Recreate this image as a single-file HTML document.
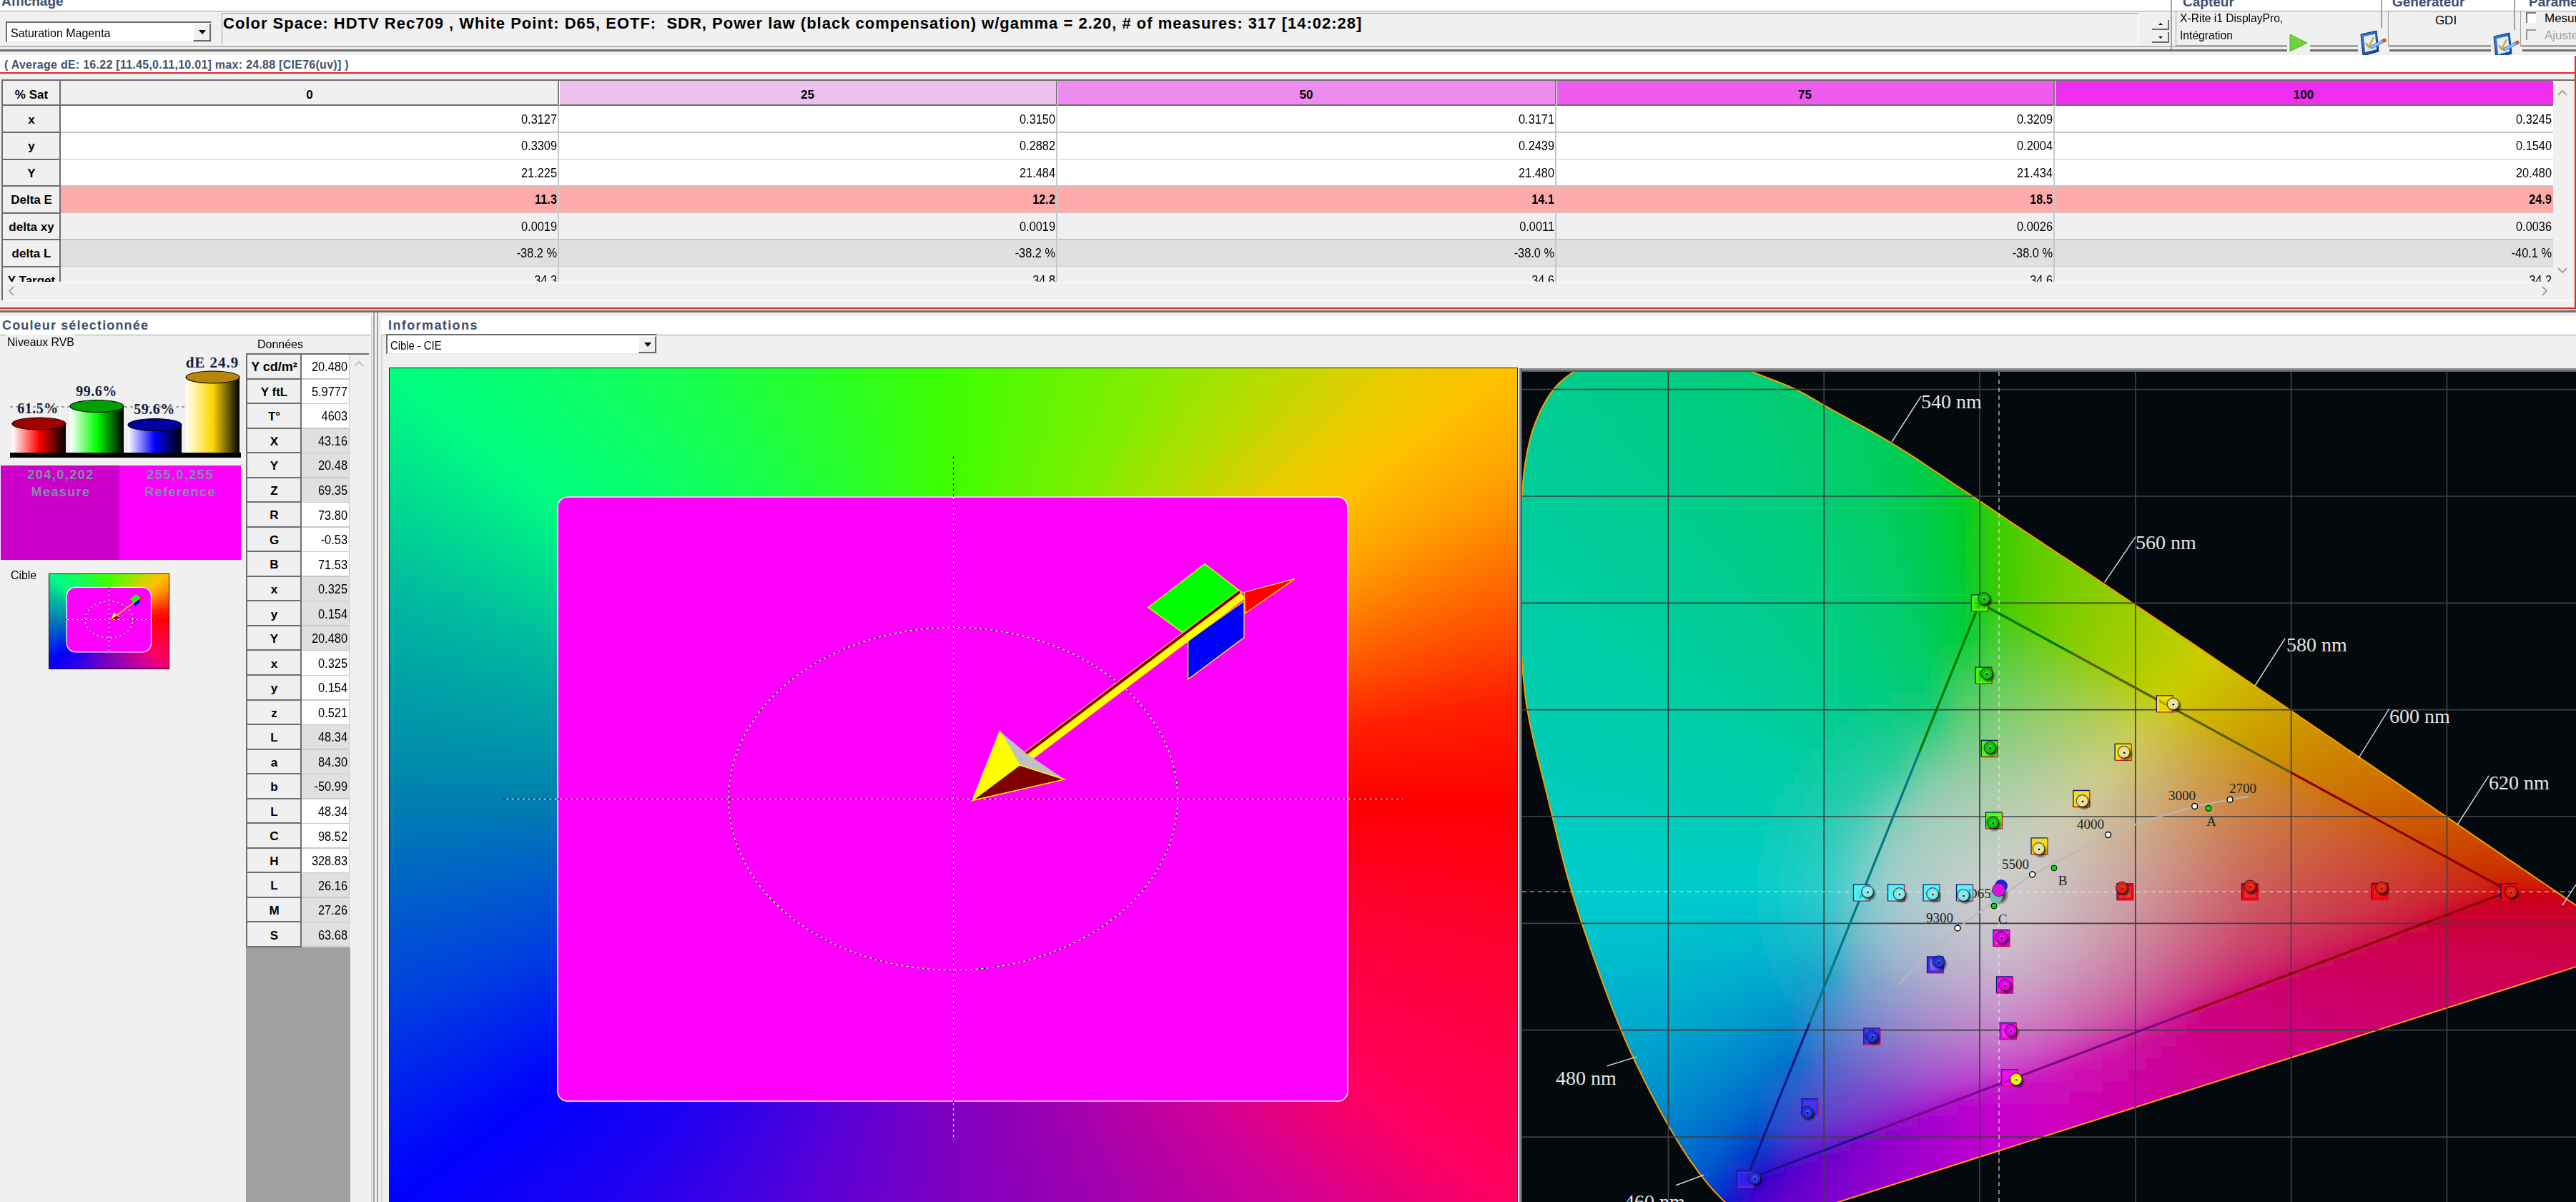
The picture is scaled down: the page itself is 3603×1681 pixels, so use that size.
<!DOCTYPE html><html><head><meta charset="utf-8"><style>html,body{margin:0;padding:0;}body{width:3603px;height:1681px;position:relative;overflow:hidden;background:#f0f0f0;font-family:"Liberation Sans",sans-serif}</style></head><body><div style="position:absolute;left:0px;top:0px;width:3603px;height:15px;background:#ffffff;"></div><div style="position:absolute;left:2px;top:-8.1px;font:bold 19px/1 'Liberation Sans', sans-serif;color:#3d4d70;white-space:pre;">Affichage</div><div style="position:absolute;left:3053px;top:-7.1px;font:bold 19px/1 'Liberation Sans', sans-serif;color:#3d4d70;white-space:pre;">Capteur</div><div style="position:absolute;left:3346px;top:-7.1px;font:bold 19px/1 'Liberation Sans', sans-serif;color:#3d4d70;white-space:pre;">Générateur</div><div style="position:absolute;left:3537px;top:-7.1px;font:bold 19px/1 'Liberation Sans', sans-serif;color:#3d4d70;white-space:pre;">Paramètres</div><div style="position:absolute;left:0px;top:15px;width:3603px;height:1px;background:#a0a0a0;"></div><div style="position:absolute;left:8px;top:30px;width:288px;height:29px;background:#ffffff;border-top:2px solid #6b6b6b;border-left:2px solid #6b6b6b;border-bottom:1px solid #e3e3e3;border-right:1px solid #e3e3e3;box-sizing:border-box"></div><div style="position:absolute;left:270px;top:33px;width:25px;height:25px;background:#f0f0f0;border-right:2px solid #696969;border-bottom:2px solid #696969;border-left:1px solid #fff;border-top:1px solid #fff;box-sizing:border-box"></div><svg style="position:absolute;left:278px;top:42px" width="10" height="7"><path d="M0 0H10L5 6Z" fill="#000"/></svg><div style="position:absolute;left:15px;top:37.6px;font:normal 17px/1 'Liberation Sans', sans-serif;color:#000;white-space:pre;transform:scaleX(0.94);transform-origin:left;">Saturation Magenta</div><div style="position:absolute;left:310px;top:18px;width:2682px;height:44px;background:#f0f0f0;border-top:1px solid #a0a0a0;border-left:1px solid #a0a0a0;border-bottom:1px solid #fff;border-right:1px solid #fff;box-sizing:border-box"></div><div style="position:absolute;left:312px;top:22.4px;font:bold 22px/1 'Liberation Sans', sans-serif;color:#000;white-space:pre;letter-spacing:1px">Color Space: HDTV Rec709 , White Point: D65, EOTF:  SDR, Power law (black compensation) w/gamma = 2.20, # of measures: 317 [14:02:28]</div><div style="position:absolute;left:3010px;top:28px;width:24px;height:14px;background:#f0f0f0;border-right:2px solid #696969;border-bottom:2px solid #696969;box-sizing:border-box"></div><div style="position:absolute;left:3010px;top:45px;width:24px;height:15px;background:#f0f0f0;border-right:2px solid #696969;border-bottom:2px solid #696969;box-sizing:border-box"></div><svg style="position:absolute;left:3019px;top:32px" width="6" height="4"><path d="M0 3H6L3 0Z" fill="#000"/></svg><svg style="position:absolute;left:3019px;top:51px" width="6" height="4"><path d="M0 0H6L3 3Z" fill="#000"/></svg><div style="position:absolute;left:3036px;top:0px;width:2px;height:70px;background:#a0a0a0;"></div><div style="position:absolute;left:0px;top:64px;width:3603px;height:2px;background:#b4b4b4;"></div><div style="position:absolute;left:0px;top:69px;width:3603px;height:3px;background:#6e6e6e;"></div><div style="position:absolute;left:3043px;top:16px;width:287px;height:49px;background:transparent;border-left:1px solid #a0a0a0;border-bottom:2px solid #a0a0a0;box-sizing:border-box"></div><div style="position:absolute;left:3330px;top:0px;width:2px;height:45px;background:#a0a0a0;"></div><div style="position:absolute;left:3049px;top:17.1px;font:normal 17px/1 'Liberation Sans', sans-serif;color:#000;white-space:pre;transform:scaleX(0.92);transform-origin:left;">X-Rite i1 DisplayPro,</div><div style="position:absolute;left:3049px;top:40.6px;font:normal 17px/1 'Liberation Sans', sans-serif;color:#000;white-space:pre;transform:scaleX(0.92);transform-origin:left;">Intégration</div><div style="position:absolute;left:3199px;top:42px;width:32px;height:34px;background:#f0f0f0;"></div><svg style="position:absolute;left:3200px;top:46px" width="30" height="28"><path d="M3 2L27 14L3 26Z" fill="#6cd23c" stroke="#58b030" stroke-width="1"/></svg><div style="position:absolute;left:3298px;top:39px;width:44px;height:40px;background:#f0f0f0;"></div><svg style="position:absolute;left:3300px;top:41px" width="40" height="38" viewBox="0 0 40 38"><defs><linearGradient id="ci3300" x1="0" y1="0" x2="1" y2="1"><stop offset="0" stop-color="#3a8ae0"/><stop offset="1" stop-color="#0a3a90"/></linearGradient></defs><path d="M2 7L24 2L27 31L5 37Z" fill="url(#ci3300)" stroke="#0a3080" stroke-width="1"/><path d="M6 10L22 6.5L24 28L8 32Z" fill="#e6eef9"/><path d="M9 19L13 25L20 11" fill="none" stroke="#d8a420" stroke-width="2.5"/><path d="M17 25L34 16" stroke="#5a9ee8" stroke-width="5" stroke-linecap="round"/><path d="M17 25L34 16" stroke="#a8d0f8" stroke-width="1.5"/><circle cx="35" cy="15.5" r="2.8" fill="#e05020"/></svg><div style="position:absolute;left:3340px;top:16px;width:176px;height:49px;background:transparent;border-left:1px solid #a0a0a0;border-bottom:2px solid #a0a0a0;box-sizing:border-box"></div><div style="position:absolute;left:3516px;top:0px;width:2px;height:45px;background:#a0a0a0;"></div><div style="position:absolute;left:2921px;width:1000px;text-align:center;top:19.6px;font:normal 17px/1 'Liberation Sans', sans-serif;color:#000;white-space:pre;">GDI</div><div style="position:absolute;left:3484px;top:42px;width:44px;height:40px;background:#f0f0f0;"></div><svg style="position:absolute;left:3486px;top:44px" width="40" height="38" viewBox="0 0 40 38"><defs><linearGradient id="ci3486" x1="0" y1="0" x2="1" y2="1"><stop offset="0" stop-color="#3a8ae0"/><stop offset="1" stop-color="#0a3a90"/></linearGradient></defs><path d="M2 7L24 2L27 31L5 37Z" fill="url(#ci3486)" stroke="#0a3080" stroke-width="1"/><path d="M6 10L22 6.5L24 28L8 32Z" fill="#e6eef9"/><path d="M9 19L13 25L20 11" fill="none" stroke="#d8a420" stroke-width="2.5"/><path d="M17 25L34 16" stroke="#5a9ee8" stroke-width="5" stroke-linecap="round"/><path d="M17 25L34 16" stroke="#a8d0f8" stroke-width="1.5"/><circle cx="35" cy="15.5" r="2.8" fill="#e05020"/></svg><div style="position:absolute;left:3525px;top:16px;width:78px;height:49px;background:transparent;border-left:1px solid #a0a0a0;border-bottom:2px solid #a0a0a0;box-sizing:border-box"></div><div style="position:absolute;left:3533px;top:17px;width:14px;height:15px;background:#fff;border-top:2px solid #777;border-left:2px solid #777;box-sizing:border-box"></div><div style="position:absolute;left:3533px;top:41px;width:14px;height:15px;background:#f0f0f0;border-top:2px solid #999;border-left:2px solid #999;box-sizing:border-box"></div><div style="position:absolute;left:3559px;top:16.6px;font:normal 17px/1 'Liberation Sans', sans-serif;color:#000;white-space:pre;">Mesur</div><div style="position:absolute;left:3559px;top:40.6px;font:normal 17px/1 'Liberation Sans', sans-serif;color:#a0a0a0;white-space:pre;">Ajuste</div><div style="position:absolute;left:0px;top:77px;width:3603px;height:25px;background:#ffffff;"></div><div style="position:absolute;left:0px;top:101px;width:3603px;height:2px;background:#e32626;"></div><div style="position:absolute;left:3601px;top:78px;width:2px;height:354px;background:#e32626;"></div><div style="position:absolute;left:6px;top:82.5px;font:bold 16px/1 'Liberation Sans', sans-serif;color:#44506c;white-space:pre;letter-spacing:0.27px">( Average dE: 16.22 [11.45,0.11,10.01] max: 24.88 [CIE76(uv)] )</div><div style="position:absolute;left:2px;top:111px;width:3599px;height:2px;background:#6e6e6e;"></div><div style="position:absolute;left:2px;top:111px;width:2px;height:309px;background:#6e6e6e;"></div><div style="position:absolute;left:4px;top:113px;width:3567px;height:281px;overflow:hidden"><div style="position:absolute;left:0px;top:0px;width:81px;height:34px;background:#f0f0f0;"></div><div style="position:absolute;left:81px;top:0px;width:696px;height:34px;background:#f0f0f0;"></div><div style="position:absolute;left:777px;top:0px;width:697px;height:34px;background:#eec1ee;"></div><div style="position:absolute;left:1474px;top:0px;width:698px;height:34px;background:#ee8bee;"></div><div style="position:absolute;left:2172px;top:0px;width:697px;height:34px;background:#ee5cee;"></div><div style="position:absolute;left:2869px;top:0px;width:698px;height:34px;background:#ee2eee;"></div><div style="position:absolute;left:0px;top:33px;width:3567px;height:2px;background:#6e6e6e;"></div><div style="position:absolute;left:-460px;width:1000px;text-align:center;top:10.6px;font:bold 17px/1 'Liberation Sans', sans-serif;color:#000;white-space:pre;">% Sat</div><div style="position:absolute;left:-71.0px;width:1000px;text-align:center;top:10.6px;font:bold 17px/1 'Liberation Sans', sans-serif;color:#000;white-space:pre;">0</div><div style="position:absolute;left:625.5px;width:1000px;text-align:center;top:10.6px;font:bold 17px/1 'Liberation Sans', sans-serif;color:#000;white-space:pre;">25</div><div style="position:absolute;left:1323.0px;width:1000px;text-align:center;top:10.6px;font:bold 17px/1 'Liberation Sans', sans-serif;color:#000;white-space:pre;">50</div><div style="position:absolute;left:2020.5px;width:1000px;text-align:center;top:10.6px;font:bold 17px/1 'Liberation Sans', sans-serif;color:#000;white-space:pre;">75</div><div style="position:absolute;left:2718.0px;width:1000px;text-align:center;top:10.6px;font:bold 17px/1 'Liberation Sans', sans-serif;color:#000;white-space:pre;">100</div><div style="position:absolute;left:0px;top:34.5px;width:81px;height:38px;background:#f0f0f0;"></div><div style="position:absolute;left:81px;top:34.5px;width:3486px;height:38px;background:#ffffff;"></div><div style="position:absolute;left:0px;top:72.0px;width:81px;height:38px;background:#f0f0f0;"></div><div style="position:absolute;left:81px;top:72.0px;width:3486px;height:38px;background:#ffffff;"></div><div style="position:absolute;left:0px;top:109.5px;width:81px;height:38px;background:#f0f0f0;"></div><div style="position:absolute;left:81px;top:109.5px;width:3486px;height:38px;background:#ffffff;"></div><div style="position:absolute;left:0px;top:147.0px;width:81px;height:38px;background:#f0f0f0;"></div><div style="position:absolute;left:81px;top:147.0px;width:3486px;height:38px;background:#ffaaaa;"></div><div style="position:absolute;left:0px;top:184.5px;width:81px;height:38px;background:#f0f0f0;"></div><div style="position:absolute;left:81px;top:184.5px;width:3486px;height:38px;background:#f0f0f0;"></div><div style="position:absolute;left:0px;top:222.0px;width:81px;height:38px;background:#f0f0f0;"></div><div style="position:absolute;left:81px;top:222.0px;width:3486px;height:38px;background:#e0e0e0;"></div><div style="position:absolute;left:0px;top:259.5px;width:81px;height:38px;background:#f0f0f0;"></div><div style="position:absolute;left:81px;top:259.5px;width:3486px;height:38px;background:#f0f0f0;"></div><div style="position:absolute;left:0px;top:71.0px;width:81px;height:2px;background:#6e6e6e;"></div><div style="position:absolute;left:81px;top:71.0px;width:3486px;height:1.5px;background:#c8c8c8;"></div><div style="position:absolute;left:0px;top:108.5px;width:81px;height:2px;background:#6e6e6e;"></div><div style="position:absolute;left:81px;top:108.5px;width:3486px;height:1.5px;background:#c8c8c8;"></div><div style="position:absolute;left:0px;top:146.0px;width:81px;height:2px;background:#6e6e6e;"></div><div style="position:absolute;left:81px;top:146.0px;width:3486px;height:1.5px;background:#c8c8c8;"></div><div style="position:absolute;left:0px;top:183.5px;width:81px;height:2px;background:#6e6e6e;"></div><div style="position:absolute;left:81px;top:183.5px;width:3486px;height:1.5px;background:#c8c8c8;"></div><div style="position:absolute;left:0px;top:221.0px;width:81px;height:2px;background:#6e6e6e;"></div><div style="position:absolute;left:81px;top:221.0px;width:3486px;height:1.5px;background:#c8c8c8;"></div><div style="position:absolute;left:0px;top:258.5px;width:81px;height:2px;background:#6e6e6e;"></div><div style="position:absolute;left:81px;top:258.5px;width:3486px;height:1.5px;background:#c8c8c8;"></div><div style="position:absolute;left:0px;top:296.0px;width:81px;height:2px;background:#6e6e6e;"></div><div style="position:absolute;left:81px;top:296.0px;width:3486px;height:1.5px;background:#c8c8c8;"></div><div style="position:absolute;left:-460px;width:1000px;text-align:center;top:45.6px;font:bold 17px/1 'Liberation Sans', sans-serif;color:#000;white-space:pre;">x</div><div style="position:absolute;left:-225px;width:1000px;text-align:right;top:43.9px;font:normal 19px/1 'Liberation Sans', sans-serif;color:#000;white-space:pre;transform:scaleX(0.86);transform-origin:right;">0.3127</div><div style="position:absolute;left:472px;width:1000px;text-align:right;top:43.9px;font:normal 19px/1 'Liberation Sans', sans-serif;color:#000;white-space:pre;transform:scaleX(0.86);transform-origin:right;">0.3150</div><div style="position:absolute;left:1170px;width:1000px;text-align:right;top:43.9px;font:normal 19px/1 'Liberation Sans', sans-serif;color:#000;white-space:pre;transform:scaleX(0.86);transform-origin:right;">0.3171</div><div style="position:absolute;left:1867px;width:1000px;text-align:right;top:43.9px;font:normal 19px/1 'Liberation Sans', sans-serif;color:#000;white-space:pre;transform:scaleX(0.86);transform-origin:right;">0.3209</div><div style="position:absolute;left:2565px;width:1000px;text-align:right;top:43.9px;font:normal 19px/1 'Liberation Sans', sans-serif;color:#000;white-space:pre;transform:scaleX(0.86);transform-origin:right;">0.3245</div><div style="position:absolute;left:-460px;width:1000px;text-align:center;top:83.1px;font:bold 17px/1 'Liberation Sans', sans-serif;color:#000;white-space:pre;">y</div><div style="position:absolute;left:-225px;width:1000px;text-align:right;top:81.4px;font:normal 19px/1 'Liberation Sans', sans-serif;color:#000;white-space:pre;transform:scaleX(0.86);transform-origin:right;">0.3309</div><div style="position:absolute;left:472px;width:1000px;text-align:right;top:81.4px;font:normal 19px/1 'Liberation Sans', sans-serif;color:#000;white-space:pre;transform:scaleX(0.86);transform-origin:right;">0.2882</div><div style="position:absolute;left:1170px;width:1000px;text-align:right;top:81.4px;font:normal 19px/1 'Liberation Sans', sans-serif;color:#000;white-space:pre;transform:scaleX(0.86);transform-origin:right;">0.2439</div><div style="position:absolute;left:1867px;width:1000px;text-align:right;top:81.4px;font:normal 19px/1 'Liberation Sans', sans-serif;color:#000;white-space:pre;transform:scaleX(0.86);transform-origin:right;">0.2004</div><div style="position:absolute;left:2565px;width:1000px;text-align:right;top:81.4px;font:normal 19px/1 'Liberation Sans', sans-serif;color:#000;white-space:pre;transform:scaleX(0.86);transform-origin:right;">0.1540</div><div style="position:absolute;left:-460px;width:1000px;text-align:center;top:120.6px;font:bold 17px/1 'Liberation Sans', sans-serif;color:#000;white-space:pre;">Y</div><div style="position:absolute;left:-225px;width:1000px;text-align:right;top:118.9px;font:normal 19px/1 'Liberation Sans', sans-serif;color:#000;white-space:pre;transform:scaleX(0.86);transform-origin:right;">21.225</div><div style="position:absolute;left:472px;width:1000px;text-align:right;top:118.9px;font:normal 19px/1 'Liberation Sans', sans-serif;color:#000;white-space:pre;transform:scaleX(0.86);transform-origin:right;">21.484</div><div style="position:absolute;left:1170px;width:1000px;text-align:right;top:118.9px;font:normal 19px/1 'Liberation Sans', sans-serif;color:#000;white-space:pre;transform:scaleX(0.86);transform-origin:right;">21.480</div><div style="position:absolute;left:1867px;width:1000px;text-align:right;top:118.9px;font:normal 19px/1 'Liberation Sans', sans-serif;color:#000;white-space:pre;transform:scaleX(0.86);transform-origin:right;">21.434</div><div style="position:absolute;left:2565px;width:1000px;text-align:right;top:118.9px;font:normal 19px/1 'Liberation Sans', sans-serif;color:#000;white-space:pre;transform:scaleX(0.86);transform-origin:right;">20.480</div><div style="position:absolute;left:-460px;width:1000px;text-align:center;top:158.1px;font:bold 17px/1 'Liberation Sans', sans-serif;color:#000;white-space:pre;">Delta E</div><div style="position:absolute;left:-225px;width:1000px;text-align:right;top:156.4px;font:bold 19px/1 'Liberation Sans', sans-serif;color:#000;white-space:pre;transform:scaleX(0.86);transform-origin:right;">11.3</div><div style="position:absolute;left:472px;width:1000px;text-align:right;top:156.4px;font:bold 19px/1 'Liberation Sans', sans-serif;color:#000;white-space:pre;transform:scaleX(0.86);transform-origin:right;">12.2</div><div style="position:absolute;left:1170px;width:1000px;text-align:right;top:156.4px;font:bold 19px/1 'Liberation Sans', sans-serif;color:#000;white-space:pre;transform:scaleX(0.86);transform-origin:right;">14.1</div><div style="position:absolute;left:1867px;width:1000px;text-align:right;top:156.4px;font:bold 19px/1 'Liberation Sans', sans-serif;color:#000;white-space:pre;transform:scaleX(0.86);transform-origin:right;">18.5</div><div style="position:absolute;left:2565px;width:1000px;text-align:right;top:156.4px;font:bold 19px/1 'Liberation Sans', sans-serif;color:#000;white-space:pre;transform:scaleX(0.86);transform-origin:right;">24.9</div><div style="position:absolute;left:-460px;width:1000px;text-align:center;top:195.6px;font:bold 17px/1 'Liberation Sans', sans-serif;color:#000;white-space:pre;">delta xy</div><div style="position:absolute;left:-225px;width:1000px;text-align:right;top:193.9px;font:normal 19px/1 'Liberation Sans', sans-serif;color:#000;white-space:pre;transform:scaleX(0.86);transform-origin:right;">0.0019</div><div style="position:absolute;left:472px;width:1000px;text-align:right;top:193.9px;font:normal 19px/1 'Liberation Sans', sans-serif;color:#000;white-space:pre;transform:scaleX(0.86);transform-origin:right;">0.0019</div><div style="position:absolute;left:1170px;width:1000px;text-align:right;top:193.9px;font:normal 19px/1 'Liberation Sans', sans-serif;color:#000;white-space:pre;transform:scaleX(0.86);transform-origin:right;">0.0011</div><div style="position:absolute;left:1867px;width:1000px;text-align:right;top:193.9px;font:normal 19px/1 'Liberation Sans', sans-serif;color:#000;white-space:pre;transform:scaleX(0.86);transform-origin:right;">0.0026</div><div style="position:absolute;left:2565px;width:1000px;text-align:right;top:193.9px;font:normal 19px/1 'Liberation Sans', sans-serif;color:#000;white-space:pre;transform:scaleX(0.86);transform-origin:right;">0.0036</div><div style="position:absolute;left:-460px;width:1000px;text-align:center;top:233.1px;font:bold 17px/1 'Liberation Sans', sans-serif;color:#000;white-space:pre;">delta L</div><div style="position:absolute;left:-225px;width:1000px;text-align:right;top:231.4px;font:normal 19px/1 'Liberation Sans', sans-serif;color:#000;white-space:pre;transform:scaleX(0.86);transform-origin:right;">-38.2 %</div><div style="position:absolute;left:472px;width:1000px;text-align:right;top:231.4px;font:normal 19px/1 'Liberation Sans', sans-serif;color:#000;white-space:pre;transform:scaleX(0.86);transform-origin:right;">-38.2 %</div><div style="position:absolute;left:1170px;width:1000px;text-align:right;top:231.4px;font:normal 19px/1 'Liberation Sans', sans-serif;color:#000;white-space:pre;transform:scaleX(0.86);transform-origin:right;">-38.0 %</div><div style="position:absolute;left:1867px;width:1000px;text-align:right;top:231.4px;font:normal 19px/1 'Liberation Sans', sans-serif;color:#000;white-space:pre;transform:scaleX(0.86);transform-origin:right;">-38.0 %</div><div style="position:absolute;left:2565px;width:1000px;text-align:right;top:231.4px;font:normal 19px/1 'Liberation Sans', sans-serif;color:#000;white-space:pre;transform:scaleX(0.86);transform-origin:right;">-40.1 %</div><div style="position:absolute;left:-460px;width:1000px;text-align:center;top:270.6px;font:bold 17px/1 'Liberation Sans', sans-serif;color:#000;white-space:pre;">Y Target</div><div style="position:absolute;left:-225px;width:1000px;text-align:right;top:268.9px;font:normal 19px/1 'Liberation Sans', sans-serif;color:#000;white-space:pre;transform:scaleX(0.86);transform-origin:right;">34.3</div><div style="position:absolute;left:472px;width:1000px;text-align:right;top:268.9px;font:normal 19px/1 'Liberation Sans', sans-serif;color:#000;white-space:pre;transform:scaleX(0.86);transform-origin:right;">34.8</div><div style="position:absolute;left:1170px;width:1000px;text-align:right;top:268.9px;font:normal 19px/1 'Liberation Sans', sans-serif;color:#000;white-space:pre;transform:scaleX(0.86);transform-origin:right;">34.6</div><div style="position:absolute;left:1867px;width:1000px;text-align:right;top:268.9px;font:normal 19px/1 'Liberation Sans', sans-serif;color:#000;white-space:pre;transform:scaleX(0.86);transform-origin:right;">34.6</div><div style="position:absolute;left:2565px;width:1000px;text-align:right;top:268.9px;font:normal 19px/1 'Liberation Sans', sans-serif;color:#000;white-space:pre;transform:scaleX(0.86);transform-origin:right;">34.2</div><div style="position:absolute;left:79px;top:0px;width:2px;height:281px;background:#6e6e6e;"></div><div style="position:absolute;left:776px;top:34px;width:1.5px;height:247px;background:#c8c8c8;"></div><div style="position:absolute;left:1473px;top:34px;width:1.5px;height:247px;background:#c8c8c8;"></div><div style="position:absolute;left:2171px;top:34px;width:1.5px;height:247px;background:#c8c8c8;"></div><div style="position:absolute;left:2868px;top:34px;width:1.5px;height:247px;background:#c8c8c8;"></div><div style="position:absolute;left:776px;top:0px;width:2px;height:34px;background:#7a7a7a;"></div><div style="position:absolute;left:778px;top:0px;width:1px;height:34px;background:#ffffff;"></div><div style="position:absolute;left:1473px;top:0px;width:2px;height:34px;background:#7a7a7a;"></div><div style="position:absolute;left:1475px;top:0px;width:1px;height:34px;background:#ffffff;"></div><div style="position:absolute;left:2171px;top:0px;width:2px;height:34px;background:#7a7a7a;"></div><div style="position:absolute;left:2173px;top:0px;width:1px;height:34px;background:#ffffff;"></div><div style="position:absolute;left:2868px;top:0px;width:2px;height:34px;background:#7a7a7a;"></div><div style="position:absolute;left:2870px;top:0px;width:1px;height:34px;background:#ffffff;"></div></div><div style="position:absolute;left:3571px;top:113px;width:27px;height:281px;background:#f0f0f0;"></div><svg style="position:absolute;left:3577px;top:125px" width="14" height="10"><path d="M1 8L7 2L13 8" fill="none" stroke="#a6a6a6" stroke-width="2"/></svg><svg style="position:absolute;left:3577px;top:373px" width="14" height="10"><path d="M1 2L7 8L13 2" fill="none" stroke="#a6a6a6" stroke-width="2"/></svg><div style="position:absolute;left:4px;top:394px;width:3594px;height:26px;background:#f0f0f0;"></div><div style="position:absolute;left:4px;top:394px;width:3567px;height:1px;background:#ffffff;"></div><svg style="position:absolute;left:11px;top:400px" width="10" height="14"><path d="M8 1L2 7L8 13" fill="none" stroke="#a6a6a6" stroke-width="2"/></svg><svg style="position:absolute;left:3554px;top:400px" width="10" height="14"><path d="M2 1L8 7L2 13" fill="none" stroke="#a6a6a6" stroke-width="2"/></svg><div style="position:absolute;left:2px;top:420px;width:3599px;height:1px;background:#ffffff;"></div><div style="position:absolute;left:0px;top:430px;width:3603px;height:2px;background:#e32626;"></div><div style="position:absolute;left:0px;top:434px;width:3603px;height:3px;background:#707070;"></div><div style="position:absolute;left:0px;top:442px;width:520px;height:26px;background:#ffffff;border-top-right-radius:8px"></div><div style="position:absolute;left:533px;top:442px;width:3070px;height:26px;background:#ffffff;border-top-left-radius:8px"></div><div style="position:absolute;left:3px;top:445.8px;font:bold 18px/1 'Liberation Sans', sans-serif;color:#3d4d70;white-space:pre;letter-spacing:1.15px">Couleur sélectionnée</div><div style="position:absolute;left:543px;top:445.8px;font:bold 18px/1 'Liberation Sans', sans-serif;color:#3d4d70;white-space:pre;letter-spacing:1.4px">Informations</div><div style="position:absolute;left:0px;top:468px;width:520px;height:1px;background:#a0a0a0;"></div><div style="position:absolute;left:533px;top:468px;width:3070px;height:1px;background:#a0a0a0;"></div><div style="position:absolute;left:519px;top:442px;width:1px;height:1239px;background:#c8c8c8;"></div><div style="position:absolute;left:522px;top:437px;width:2px;height:1244px;background:#a0a0a0;"></div><div style="position:absolute;left:527px;top:437px;width:2px;height:1244px;background:#a0a0a0;"></div><div style="position:absolute;left:533px;top:468px;width:1px;height:1213px;background:#c8c8c8;"></div><div style="position:absolute;left:8px;top:468px;width:97px;height:3px;background:#f0f0f0;"></div><div style="position:absolute;left:10px;top:469.6px;font:normal 17px/1 'Liberation Sans', sans-serif;color:#000;white-space:pre;transform:scaleX(0.93);transform-origin:left;">Niveaux RVB</div><svg style="position:absolute;left:0;top:490px" width="345" height="160" viewBox="0 490 345 160"><defs><linearGradient id="gr" x1="0" x2="1"><stop offset="0" stop-color="#fff"/><stop offset="0.5" stop-color="#f00"/><stop offset="1" stop-color="#000"/></linearGradient><linearGradient id="gg" x1="0" x2="1"><stop offset="0" stop-color="#fff"/><stop offset="0.5" stop-color="#0f0"/><stop offset="1" stop-color="#000"/></linearGradient><linearGradient id="gb" x1="0" x2="1"><stop offset="0" stop-color="#fff"/><stop offset="0.5" stop-color="#00f"/><stop offset="1" stop-color="#000"/></linearGradient><linearGradient id="gy" x1="0" x2="1"><stop offset="0" stop-color="#fffef4"/><stop offset="0.5" stop-color="#ffd700"/><stop offset="1" stop-color="#000"/></linearGradient></defs><line x1="14" y1="569" x2="262" y2="569" stroke="#888" stroke-width="1.5" stroke-dasharray="4 4"/><rect x="17" y="592.5" width="75" height="40.5" fill="url(#gr)"/><ellipse cx="54.5" cy="592.5" rx="37.5" ry="8.5" fill="#a00000" stroke="#000" stroke-width="1.2"/><rect x="98" y="568" width="75" height="65" fill="url(#gg)"/><ellipse cx="135.5" cy="568" rx="37.5" ry="8.5" fill="#00a000" stroke="#000" stroke-width="1.2"/><rect x="179" y="594" width="75" height="39" fill="url(#gb)"/><ellipse cx="216.5" cy="594" rx="37.5" ry="8.5" fill="#0000a0" stroke="#000" stroke-width="1.2"/><rect x="260" y="527.5" width="75" height="105.5" fill="url(#gy)"/><ellipse cx="297.5" cy="527.5" rx="37.5" ry="8.5" fill="#b8860b" stroke="#000" stroke-width="1.2"/><rect x="14" y="633" width="323" height="7" fill="#000"/></svg><div style="position:absolute;left:-447px;width:1000px;text-align:center;top:561.3px;font:bold 20px/1 'Liberation Serif', serif;color:#141c3c;white-space:pre;letter-spacing:0.5px">61.5%</div><div style="position:absolute;left:-365px;width:1000px;text-align:center;top:537.3px;font:bold 20px/1 'Liberation Serif', serif;color:#141c3c;white-space:pre;letter-spacing:0.5px">99.6%</div><div style="position:absolute;left:-284px;width:1000px;text-align:center;top:562.3px;font:bold 20px/1 'Liberation Serif', serif;color:#141c3c;white-space:pre;letter-spacing:0.5px">59.6%</div><div style="position:absolute;left:-203px;width:1000px;text-align:center;top:496.5px;font:bold 21px/1 'Liberation Serif', serif;color:#141c3c;white-space:pre;letter-spacing:1px">dE 24.9</div><div style="position:absolute;left:1px;top:651px;width:166px;height:132px;background:#cc00ca;"></div><div style="position:absolute;left:167px;top:651px;width:170px;height:132px;background:#ff00ff;"></div><div style="position:absolute;left:-415px;width:1000px;text-align:center;top:654.8px;font:bold 18px/1 'Liberation Sans', sans-serif;color:#7f8fa8;white-space:pre;letter-spacing:1.5px">204,0,202</div><div style="position:absolute;left:-415px;width:1000px;text-align:center;top:678.8px;font:bold 18px/1 'Liberation Sans', sans-serif;color:#7f8fa8;white-space:pre;letter-spacing:1.4px">Measure</div><div style="position:absolute;left:-248px;width:1000px;text-align:center;top:654.8px;font:bold 18px/1 'Liberation Sans', sans-serif;color:#7f8fa8;white-space:pre;letter-spacing:1.5px">255,0,255</div><div style="position:absolute;left:-248px;width:1000px;text-align:center;top:678.8px;font:bold 18px/1 'Liberation Sans', sans-serif;color:#7f8fa8;white-space:pre;letter-spacing:1.4px">Reference</div><div style="position:absolute;left:15px;top:795.6px;font:normal 17px/1 'Liberation Sans', sans-serif;color:#000;white-space:pre;transform:scaleX(0.93);transform-origin:left;">Cible</div><div style="position:absolute;left:360px;top:472.6px;font:normal 17px/1 'Liberation Sans', sans-serif;color:#000;white-space:pre;transform:scaleX(0.94);transform-origin:left;">Données</div><div style="position:absolute;left:344px;top:494px;width:172px;height:2px;background:#6e6e6e;"></div><div style="position:absolute;left:344px;top:494px;width:2px;height:1187px;background:#6e6e6e;"></div><div style="position:absolute;left:346px;top:496.0px;width:75px;height:34.54px;background:#f0f0f0;"></div><div style="position:absolute;left:421px;top:496.0px;width:67px;height:34.54px;background:#ffffff;"></div><div style="position:absolute;left:346px;top:528.54px;width:75px;height:2px;background:#6e6e6e;"></div><div style="position:absolute;left:421px;top:529.04px;width:67px;height:1.5px;background:#c8c8c8;"></div><div style="position:absolute;left:-116.5px;width:1000px;text-align:center;top:504.3px;font:bold 18px/1 'Liberation Sans', sans-serif;color:#000;white-space:pre;">Y cd/m²</div><div style="position:absolute;left:-514px;width:1000px;text-align:right;top:504.3px;font:normal 18px/1 'Liberation Sans', sans-serif;color:#000;white-space:pre;transform:scaleX(0.91);transform-origin:right;">20.480</div><div style="position:absolute;left:346px;top:530.54px;width:75px;height:34.54px;background:#f0f0f0;"></div><div style="position:absolute;left:421px;top:530.54px;width:67px;height:34.54px;background:#ffffff;"></div><div style="position:absolute;left:346px;top:563.0799999999999px;width:75px;height:2px;background:#6e6e6e;"></div><div style="position:absolute;left:421px;top:563.5799999999999px;width:67px;height:1.5px;background:#c8c8c8;"></div><div style="position:absolute;left:-116.5px;width:1000px;text-align:center;top:539.6px;font:bold 17px/1 'Liberation Sans', sans-serif;color:#000;white-space:pre;">Y ftL</div><div style="position:absolute;left:-514px;width:1000px;text-align:right;top:538.8px;font:normal 18px/1 'Liberation Sans', sans-serif;color:#000;white-space:pre;transform:scaleX(0.91);transform-origin:right;">5.9777</div><div style="position:absolute;left:346px;top:565.08px;width:75px;height:34.54px;background:#f0f0f0;"></div><div style="position:absolute;left:421px;top:565.08px;width:67px;height:34.54px;background:#ffffff;"></div><div style="position:absolute;left:346px;top:597.62px;width:75px;height:2px;background:#6e6e6e;"></div><div style="position:absolute;left:421px;top:598.12px;width:67px;height:1.5px;background:#c8c8c8;"></div><div style="position:absolute;left:-116.5px;width:1000px;text-align:center;top:574.2px;font:bold 17px/1 'Liberation Sans', sans-serif;color:#000;white-space:pre;">T°</div><div style="position:absolute;left:-514px;width:1000px;text-align:right;top:573.3px;font:normal 18px/1 'Liberation Sans', sans-serif;color:#000;white-space:pre;transform:scaleX(0.91);transform-origin:right;">4603</div><div style="position:absolute;left:346px;top:599.62px;width:75px;height:34.54px;background:#f0f0f0;"></div><div style="position:absolute;left:421px;top:599.62px;width:67px;height:34.54px;background:#e0e0e0;"></div><div style="position:absolute;left:346px;top:632.16px;width:75px;height:2px;background:#6e6e6e;"></div><div style="position:absolute;left:421px;top:632.66px;width:67px;height:1.5px;background:#c8c8c8;"></div><div style="position:absolute;left:-116.5px;width:1000px;text-align:center;top:608.7px;font:bold 17px/1 'Liberation Sans', sans-serif;color:#000;white-space:pre;">X</div><div style="position:absolute;left:-514px;width:1000px;text-align:right;top:607.9px;font:normal 18px/1 'Liberation Sans', sans-serif;color:#000;white-space:pre;transform:scaleX(0.91);transform-origin:right;">43.16</div><div style="position:absolute;left:346px;top:634.16px;width:75px;height:34.54px;background:#f0f0f0;"></div><div style="position:absolute;left:421px;top:634.16px;width:67px;height:34.54px;background:#e0e0e0;"></div><div style="position:absolute;left:346px;top:666.6999999999999px;width:75px;height:2px;background:#6e6e6e;"></div><div style="position:absolute;left:421px;top:667.1999999999999px;width:67px;height:1.5px;background:#c8c8c8;"></div><div style="position:absolute;left:-116.5px;width:1000px;text-align:center;top:643.3px;font:bold 17px/1 'Liberation Sans', sans-serif;color:#000;white-space:pre;">Y</div><div style="position:absolute;left:-514px;width:1000px;text-align:right;top:642.4px;font:normal 18px/1 'Liberation Sans', sans-serif;color:#000;white-space:pre;transform:scaleX(0.91);transform-origin:right;">20.48</div><div style="position:absolute;left:346px;top:668.7px;width:75px;height:34.54px;background:#f0f0f0;"></div><div style="position:absolute;left:421px;top:668.7px;width:67px;height:34.54px;background:#e0e0e0;"></div><div style="position:absolute;left:346px;top:701.24px;width:75px;height:2px;background:#6e6e6e;"></div><div style="position:absolute;left:421px;top:701.74px;width:67px;height:1.5px;background:#c8c8c8;"></div><div style="position:absolute;left:-116.5px;width:1000px;text-align:center;top:677.8px;font:bold 17px/1 'Liberation Sans', sans-serif;color:#000;white-space:pre;">Z</div><div style="position:absolute;left:-514px;width:1000px;text-align:right;top:677.0px;font:normal 18px/1 'Liberation Sans', sans-serif;color:#000;white-space:pre;transform:scaleX(0.91);transform-origin:right;">69.35</div><div style="position:absolute;left:346px;top:703.24px;width:75px;height:34.54px;background:#f0f0f0;"></div><div style="position:absolute;left:421px;top:703.24px;width:67px;height:34.54px;background:#ffffff;"></div><div style="position:absolute;left:346px;top:735.78px;width:75px;height:2px;background:#6e6e6e;"></div><div style="position:absolute;left:421px;top:736.28px;width:67px;height:1.5px;background:#c8c8c8;"></div><div style="position:absolute;left:-116.5px;width:1000px;text-align:center;top:712.3px;font:bold 17px/1 'Liberation Sans', sans-serif;color:#000;white-space:pre;">R</div><div style="position:absolute;left:-514px;width:1000px;text-align:right;top:711.5px;font:normal 18px/1 'Liberation Sans', sans-serif;color:#000;white-space:pre;transform:scaleX(0.91);transform-origin:right;">73.80</div><div style="position:absolute;left:346px;top:737.78px;width:75px;height:34.54px;background:#f0f0f0;"></div><div style="position:absolute;left:421px;top:737.78px;width:67px;height:34.54px;background:#ffffff;"></div><div style="position:absolute;left:346px;top:770.3199999999999px;width:75px;height:2px;background:#6e6e6e;"></div><div style="position:absolute;left:421px;top:770.8199999999999px;width:67px;height:1.5px;background:#c8c8c8;"></div><div style="position:absolute;left:-116.5px;width:1000px;text-align:center;top:746.9px;font:bold 17px/1 'Liberation Sans', sans-serif;color:#000;white-space:pre;">G</div><div style="position:absolute;left:-514px;width:1000px;text-align:right;top:746.0px;font:normal 18px/1 'Liberation Sans', sans-serif;color:#000;white-space:pre;transform:scaleX(0.91);transform-origin:right;">-0.53</div><div style="position:absolute;left:346px;top:772.3199999999999px;width:75px;height:34.54px;background:#f0f0f0;"></div><div style="position:absolute;left:421px;top:772.3199999999999px;width:67px;height:34.54px;background:#ffffff;"></div><div style="position:absolute;left:346px;top:804.8599999999999px;width:75px;height:2px;background:#6e6e6e;"></div><div style="position:absolute;left:421px;top:805.3599999999999px;width:67px;height:1.5px;background:#c8c8c8;"></div><div style="position:absolute;left:-116.5px;width:1000px;text-align:center;top:781.4px;font:bold 17px/1 'Liberation Sans', sans-serif;color:#000;white-space:pre;">B</div><div style="position:absolute;left:-514px;width:1000px;text-align:right;top:780.6px;font:normal 18px/1 'Liberation Sans', sans-serif;color:#000;white-space:pre;transform:scaleX(0.91);transform-origin:right;">71.53</div><div style="position:absolute;left:346px;top:806.86px;width:75px;height:34.54px;background:#f0f0f0;"></div><div style="position:absolute;left:421px;top:806.86px;width:67px;height:34.54px;background:#e0e0e0;"></div><div style="position:absolute;left:346px;top:839.4px;width:75px;height:2px;background:#6e6e6e;"></div><div style="position:absolute;left:421px;top:839.9px;width:67px;height:1.5px;background:#c8c8c8;"></div><div style="position:absolute;left:-116.5px;width:1000px;text-align:center;top:816.0px;font:bold 17px/1 'Liberation Sans', sans-serif;color:#000;white-space:pre;">x</div><div style="position:absolute;left:-514px;width:1000px;text-align:right;top:815.1px;font:normal 18px/1 'Liberation Sans', sans-serif;color:#000;white-space:pre;transform:scaleX(0.91);transform-origin:right;">0.325</div><div style="position:absolute;left:346px;top:841.4px;width:75px;height:34.54px;background:#f0f0f0;"></div><div style="position:absolute;left:421px;top:841.4px;width:67px;height:34.54px;background:#e0e0e0;"></div><div style="position:absolute;left:346px;top:873.9399999999999px;width:75px;height:2px;background:#6e6e6e;"></div><div style="position:absolute;left:421px;top:874.4399999999999px;width:67px;height:1.5px;background:#c8c8c8;"></div><div style="position:absolute;left:-116.5px;width:1000px;text-align:center;top:850.5px;font:bold 17px/1 'Liberation Sans', sans-serif;color:#000;white-space:pre;">y</div><div style="position:absolute;left:-514px;width:1000px;text-align:right;top:849.7px;font:normal 18px/1 'Liberation Sans', sans-serif;color:#000;white-space:pre;transform:scaleX(0.91);transform-origin:right;">0.154</div><div style="position:absolute;left:346px;top:875.94px;width:75px;height:34.54px;background:#f0f0f0;"></div><div style="position:absolute;left:421px;top:875.94px;width:67px;height:34.54px;background:#e0e0e0;"></div><div style="position:absolute;left:346px;top:908.48px;width:75px;height:2px;background:#6e6e6e;"></div><div style="position:absolute;left:421px;top:908.98px;width:67px;height:1.5px;background:#c8c8c8;"></div><div style="position:absolute;left:-116.5px;width:1000px;text-align:center;top:885.0px;font:bold 17px/1 'Liberation Sans', sans-serif;color:#000;white-space:pre;">Y</div><div style="position:absolute;left:-514px;width:1000px;text-align:right;top:884.2px;font:normal 18px/1 'Liberation Sans', sans-serif;color:#000;white-space:pre;transform:scaleX(0.91);transform-origin:right;">20.480</div><div style="position:absolute;left:346px;top:910.48px;width:75px;height:34.54px;background:#f0f0f0;"></div><div style="position:absolute;left:421px;top:910.48px;width:67px;height:34.54px;background:#ffffff;"></div><div style="position:absolute;left:346px;top:943.02px;width:75px;height:2px;background:#6e6e6e;"></div><div style="position:absolute;left:421px;top:943.52px;width:67px;height:1.5px;background:#c8c8c8;"></div><div style="position:absolute;left:-116.5px;width:1000px;text-align:center;top:919.6px;font:bold 17px/1 'Liberation Sans', sans-serif;color:#000;white-space:pre;">x</div><div style="position:absolute;left:-514px;width:1000px;text-align:right;top:918.7px;font:normal 18px/1 'Liberation Sans', sans-serif;color:#000;white-space:pre;transform:scaleX(0.91);transform-origin:right;">0.325</div><div style="position:absolute;left:346px;top:945.02px;width:75px;height:34.54px;background:#f0f0f0;"></div><div style="position:absolute;left:421px;top:945.02px;width:67px;height:34.54px;background:#ffffff;"></div><div style="position:absolute;left:346px;top:977.56px;width:75px;height:2px;background:#6e6e6e;"></div><div style="position:absolute;left:421px;top:978.06px;width:67px;height:1.5px;background:#c8c8c8;"></div><div style="position:absolute;left:-116.5px;width:1000px;text-align:center;top:954.1px;font:bold 17px/1 'Liberation Sans', sans-serif;color:#000;white-space:pre;">y</div><div style="position:absolute;left:-514px;width:1000px;text-align:right;top:953.3px;font:normal 18px/1 'Liberation Sans', sans-serif;color:#000;white-space:pre;transform:scaleX(0.91);transform-origin:right;">0.154</div><div style="position:absolute;left:346px;top:979.56px;width:75px;height:34.54px;background:#f0f0f0;"></div><div style="position:absolute;left:421px;top:979.56px;width:67px;height:34.54px;background:#ffffff;"></div><div style="position:absolute;left:346px;top:1012.0999999999999px;width:75px;height:2px;background:#6e6e6e;"></div><div style="position:absolute;left:421px;top:1012.5999999999999px;width:67px;height:1.5px;background:#c8c8c8;"></div><div style="position:absolute;left:-116.5px;width:1000px;text-align:center;top:988.7px;font:bold 17px/1 'Liberation Sans', sans-serif;color:#000;white-space:pre;">z</div><div style="position:absolute;left:-514px;width:1000px;text-align:right;top:987.8px;font:normal 18px/1 'Liberation Sans', sans-serif;color:#000;white-space:pre;transform:scaleX(0.91);transform-origin:right;">0.521</div><div style="position:absolute;left:346px;top:1014.1px;width:75px;height:34.54px;background:#f0f0f0;"></div><div style="position:absolute;left:421px;top:1014.1px;width:67px;height:34.54px;background:#e0e0e0;"></div><div style="position:absolute;left:346px;top:1046.64px;width:75px;height:2px;background:#6e6e6e;"></div><div style="position:absolute;left:421px;top:1047.14px;width:67px;height:1.5px;background:#c8c8c8;"></div><div style="position:absolute;left:-116.5px;width:1000px;text-align:center;top:1023.2px;font:bold 17px/1 'Liberation Sans', sans-serif;color:#000;white-space:pre;">L</div><div style="position:absolute;left:-514px;width:1000px;text-align:right;top:1022.4px;font:normal 18px/1 'Liberation Sans', sans-serif;color:#000;white-space:pre;transform:scaleX(0.91);transform-origin:right;">48.34</div><div style="position:absolute;left:346px;top:1048.6399999999999px;width:75px;height:34.54px;background:#f0f0f0;"></div><div style="position:absolute;left:421px;top:1048.6399999999999px;width:67px;height:34.54px;background:#e0e0e0;"></div><div style="position:absolute;left:346px;top:1081.1799999999998px;width:75px;height:2px;background:#6e6e6e;"></div><div style="position:absolute;left:421px;top:1081.6799999999998px;width:67px;height:1.5px;background:#c8c8c8;"></div><div style="position:absolute;left:-116.5px;width:1000px;text-align:center;top:1057.7px;font:bold 17px/1 'Liberation Sans', sans-serif;color:#000;white-space:pre;">a</div><div style="position:absolute;left:-514px;width:1000px;text-align:right;top:1056.9px;font:normal 18px/1 'Liberation Sans', sans-serif;color:#000;white-space:pre;transform:scaleX(0.91);transform-origin:right;">84.30</div><div style="position:absolute;left:346px;top:1083.1799999999998px;width:75px;height:34.54px;background:#f0f0f0;"></div><div style="position:absolute;left:421px;top:1083.1799999999998px;width:67px;height:34.54px;background:#e0e0e0;"></div><div style="position:absolute;left:346px;top:1115.7199999999998px;width:75px;height:2px;background:#6e6e6e;"></div><div style="position:absolute;left:421px;top:1116.2199999999998px;width:67px;height:1.5px;background:#c8c8c8;"></div><div style="position:absolute;left:-116.5px;width:1000px;text-align:center;top:1092.3px;font:bold 17px/1 'Liberation Sans', sans-serif;color:#000;white-space:pre;">b</div><div style="position:absolute;left:-514px;width:1000px;text-align:right;top:1091.4px;font:normal 18px/1 'Liberation Sans', sans-serif;color:#000;white-space:pre;transform:scaleX(0.91);transform-origin:right;">-50.99</div><div style="position:absolute;left:346px;top:1117.72px;width:75px;height:34.54px;background:#f0f0f0;"></div><div style="position:absolute;left:421px;top:1117.72px;width:67px;height:34.54px;background:#ffffff;"></div><div style="position:absolute;left:346px;top:1150.26px;width:75px;height:2px;background:#6e6e6e;"></div><div style="position:absolute;left:421px;top:1150.76px;width:67px;height:1.5px;background:#c8c8c8;"></div><div style="position:absolute;left:-116.5px;width:1000px;text-align:center;top:1126.8px;font:bold 17px/1 'Liberation Sans', sans-serif;color:#000;white-space:pre;">L</div><div style="position:absolute;left:-514px;width:1000px;text-align:right;top:1126.0px;font:normal 18px/1 'Liberation Sans', sans-serif;color:#000;white-space:pre;transform:scaleX(0.91);transform-origin:right;">48.34</div><div style="position:absolute;left:346px;top:1152.26px;width:75px;height:34.54px;background:#f0f0f0;"></div><div style="position:absolute;left:421px;top:1152.26px;width:67px;height:34.54px;background:#ffffff;"></div><div style="position:absolute;left:346px;top:1184.8px;width:75px;height:2px;background:#6e6e6e;"></div><div style="position:absolute;left:421px;top:1185.3px;width:67px;height:1.5px;background:#c8c8c8;"></div><div style="position:absolute;left:-116.5px;width:1000px;text-align:center;top:1161.4px;font:bold 17px/1 'Liberation Sans', sans-serif;color:#000;white-space:pre;">C</div><div style="position:absolute;left:-514px;width:1000px;text-align:right;top:1160.5px;font:normal 18px/1 'Liberation Sans', sans-serif;color:#000;white-space:pre;transform:scaleX(0.91);transform-origin:right;">98.52</div><div style="position:absolute;left:346px;top:1186.8px;width:75px;height:34.54px;background:#f0f0f0;"></div><div style="position:absolute;left:421px;top:1186.8px;width:67px;height:34.54px;background:#ffffff;"></div><div style="position:absolute;left:346px;top:1219.34px;width:75px;height:2px;background:#6e6e6e;"></div><div style="position:absolute;left:421px;top:1219.84px;width:67px;height:1.5px;background:#c8c8c8;"></div><div style="position:absolute;left:-116.5px;width:1000px;text-align:center;top:1195.9px;font:bold 17px/1 'Liberation Sans', sans-serif;color:#000;white-space:pre;">H</div><div style="position:absolute;left:-514px;width:1000px;text-align:right;top:1195.1px;font:normal 18px/1 'Liberation Sans', sans-serif;color:#000;white-space:pre;transform:scaleX(0.91);transform-origin:right;">328.83</div><div style="position:absolute;left:346px;top:1221.3400000000001px;width:75px;height:34.54px;background:#f0f0f0;"></div><div style="position:absolute;left:421px;top:1221.3400000000001px;width:67px;height:34.54px;background:#e0e0e0;"></div><div style="position:absolute;left:346px;top:1253.88px;width:75px;height:2px;background:#6e6e6e;"></div><div style="position:absolute;left:421px;top:1254.38px;width:67px;height:1.5px;background:#c8c8c8;"></div><div style="position:absolute;left:-116.5px;width:1000px;text-align:center;top:1230.4px;font:bold 17px/1 'Liberation Sans', sans-serif;color:#000;white-space:pre;">L</div><div style="position:absolute;left:-514px;width:1000px;text-align:right;top:1229.6px;font:normal 18px/1 'Liberation Sans', sans-serif;color:#000;white-space:pre;transform:scaleX(0.91);transform-origin:right;">26.16</div><div style="position:absolute;left:346px;top:1255.88px;width:75px;height:34.54px;background:#f0f0f0;"></div><div style="position:absolute;left:421px;top:1255.88px;width:67px;height:34.54px;background:#e0e0e0;"></div><div style="position:absolute;left:346px;top:1288.42px;width:75px;height:2px;background:#6e6e6e;"></div><div style="position:absolute;left:421px;top:1288.92px;width:67px;height:1.5px;background:#c8c8c8;"></div><div style="position:absolute;left:-116.5px;width:1000px;text-align:center;top:1265.0px;font:bold 17px/1 'Liberation Sans', sans-serif;color:#000;white-space:pre;">M</div><div style="position:absolute;left:-514px;width:1000px;text-align:right;top:1264.1px;font:normal 18px/1 'Liberation Sans', sans-serif;color:#000;white-space:pre;transform:scaleX(0.91);transform-origin:right;">27.26</div><div style="position:absolute;left:346px;top:1290.42px;width:75px;height:34.54px;background:#f0f0f0;"></div><div style="position:absolute;left:421px;top:1290.42px;width:67px;height:34.54px;background:#e0e0e0;"></div><div style="position:absolute;left:346px;top:1322.96px;width:75px;height:2px;background:#6e6e6e;"></div><div style="position:absolute;left:421px;top:1323.46px;width:67px;height:1.5px;background:#c8c8c8;"></div><div style="position:absolute;left:-116.5px;width:1000px;text-align:center;top:1299.5px;font:bold 17px/1 'Liberation Sans', sans-serif;color:#000;white-space:pre;">S</div><div style="position:absolute;left:-514px;width:1000px;text-align:right;top:1298.7px;font:normal 18px/1 'Liberation Sans', sans-serif;color:#000;white-space:pre;transform:scaleX(0.91);transform-origin:right;">63.68</div><div style="position:absolute;left:420px;top:496px;width:2px;height:828.96px;background:#6e6e6e;"></div><div style="position:absolute;left:344px;top:1324.96px;width:146px;height:356.03999999999996px;background:#a0a0a0;"></div><div style="position:absolute;left:488px;top:496px;width:1px;height:828.96px;background:#c8c8c8;"></div><svg style="position:absolute;left:495px;top:504px" width="14" height="10"><path d="M1 8L7 2L13 8" fill="none" stroke="#c0c0c0" stroke-width="2"/></svg><div style="position:absolute;left:540px;top:467px;width:379px;height:28px;background:#ffffff;border-top:2px solid #6b6b6b;border-left:2px solid #6b6b6b;border-bottom:1px solid #e3e3e3;border-right:1px solid #e3e3e3;box-sizing:border-box"></div><div style="position:absolute;left:893px;top:470px;width:25px;height:24px;background:#f0f0f0;border-right:2px solid #696969;border-bottom:2px solid #696969;border-left:1px solid #fff;border-top:1px solid #fff;box-sizing:border-box"></div><svg style="position:absolute;left:901px;top:479px" width="10" height="7"><path d="M0 0H10L5 6Z" fill="#000"/></svg><div style="position:absolute;left:546px;top:474.6px;font:normal 17px/1 'Liberation Sans', sans-serif;color:#000;white-space:pre;transform:scaleX(0.87);transform-origin:left;">Cible - CIE</div><div style="position:absolute;left:544px;top:514px;width:1579px;height:1167px;overflow:hidden;background:conic-gradient(from 0deg at 788.0px 602.0px,#40ff00 0deg,#80ee00 24deg,#b8dc00 37deg,#e8cc00 46deg,#ffc000 52.6deg,#ffa000 60deg,#ff6000 70deg,#ff2000 80deg,#ff0000 90deg,#ff0030 105deg,#ff0060 125.5deg,#d00098 140deg,#a000b0 160deg,#8000c0 180deg,#5800d8 200deg,#2000f0 220deg,#0000ff 234.4deg,#0040e0 250deg,#0080b0 270deg,#00b8a0 290deg,#00ff80 307.4deg,#18ff48 330deg,#40ff00 360deg);border-top:1px solid #222;border-left:1px solid #222;border-right:1px solid #222;box-sizing:border-box"><svg style="position:absolute;left:-1px;top:-1px" width="1579" height="1167" viewBox="0 0 1579.0 1167.0"><rect x="236" y="181" width="1105" height="845"  rx="14" ry="14" fill="#ff00ff" stroke="#fff" stroke-width="1.5"/><g fill="none" stroke-width="1.1"><ellipse cx="789" cy="603" rx="314" ry="239.5" stroke="#fff"/><ellipse cx="789" cy="603" rx="314" ry="239.5" stroke="#000" stroke-dasharray="4 3.5"/><path d="M160 603.5H1418M789.5 124V1081" stroke="#fff"/><path d="M160 603.5H1418M789.5 124V1081" stroke="#000" stroke-dasharray="4 3.5"/></g><g stroke-linejoin="miter"><path d="M1062 335.4L1141 274.5L1193 314.5L1110 370.5Z" fill="#00ff00" stroke="#ffff00" stroke-width="1.2"/><path d="M1196 314.5L1267 295.4L1197.8 343.7Z" fill="#ff0000" stroke="#ffff00" stroke-width="1.2"/><path d="M1117.7 382L1196 326.8L1196 377.6L1117.7 436Z" fill="#0000ff" stroke="#ffff00" stroke-width="1.2"/><path d="M885 550L1193 317" stroke="#ffff00" stroke-width="15"/><path d="M885 544.3L1190 313.7" stroke="#800000" stroke-width="4"/><path d="M854.5 508.5L892 540L945 576L882 556Z" fill="#c0c0c0"/><path d="M816 605.5L854.5 508.5L882 556Z" fill="#ffff00" stroke="#ffff00" stroke-width="1.5"/><path d="M816 605.5L882 556L945 576Z" fill="#800000" stroke="#ffff00" stroke-width="1.5"/></g></svg></div><div style="position:absolute;left:68px;top:802px;width:169px;height:134px;overflow:hidden;background:conic-gradient(from 0deg at 82.923px 63.021px,#40ff00 0deg,#80ee00 24deg,#b8dc00 37deg,#e8cc00 46deg,#ffc000 52.6deg,#ffa000 60deg,#ff6000 70deg,#ff2000 80deg,#ff0000 90deg,#ff0030 105deg,#ff0060 125.5deg,#d00098 140deg,#a000b0 160deg,#8000c0 180deg,#5800d8 200deg,#2000f0 220deg,#0000ff 234.4deg,#0040e0 250deg,#0080b0 270deg,#00b8a0 290deg,#00ff80 307.4deg,#18ff48 330deg,#40ff00 360deg);border:1.5px solid #111;box-sizing:border-box"><svg style="position:absolute;left:-1.5px;top:-1.5px" width="169" height="134" viewBox="0 0 1579.4392523364486 1252.3364485981308"><rect x="236" y="181" width="1105" height="845"  rx="115" ry="115" fill="#ff00ff" stroke="#fff" stroke-width="12"/><g fill="none" stroke-width="9"><ellipse cx="789" cy="603" rx="314" ry="239.5" stroke="#fff"/><ellipse cx="789" cy="603" rx="314" ry="239.5" stroke="#000" stroke-dasharray="30 30"/><path d="M210 603.5H1390M789.5 180V1030" stroke="#fff"/><path d="M210 603.5H1390M789.5 180V1030" stroke="#000" stroke-dasharray="30 30"/></g><g stroke-linejoin="miter"><path d="M1062 335.4L1141 274.5L1193 314.5L1110 370.5Z" fill="#00ff00" stroke="#ffff00" stroke-width="1.2"/><path d="M1196 314.5L1267 295.4L1197.8 343.7Z" fill="#ff0000" stroke="#ffff00" stroke-width="1.2"/><path d="M1117.7 382L1196 326.8L1196 377.6L1117.7 436Z" fill="#0000ff" stroke="#ffff00" stroke-width="1.2"/><path d="M885 550L1193 317" stroke="#ffff00" stroke-width="15"/><path d="M885 544.3L1190 313.7" stroke="#800000" stroke-width="4"/><path d="M854.5 508.5L892 540L945 576L882 556Z" fill="#c0c0c0"/><path d="M816 605.5L854.5 508.5L882 556Z" fill="#ffff00" stroke="#ffff00" stroke-width="1.5"/><path d="M816 605.5L882 556L945 576Z" fill="#800000" stroke="#ffff00" stroke-width="1.5"/></g></svg></div><svg style="position:absolute;left:2129px;top:520px" width="1474" height="1161" viewBox="2129 520 1474 1161"><defs><clipPath id="lc"><path d="M2520.0 1760.0 L2460.0 1730.0 L2444.5 1705.5 L2444.2 1705.3 L2443.8 1705.0 L2443.0 1704.5 L2442.1 1703.9 L2440.9 1703.0 L2439.5 1702.1 L2437.8 1700.9 L2435.9 1699.6 L2433.9 1698.2 L2431.9 1696.8 L2429.9 1695.2 L2427.8 1693.6 L2425.6 1692.0 L2423.4 1690.2 L2421.1 1688.4 L2418.8 1686.5 L2416.4 1684.4 L2413.9 1682.1 L2411.3 1679.7 L2408.6 1677.1 L2405.8 1674.3 L2402.9 1671.3 L2399.9 1668.1 L2396.8 1664.8 L2393.5 1661.2 L2390.2 1657.3 L2386.8 1653.2 L2383.3 1648.8 L2379.7 1644.2 L2375.9 1639.3 L2372.1 1634.1 L2368.1 1628.7 L2364.0 1622.9 L2359.8 1616.7 L2355.5 1610.1 L2351.0 1603.1 L2346.4 1595.7 L2341.7 1587.9 L2336.9 1579.8 L2331.9 1571.2 L2326.8 1562.1 L2321.5 1552.5 L2316.1 1542.4 L2310.5 1531.8 L2304.8 1520.6 L2298.9 1509.0 L2292.9 1496.8 L2286.8 1484.1 L2280.6 1470.8 L2274.4 1456.9 L2268.2 1442.3 L2261.9 1427.2 L2255.6 1411.4 L2249.3 1395.0 L2243.0 1378.0 L2236.7 1360.4 L2230.8 1343.8 L2225.2 1328.1 L2220.1 1313.4 L2215.4 1299.7 L2211.1 1286.9 L2207.2 1275.2 L2203.8 1264.3 L2200.7 1254.5 L2197.7 1244.3 L2194.7 1233.9 L2191.7 1223.2 L2188.7 1212.2 L2185.7 1200.8 L2182.8 1189.2 L2179.9 1177.3 L2176.9 1165.2 L2173.9 1152.7 L2170.8 1139.8 L2167.6 1126.7 L2164.3 1113.3 L2160.9 1099.5 L2157.4 1085.5 L2153.8 1071.1 L2150.0 1056.4 L2146.7 1042.4 L2143.6 1029.2 L2140.9 1016.7 L2138.5 1004.9 L2136.5 993.9 L2134.8 983.5 L2133.5 973.9 L2132.5 965.1 L2131.5 956.0 L2130.6 946.7 L2129.8 937.2 L2129.0 927.5 L2128.2 917.6 L2127.5 907.5 L2126.8 897.2 L2126.2 886.8 L2125.6 876.2 L2125.2 865.5 L2124.8 854.7 L2124.5 843.8 L2124.2 832.8 L2124.1 821.8 L2124.0 810.6 L2124.0 799.4 L2124.1 788.4 L2124.2 777.8 L2124.5 767.5 L2124.8 757.5 L2125.2 747.8 L2125.6 738.4 L2126.2 729.4 L2126.8 720.6 L2127.4 712.3 L2128.0 704.4 L2128.5 696.9 L2129.1 689.8 L2129.6 683.2 L2130.1 677.0 L2130.5 671.2 L2131.0 665.8 L2131.5 660.3 L2132.3 654.5 L2133.1 648.7 L2134.1 642.6 L2135.3 636.4 L2136.5 630.0 L2138.0 623.4 L2139.5 616.6 L2141.3 610.0 L2143.2 603.4 L2145.4 596.9 L2147.7 590.6 L2150.3 584.3 L2153.0 578.1 L2155.9 572.0 L2159.1 566.0 L2162.2 560.4 L2165.5 555.1 L2168.8 550.2 L2172.2 545.6 L2175.6 541.4 L2179.1 537.5 L2182.7 534.1 L2186.3 530.9 L2190.1 527.8 L2194.1 524.8 L2198.3 521.8 L2202.7 518.8 L2207.2 515.8 L2212.0 512.8 L2216.9 509.9 L2222.1 507.1 L2227.5 504.4 L2233.2 501.8 L2239.2 499.5 L2245.5 497.3 L2252.1 495.3 L2259.0 493.4 L2266.2 491.8 L2273.8 490.2 L2281.4 489.0 L2289.2 488.0 L2297.2 487.3 L2305.3 486.9 L2313.6 486.7 L2322.0 486.8 L2330.6 487.2 L2339.4 487.8 L2347.8 488.6 L2355.9 489.5 L2363.8 490.6 L2371.2 491.9 L2378.4 493.3 L2385.3 494.8 L2391.9 496.6 L2398.1 498.4 L2404.1 500.3 L2409.7 502.2 L2415.0 504.1 L2420.0 505.9 L2424.7 507.8 L2429.1 509.7 L2433.1 511.6 L2436.9 513.4 L2441.1 515.5 L2445.9 517.6 L2451.2 519.9 L2457.0 522.3 L2463.4 524.9 L2470.2 527.6 L2477.6 530.5 L2485.4 533.5 L2492.9 536.5 L2500.0 539.5 L2506.7 542.4 L2513.0 545.3 L2519.0 548.3 L2524.5 551.2 L2529.6 554.1 L2534.4 556.9 L2540.0 560.2 L2546.5 564.0 L2553.9 568.2 L2562.1 572.8 L2571.2 577.9 L2581.2 583.4 L2592.1 589.3 L2603.9 595.7 L2615.3 602.0 L2626.5 608.4 L2637.3 614.7 L2647.9 621.0 L2658.2 627.3 L2668.1 633.6 L2677.8 639.9 L2687.2 646.1 L2697.4 653.0 L2708.5 660.4 L2720.5 668.4 L2733.3 677.0 L2747.0 686.1 L2761.6 695.9 L2777.0 706.2 L2793.3 717.1 L2808.7 727.5 L2823.4 737.3 L2837.2 746.5 L2850.2 755.2 L2862.4 763.3 L2873.8 770.8 L2884.4 777.8 L2894.1 784.2 L2903.8 790.7 L2913.6 797.1 L2923.3 803.6 L2933.0 810.0 L2942.7 816.5 L2952.4 823.0 L2962.1 829.5 L2971.8 836.0 L2981.5 842.5 L2991.2 849.1 L3000.9 855.6 L3010.5 862.1 L3020.2 868.6 L3029.8 875.1 L3039.5 881.6 L3049.1 888.2 L3058.7 894.7 L3068.3 901.2 L3077.9 907.6 L3087.4 914.1 L3096.9 920.6 L3106.4 927.0 L3115.9 933.5 L3125.4 939.9 L3134.8 946.4 L3144.2 952.8 L3153.5 959.1 L3162.8 965.5 L3172.1 971.8 L3181.3 978.1 L3190.5 984.4 L3199.7 990.7 L3208.8 996.9 L3217.9 1003.2 L3227.0 1009.3 L3235.9 1015.5 L3244.9 1021.6 L3253.8 1027.7 L3262.6 1033.7 L3271.4 1039.7 L3280.1 1045.7 L3288.8 1051.6 L3297.4 1057.5 L3305.9 1063.3 L3314.4 1069.1 L3322.8 1074.8 L3331.1 1080.5 L3339.4 1086.1 L3347.6 1091.7 L3355.7 1097.2 L3363.7 1102.7 L3371.6 1108.1 L3379.4 1113.4 L3387.1 1118.7 L3394.8 1124.0 L3402.3 1129.1 L3409.7 1134.2 L3417.0 1139.2 L3424.2 1144.1 L3431.3 1148.9 L3438.2 1153.7 L3445.0 1158.3 L3451.7 1162.9 L3458.2 1167.4 L3464.7 1171.8 L3471.1 1176.1 L3477.3 1180.4 L3483.5 1184.6 L3489.6 1188.8 L3495.5 1192.9 L3501.4 1196.9 L3507.2 1200.8 L3512.8 1204.6 L3518.4 1208.4 L3523.8 1212.1 L3529.0 1215.7 L3534.2 1219.2 L3539.2 1222.6 L3544.2 1226.0 L3548.9 1229.2 L3553.6 1232.4 L3558.2 1235.5 L3562.6 1238.5 L3567.0 1241.5 L3571.2 1244.4 L3575.3 1247.2 L3579.3 1249.9 L3583.2 1252.6 L3587.0 1255.2 L3590.7 1257.7 L3594.3 1260.2 L3597.8 1262.6 L3601.2 1264.9 L3604.5 1267.2 L3607.7 1269.4 L3610.8 1271.5 L3613.5 1273.4 L3615.9 1275.0 L3617.8 1276.3 L3619.4 1277.4 L3620.5 1278.2 L3621.3 1278.7 L3621.7 1279.0 L3691.0 1324.0 L2323.8 1760.0Z"/></clipPath><filter id="bl" x="-2%" y="-2%" width="104%" height="104%"><feGaussianBlur stdDeviation="6 8"/></filter><linearGradient id="r0" gradientUnits="userSpaceOnUse" x1="2069" x2="3663" y1="0" y2="0"><stop offset="0.000" stop-color="#00cd92"/><stop offset="0.030" stop-color="#00cd90"/><stop offset="0.061" stop-color="#00cd8d"/><stop offset="0.091" stop-color="#00cd8a"/><stop offset="0.121" stop-color="#00cd86"/><stop offset="0.152" stop-color="#00cd82"/><stop offset="0.182" stop-color="#00cd7e"/><stop offset="0.212" stop-color="#00cd79"/><stop offset="0.242" stop-color="#00cd73"/><stop offset="0.273" stop-color="#00cd6c"/><stop offset="0.303" stop-color="#00cd64"/><stop offset="0.333" stop-color="#00cd5a"/><stop offset="0.364" stop-color="#00cd4c"/><stop offset="0.394" stop-color="#00cd39"/><stop offset="0.424" stop-color="#0acd00"/><stop offset="0.455" stop-color="#3ccd00"/><stop offset="0.485" stop-color="#52cd00"/><stop offset="0.515" stop-color="#62cd00"/><stop offset="0.545" stop-color="#70cd00"/><stop offset="0.576" stop-color="#7ccd00"/><stop offset="0.606" stop-color="#86cd00"/><stop offset="0.636" stop-color="#90cd00"/><stop offset="0.667" stop-color="#99cd00"/><stop offset="0.697" stop-color="#a2cd00"/><stop offset="0.727" stop-color="#aacd00"/><stop offset="0.758" stop-color="#b1cd00"/><stop offset="0.788" stop-color="#b8cd00"/><stop offset="0.818" stop-color="#bfcd00"/><stop offset="0.848" stop-color="#c6cd00"/><stop offset="0.879" stop-color="#cccd00"/><stop offset="0.909" stop-color="#cdc700"/><stop offset="0.939" stop-color="#cdc200"/><stop offset="0.970" stop-color="#cdbd00"/><stop offset="1.000" stop-color="#cdb800"/></linearGradient><linearGradient id="r1" gradientUnits="userSpaceOnUse" x1="2069" x2="3663" y1="0" y2="0"><stop offset="0.000" stop-color="#00cd93"/><stop offset="0.030" stop-color="#00cd90"/><stop offset="0.061" stop-color="#00cd8e"/><stop offset="0.091" stop-color="#00cd8b"/><stop offset="0.121" stop-color="#00cd87"/><stop offset="0.152" stop-color="#00cd83"/><stop offset="0.182" stop-color="#00cd7f"/><stop offset="0.212" stop-color="#00cd7a"/><stop offset="0.242" stop-color="#00cd74"/><stop offset="0.273" stop-color="#00cd6d"/><stop offset="0.303" stop-color="#00cd65"/><stop offset="0.333" stop-color="#00cd5b"/><stop offset="0.364" stop-color="#00cd4d"/><stop offset="0.394" stop-color="#00cd3a"/><stop offset="0.424" stop-color="#00cd00"/><stop offset="0.455" stop-color="#3ccd00"/><stop offset="0.485" stop-color="#52cd00"/><stop offset="0.515" stop-color="#63cd00"/><stop offset="0.545" stop-color="#71cd00"/><stop offset="0.576" stop-color="#7dcd00"/><stop offset="0.606" stop-color="#87cd00"/><stop offset="0.636" stop-color="#91cd00"/><stop offset="0.667" stop-color="#9acd00"/><stop offset="0.697" stop-color="#a3cd00"/><stop offset="0.727" stop-color="#abcd00"/><stop offset="0.758" stop-color="#b3cd00"/><stop offset="0.788" stop-color="#bacd00"/><stop offset="0.818" stop-color="#c1cd00"/><stop offset="0.848" stop-color="#c7cd00"/><stop offset="0.879" stop-color="#cdcb00"/><stop offset="0.909" stop-color="#cdc500"/><stop offset="0.939" stop-color="#cdc000"/><stop offset="0.970" stop-color="#cdbb00"/><stop offset="1.000" stop-color="#cdb600"/></linearGradient><linearGradient id="r2" gradientUnits="userSpaceOnUse" x1="2069" x2="3663" y1="0" y2="0"><stop offset="0.000" stop-color="#00cd94"/><stop offset="0.030" stop-color="#00cd91"/><stop offset="0.061" stop-color="#00cd8e"/><stop offset="0.091" stop-color="#00cd8b"/><stop offset="0.121" stop-color="#00cd88"/><stop offset="0.152" stop-color="#00cd84"/><stop offset="0.182" stop-color="#00cd80"/><stop offset="0.212" stop-color="#00cd7b"/><stop offset="0.242" stop-color="#00cd75"/><stop offset="0.273" stop-color="#00cd6e"/><stop offset="0.303" stop-color="#00cd66"/><stop offset="0.333" stop-color="#00cd5c"/><stop offset="0.364" stop-color="#00cd4e"/><stop offset="0.394" stop-color="#00cd3b"/><stop offset="0.424" stop-color="#00cd0a"/><stop offset="0.455" stop-color="#3ccd00"/><stop offset="0.485" stop-color="#52cd00"/><stop offset="0.515" stop-color="#63cd00"/><stop offset="0.545" stop-color="#71cd00"/><stop offset="0.576" stop-color="#7ecd00"/><stop offset="0.606" stop-color="#89cd00"/><stop offset="0.636" stop-color="#93cd00"/><stop offset="0.667" stop-color="#9ccd00"/><stop offset="0.697" stop-color="#a4cd00"/><stop offset="0.727" stop-color="#adcd00"/><stop offset="0.758" stop-color="#b4cd00"/><stop offset="0.788" stop-color="#bccd00"/><stop offset="0.818" stop-color="#c2cd00"/><stop offset="0.848" stop-color="#c9cd00"/><stop offset="0.879" stop-color="#cdc900"/><stop offset="0.909" stop-color="#cdc400"/><stop offset="0.939" stop-color="#cdbe00"/><stop offset="0.970" stop-color="#cdb900"/><stop offset="1.000" stop-color="#cdb500"/></linearGradient><linearGradient id="r3" gradientUnits="userSpaceOnUse" x1="2069" x2="3663" y1="0" y2="0"><stop offset="0.000" stop-color="#00cd95"/><stop offset="0.030" stop-color="#00cd92"/><stop offset="0.061" stop-color="#00cd8f"/><stop offset="0.091" stop-color="#00cd8c"/><stop offset="0.121" stop-color="#00cd89"/><stop offset="0.152" stop-color="#00cd85"/><stop offset="0.182" stop-color="#00cd81"/><stop offset="0.212" stop-color="#00cd7c"/><stop offset="0.242" stop-color="#00cd76"/><stop offset="0.273" stop-color="#00cd6f"/><stop offset="0.303" stop-color="#00cd67"/><stop offset="0.333" stop-color="#00cd5d"/><stop offset="0.364" stop-color="#00cd4f"/><stop offset="0.394" stop-color="#00cd3c"/><stop offset="0.424" stop-color="#00cd0f"/><stop offset="0.455" stop-color="#3ccd00"/><stop offset="0.485" stop-color="#53cd00"/><stop offset="0.515" stop-color="#64cd00"/><stop offset="0.545" stop-color="#72cd00"/><stop offset="0.576" stop-color="#7fcd00"/><stop offset="0.606" stop-color="#8acd00"/><stop offset="0.636" stop-color="#94cd00"/><stop offset="0.667" stop-color="#9dcd00"/><stop offset="0.697" stop-color="#a6cd00"/><stop offset="0.727" stop-color="#aecd00"/><stop offset="0.758" stop-color="#b6cd00"/><stop offset="0.788" stop-color="#bdcd00"/><stop offset="0.818" stop-color="#c4cd00"/><stop offset="0.848" stop-color="#cbcd00"/><stop offset="0.879" stop-color="#cdc800"/><stop offset="0.909" stop-color="#cdc200"/><stop offset="0.939" stop-color="#cdbc00"/><stop offset="0.970" stop-color="#cdb800"/><stop offset="1.000" stop-color="#cdb300"/></linearGradient><linearGradient id="r4" gradientUnits="userSpaceOnUse" x1="2069" x2="3663" y1="0" y2="0"><stop offset="0.000" stop-color="#00cd95"/><stop offset="0.030" stop-color="#00cd93"/><stop offset="0.061" stop-color="#00cd90"/><stop offset="0.091" stop-color="#00cd8d"/><stop offset="0.121" stop-color="#00cd8a"/><stop offset="0.152" stop-color="#00cd86"/><stop offset="0.182" stop-color="#00cd82"/><stop offset="0.212" stop-color="#00cd7d"/><stop offset="0.242" stop-color="#00cd77"/><stop offset="0.273" stop-color="#00cd70"/><stop offset="0.303" stop-color="#00cd68"/><stop offset="0.333" stop-color="#00cd5e"/><stop offset="0.364" stop-color="#00cd50"/><stop offset="0.394" stop-color="#00cd3d"/><stop offset="0.424" stop-color="#00cd12"/><stop offset="0.455" stop-color="#3ccd00"/><stop offset="0.485" stop-color="#53cd00"/><stop offset="0.515" stop-color="#65cd00"/><stop offset="0.545" stop-color="#73cd00"/><stop offset="0.576" stop-color="#80cd00"/><stop offset="0.606" stop-color="#8bcd00"/><stop offset="0.636" stop-color="#95cd00"/><stop offset="0.667" stop-color="#9fcd00"/><stop offset="0.697" stop-color="#a7cd00"/><stop offset="0.727" stop-color="#b0cd00"/><stop offset="0.758" stop-color="#b8cd00"/><stop offset="0.788" stop-color="#bfcd00"/><stop offset="0.818" stop-color="#c6cd00"/><stop offset="0.848" stop-color="#cdcc00"/><stop offset="0.879" stop-color="#cdc600"/><stop offset="0.909" stop-color="#cdc000"/><stop offset="0.939" stop-color="#cdbb00"/><stop offset="0.970" stop-color="#cdb600"/><stop offset="1.000" stop-color="#cdb100"/></linearGradient><linearGradient id="r5" gradientUnits="userSpaceOnUse" x1="2069" x2="3663" y1="0" y2="0"><stop offset="0.000" stop-color="#00cd96"/><stop offset="0.030" stop-color="#00cd94"/><stop offset="0.061" stop-color="#00cd91"/><stop offset="0.091" stop-color="#00cd8e"/><stop offset="0.121" stop-color="#00cd8b"/><stop offset="0.152" stop-color="#00cd87"/><stop offset="0.182" stop-color="#00cd82"/><stop offset="0.212" stop-color="#00cd7e"/><stop offset="0.242" stop-color="#00cd78"/><stop offset="0.273" stop-color="#00cd71"/><stop offset="0.303" stop-color="#00cd69"/><stop offset="0.333" stop-color="#00cd5f"/><stop offset="0.364" stop-color="#00cd52"/><stop offset="0.394" stop-color="#00cd3e"/><stop offset="0.424" stop-color="#00cd14"/><stop offset="0.455" stop-color="#3ccd00"/><stop offset="0.485" stop-color="#54cd00"/><stop offset="0.515" stop-color="#65cd00"/><stop offset="0.545" stop-color="#74cd00"/><stop offset="0.576" stop-color="#81cd00"/><stop offset="0.606" stop-color="#8ccd00"/><stop offset="0.636" stop-color="#96cd00"/><stop offset="0.667" stop-color="#a0cd00"/><stop offset="0.697" stop-color="#a9cd00"/><stop offset="0.727" stop-color="#b1cd00"/><stop offset="0.758" stop-color="#b9cd00"/><stop offset="0.788" stop-color="#c1cd00"/><stop offset="0.818" stop-color="#c8cd00"/><stop offset="0.848" stop-color="#cdca00"/><stop offset="0.879" stop-color="#cdc400"/><stop offset="0.909" stop-color="#cdbe00"/><stop offset="0.939" stop-color="#cdb900"/><stop offset="0.970" stop-color="#cdb400"/><stop offset="1.000" stop-color="#cdb000"/></linearGradient><linearGradient id="r6" gradientUnits="userSpaceOnUse" x1="2069" x2="3663" y1="0" y2="0"><stop offset="0.000" stop-color="#00cd97"/><stop offset="0.030" stop-color="#00cd95"/><stop offset="0.061" stop-color="#00cd92"/><stop offset="0.091" stop-color="#00cd8f"/><stop offset="0.121" stop-color="#00cd8c"/><stop offset="0.152" stop-color="#00cd88"/><stop offset="0.182" stop-color="#00cd83"/><stop offset="0.212" stop-color="#00cd7f"/><stop offset="0.242" stop-color="#00cd79"/><stop offset="0.273" stop-color="#00cd72"/><stop offset="0.303" stop-color="#00cd6a"/><stop offset="0.333" stop-color="#00cd60"/><stop offset="0.364" stop-color="#00cd53"/><stop offset="0.394" stop-color="#00cd40"/><stop offset="0.424" stop-color="#00cd17"/><stop offset="0.455" stop-color="#3bcd00"/><stop offset="0.485" stop-color="#54cd00"/><stop offset="0.515" stop-color="#66cd00"/><stop offset="0.545" stop-color="#75cd00"/><stop offset="0.576" stop-color="#82cd00"/><stop offset="0.606" stop-color="#8dcd00"/><stop offset="0.636" stop-color="#98cd00"/><stop offset="0.667" stop-color="#a2cd00"/><stop offset="0.697" stop-color="#abcd00"/><stop offset="0.727" stop-color="#b3cd00"/><stop offset="0.758" stop-color="#bbcd00"/><stop offset="0.788" stop-color="#c3cd00"/><stop offset="0.818" stop-color="#cacd00"/><stop offset="0.848" stop-color="#cdc800"/><stop offset="0.879" stop-color="#cdc200"/><stop offset="0.909" stop-color="#cdbc00"/><stop offset="0.939" stop-color="#cdb700"/><stop offset="0.970" stop-color="#cdb200"/><stop offset="1.000" stop-color="#cdae00"/></linearGradient><linearGradient id="r7" gradientUnits="userSpaceOnUse" x1="2069" x2="3663" y1="0" y2="0"><stop offset="0.000" stop-color="#00cd98"/><stop offset="0.030" stop-color="#00cd96"/><stop offset="0.061" stop-color="#00cd93"/><stop offset="0.091" stop-color="#00cd90"/><stop offset="0.121" stop-color="#00cd8d"/><stop offset="0.152" stop-color="#00cd89"/><stop offset="0.182" stop-color="#00cd84"/><stop offset="0.212" stop-color="#00cd80"/><stop offset="0.242" stop-color="#00cd7a"/><stop offset="0.273" stop-color="#00cd73"/><stop offset="0.303" stop-color="#00cd6b"/><stop offset="0.333" stop-color="#00cd61"/><stop offset="0.364" stop-color="#00cd54"/><stop offset="0.394" stop-color="#00cd41"/><stop offset="0.424" stop-color="#00cd19"/><stop offset="0.455" stop-color="#3bcd00"/><stop offset="0.485" stop-color="#54cd00"/><stop offset="0.515" stop-color="#67cd00"/><stop offset="0.545" stop-color="#76cd00"/><stop offset="0.576" stop-color="#83cd00"/><stop offset="0.606" stop-color="#8fcd00"/><stop offset="0.636" stop-color="#99cd00"/><stop offset="0.667" stop-color="#a3cd00"/><stop offset="0.697" stop-color="#accd00"/><stop offset="0.727" stop-color="#b5cd00"/><stop offset="0.758" stop-color="#bdcd00"/><stop offset="0.788" stop-color="#c5cd00"/><stop offset="0.818" stop-color="#cccd00"/><stop offset="0.848" stop-color="#cdc600"/><stop offset="0.879" stop-color="#cdc000"/><stop offset="0.909" stop-color="#cdba00"/><stop offset="0.939" stop-color="#cdb500"/><stop offset="0.970" stop-color="#cdb000"/><stop offset="1.000" stop-color="#cdac00"/></linearGradient><linearGradient id="r8" gradientUnits="userSpaceOnUse" x1="2069" x2="3663" y1="0" y2="0"><stop offset="0.000" stop-color="#00cd99"/><stop offset="0.030" stop-color="#00cd96"/><stop offset="0.061" stop-color="#00cd94"/><stop offset="0.091" stop-color="#00cd91"/><stop offset="0.121" stop-color="#00cd8d"/><stop offset="0.152" stop-color="#00cd8a"/><stop offset="0.182" stop-color="#00cd85"/><stop offset="0.212" stop-color="#00cd81"/><stop offset="0.242" stop-color="#00cd7b"/><stop offset="0.273" stop-color="#00cd74"/><stop offset="0.303" stop-color="#00cd6c"/><stop offset="0.333" stop-color="#00cd62"/><stop offset="0.364" stop-color="#00cd55"/><stop offset="0.394" stop-color="#00cd42"/><stop offset="0.424" stop-color="#00cd1b"/><stop offset="0.455" stop-color="#3bcd00"/><stop offset="0.485" stop-color="#55cd00"/><stop offset="0.515" stop-color="#68cd00"/><stop offset="0.545" stop-color="#77cd00"/><stop offset="0.576" stop-color="#84cd00"/><stop offset="0.606" stop-color="#90cd00"/><stop offset="0.636" stop-color="#9bcd00"/><stop offset="0.667" stop-color="#a5cd00"/><stop offset="0.697" stop-color="#aecd00"/><stop offset="0.727" stop-color="#b7cd00"/><stop offset="0.758" stop-color="#bfcd00"/><stop offset="0.788" stop-color="#c7cd00"/><stop offset="0.818" stop-color="#cdcb00"/><stop offset="0.848" stop-color="#cdc400"/><stop offset="0.879" stop-color="#cdbe00"/><stop offset="0.909" stop-color="#cdb800"/><stop offset="0.939" stop-color="#cdb300"/><stop offset="0.970" stop-color="#cdae00"/><stop offset="1.000" stop-color="#cdaa00"/></linearGradient><linearGradient id="r9" gradientUnits="userSpaceOnUse" x1="2069" x2="3663" y1="0" y2="0"><stop offset="0.000" stop-color="#00cd9a"/><stop offset="0.030" stop-color="#00cd97"/><stop offset="0.061" stop-color="#00cd95"/><stop offset="0.091" stop-color="#00cd92"/><stop offset="0.121" stop-color="#00cd8e"/><stop offset="0.152" stop-color="#00cd8b"/><stop offset="0.182" stop-color="#00cd87"/><stop offset="0.212" stop-color="#00cd82"/><stop offset="0.242" stop-color="#00cd7c"/><stop offset="0.273" stop-color="#00cd75"/><stop offset="0.303" stop-color="#00cd6d"/><stop offset="0.333" stop-color="#00cd63"/><stop offset="0.364" stop-color="#00cd56"/><stop offset="0.394" stop-color="#00cd43"/><stop offset="0.424" stop-color="#00cd1d"/><stop offset="0.455" stop-color="#3bcd00"/><stop offset="0.485" stop-color="#55cd00"/><stop offset="0.515" stop-color="#68cd00"/><stop offset="0.545" stop-color="#78cd00"/><stop offset="0.576" stop-color="#85cd00"/><stop offset="0.606" stop-color="#91cd00"/><stop offset="0.636" stop-color="#9ccd00"/><stop offset="0.667" stop-color="#a6cd00"/><stop offset="0.697" stop-color="#b0cd00"/><stop offset="0.727" stop-color="#b9cd00"/><stop offset="0.758" stop-color="#c1cd00"/><stop offset="0.788" stop-color="#c9cd00"/><stop offset="0.818" stop-color="#cdc900"/><stop offset="0.848" stop-color="#cdc200"/><stop offset="0.879" stop-color="#cdbc00"/><stop offset="0.909" stop-color="#cdb600"/><stop offset="0.939" stop-color="#cdb100"/><stop offset="0.970" stop-color="#cdad00"/><stop offset="1.000" stop-color="#cda800"/></linearGradient><linearGradient id="r10" gradientUnits="userSpaceOnUse" x1="2069" x2="3663" y1="0" y2="0"><stop offset="0.000" stop-color="#00cd9b"/><stop offset="0.030" stop-color="#00cd98"/><stop offset="0.061" stop-color="#00cd96"/><stop offset="0.091" stop-color="#00cd93"/><stop offset="0.121" stop-color="#00cd8f"/><stop offset="0.152" stop-color="#00cd8c"/><stop offset="0.182" stop-color="#00cd88"/><stop offset="0.212" stop-color="#00cd83"/><stop offset="0.242" stop-color="#00cd7d"/><stop offset="0.273" stop-color="#00cd77"/><stop offset="0.303" stop-color="#00cd6f"/><stop offset="0.333" stop-color="#00cd65"/><stop offset="0.364" stop-color="#00cd57"/><stop offset="0.394" stop-color="#00cd45"/><stop offset="0.424" stop-color="#00cd1f"/><stop offset="0.455" stop-color="#3bcd00"/><stop offset="0.485" stop-color="#56cd00"/><stop offset="0.515" stop-color="#69cd00"/><stop offset="0.545" stop-color="#79cd00"/><stop offset="0.576" stop-color="#87cd00"/><stop offset="0.606" stop-color="#93cd00"/><stop offset="0.636" stop-color="#9ecd00"/><stop offset="0.667" stop-color="#a8cd00"/><stop offset="0.697" stop-color="#b2cd00"/><stop offset="0.727" stop-color="#bbcd00"/><stop offset="0.758" stop-color="#c3cd00"/><stop offset="0.788" stop-color="#cbcd00"/><stop offset="0.818" stop-color="#cdc600"/><stop offset="0.848" stop-color="#cdc000"/><stop offset="0.879" stop-color="#cdba00"/><stop offset="0.909" stop-color="#cdb400"/><stop offset="0.939" stop-color="#cdaf00"/><stop offset="0.970" stop-color="#cdab00"/><stop offset="1.000" stop-color="#cda600"/></linearGradient><linearGradient id="r11" gradientUnits="userSpaceOnUse" x1="2069" x2="3663" y1="0" y2="0"><stop offset="0.000" stop-color="#00cd9c"/><stop offset="0.030" stop-color="#00cd99"/><stop offset="0.061" stop-color="#00cd97"/><stop offset="0.091" stop-color="#00cd94"/><stop offset="0.121" stop-color="#00cd90"/><stop offset="0.152" stop-color="#00cd8d"/><stop offset="0.182" stop-color="#00cd89"/><stop offset="0.212" stop-color="#00cd84"/><stop offset="0.242" stop-color="#00cd7e"/><stop offset="0.273" stop-color="#00cd78"/><stop offset="0.303" stop-color="#00cd70"/><stop offset="0.333" stop-color="#00cd66"/><stop offset="0.364" stop-color="#00cd59"/><stop offset="0.394" stop-color="#00cd46"/><stop offset="0.424" stop-color="#00cd21"/><stop offset="0.455" stop-color="#3bcd00"/><stop offset="0.485" stop-color="#57cd00"/><stop offset="0.515" stop-color="#6acd00"/><stop offset="0.545" stop-color="#7acd00"/><stop offset="0.576" stop-color="#88cd00"/><stop offset="0.606" stop-color="#94cd00"/><stop offset="0.636" stop-color="#a0cd00"/><stop offset="0.667" stop-color="#aacd00"/><stop offset="0.697" stop-color="#b4cd00"/><stop offset="0.727" stop-color="#bdcd00"/><stop offset="0.758" stop-color="#c5cd00"/><stop offset="0.788" stop-color="#cdcc00"/><stop offset="0.818" stop-color="#cdc400"/><stop offset="0.848" stop-color="#cdbd00"/><stop offset="0.879" stop-color="#cdb700"/><stop offset="0.909" stop-color="#cdb200"/><stop offset="0.939" stop-color="#cdad00"/><stop offset="0.970" stop-color="#cda900"/><stop offset="1.000" stop-color="#cda400"/></linearGradient><linearGradient id="r12" gradientUnits="userSpaceOnUse" x1="2069" x2="3663" y1="0" y2="0"><stop offset="0.000" stop-color="#00cd9c"/><stop offset="0.030" stop-color="#00cd9a"/><stop offset="0.061" stop-color="#00cd98"/><stop offset="0.091" stop-color="#00cd95"/><stop offset="0.121" stop-color="#00cd91"/><stop offset="0.152" stop-color="#00cd8e"/><stop offset="0.182" stop-color="#00cd8a"/><stop offset="0.212" stop-color="#00cd85"/><stop offset="0.242" stop-color="#00cd7f"/><stop offset="0.273" stop-color="#00cd79"/><stop offset="0.303" stop-color="#00cd71"/><stop offset="0.333" stop-color="#00cd67"/><stop offset="0.364" stop-color="#00cd5a"/><stop offset="0.394" stop-color="#00cd47"/><stop offset="0.424" stop-color="#00cd23"/><stop offset="0.455" stop-color="#3bcd00"/><stop offset="0.485" stop-color="#57cd00"/><stop offset="0.515" stop-color="#6bcd00"/><stop offset="0.545" stop-color="#7bcd00"/><stop offset="0.576" stop-color="#89cd00"/><stop offset="0.606" stop-color="#96cd00"/><stop offset="0.636" stop-color="#a1cd00"/><stop offset="0.667" stop-color="#accd00"/><stop offset="0.697" stop-color="#b6cd00"/><stop offset="0.727" stop-color="#bfcd00"/><stop offset="0.758" stop-color="#c8cd00"/><stop offset="0.788" stop-color="#cdc900"/><stop offset="0.818" stop-color="#cdc200"/><stop offset="0.848" stop-color="#cdbb00"/><stop offset="0.879" stop-color="#cdb500"/><stop offset="0.909" stop-color="#cdb000"/><stop offset="0.939" stop-color="#cdab00"/><stop offset="0.970" stop-color="#cda700"/><stop offset="1.000" stop-color="#cda200"/></linearGradient><linearGradient id="r13" gradientUnits="userSpaceOnUse" x1="2069" x2="3663" y1="0" y2="0"><stop offset="0.000" stop-color="#00cd9d"/><stop offset="0.030" stop-color="#00cd9b"/><stop offset="0.061" stop-color="#00cd99"/><stop offset="0.091" stop-color="#00cd96"/><stop offset="0.121" stop-color="#00cd93"/><stop offset="0.152" stop-color="#00cd8f"/><stop offset="0.182" stop-color="#00cd8b"/><stop offset="0.212" stop-color="#00cd86"/><stop offset="0.242" stop-color="#00cd81"/><stop offset="0.273" stop-color="#00cd7a"/><stop offset="0.303" stop-color="#00cd72"/><stop offset="0.333" stop-color="#00cd68"/><stop offset="0.364" stop-color="#00cd5b"/><stop offset="0.394" stop-color="#00cd49"/><stop offset="0.424" stop-color="#00cd25"/><stop offset="0.455" stop-color="#3bcd00"/><stop offset="0.485" stop-color="#58cd00"/><stop offset="0.515" stop-color="#6ccd00"/><stop offset="0.545" stop-color="#7dcd00"/><stop offset="0.576" stop-color="#8bcd00"/><stop offset="0.606" stop-color="#98cd00"/><stop offset="0.636" stop-color="#a3cd00"/><stop offset="0.667" stop-color="#aecd00"/><stop offset="0.697" stop-color="#b8cd00"/><stop offset="0.727" stop-color="#c1cd00"/><stop offset="0.758" stop-color="#cacd00"/><stop offset="0.788" stop-color="#cdc700"/><stop offset="0.818" stop-color="#cdbf00"/><stop offset="0.848" stop-color="#cdb900"/><stop offset="0.879" stop-color="#cdb300"/><stop offset="0.909" stop-color="#cdae00"/><stop offset="0.939" stop-color="#cda900"/><stop offset="0.970" stop-color="#cda500"/><stop offset="1.000" stop-color="#cda000"/></linearGradient><linearGradient id="r14" gradientUnits="userSpaceOnUse" x1="2069" x2="3663" y1="0" y2="0"><stop offset="0.000" stop-color="#00cd9e"/><stop offset="0.030" stop-color="#00cd9c"/><stop offset="0.061" stop-color="#00cd9a"/><stop offset="0.091" stop-color="#00cd97"/><stop offset="0.121" stop-color="#00cd94"/><stop offset="0.152" stop-color="#00cd90"/><stop offset="0.182" stop-color="#00cd8c"/><stop offset="0.212" stop-color="#00cd87"/><stop offset="0.242" stop-color="#00cd82"/><stop offset="0.273" stop-color="#00cd7b"/><stop offset="0.303" stop-color="#00cd74"/><stop offset="0.333" stop-color="#00cd6a"/><stop offset="0.364" stop-color="#00cd5d"/><stop offset="0.394" stop-color="#00cd4a"/><stop offset="0.424" stop-color="#00cd27"/><stop offset="0.455" stop-color="#3bcd00"/><stop offset="0.485" stop-color="#58cd00"/><stop offset="0.515" stop-color="#6dcd00"/><stop offset="0.545" stop-color="#7ecd00"/><stop offset="0.576" stop-color="#8dcd00"/><stop offset="0.606" stop-color="#99cd00"/><stop offset="0.636" stop-color="#a5cd00"/><stop offset="0.667" stop-color="#b0cd00"/><stop offset="0.697" stop-color="#bacd00"/><stop offset="0.727" stop-color="#c4cd00"/><stop offset="0.758" stop-color="#cccd00"/><stop offset="0.788" stop-color="#cdc400"/><stop offset="0.818" stop-color="#cdbd00"/><stop offset="0.848" stop-color="#cdb700"/><stop offset="0.879" stop-color="#cdb100"/><stop offset="0.909" stop-color="#cdac00"/><stop offset="0.939" stop-color="#cda700"/><stop offset="0.970" stop-color="#cda300"/><stop offset="1.000" stop-color="#cd9e00"/></linearGradient><linearGradient id="r15" gradientUnits="userSpaceOnUse" x1="2069" x2="3663" y1="0" y2="0"><stop offset="0.000" stop-color="#00cd9f"/><stop offset="0.030" stop-color="#00cd9d"/><stop offset="0.061" stop-color="#00cd9b"/><stop offset="0.091" stop-color="#00cd98"/><stop offset="0.121" stop-color="#00cd95"/><stop offset="0.152" stop-color="#00cd91"/><stop offset="0.182" stop-color="#00cd8d"/><stop offset="0.212" stop-color="#00cd89"/><stop offset="0.242" stop-color="#00cd83"/><stop offset="0.273" stop-color="#00cd7d"/><stop offset="0.303" stop-color="#00cd75"/><stop offset="0.333" stop-color="#00cd6b"/><stop offset="0.364" stop-color="#00cd5e"/><stop offset="0.394" stop-color="#00cd4b"/><stop offset="0.424" stop-color="#00cd29"/><stop offset="0.455" stop-color="#3bcd00"/><stop offset="0.485" stop-color="#59cd00"/><stop offset="0.515" stop-color="#6ecd00"/><stop offset="0.545" stop-color="#7fcd00"/><stop offset="0.576" stop-color="#8ecd00"/><stop offset="0.606" stop-color="#9bcd00"/><stop offset="0.636" stop-color="#a7cd00"/><stop offset="0.667" stop-color="#b2cd00"/><stop offset="0.697" stop-color="#bccd00"/><stop offset="0.727" stop-color="#c6cd00"/><stop offset="0.758" stop-color="#cdca00"/><stop offset="0.788" stop-color="#cdc200"/><stop offset="0.818" stop-color="#cdbb00"/><stop offset="0.848" stop-color="#cdb400"/><stop offset="0.879" stop-color="#cdaf00"/><stop offset="0.909" stop-color="#cda900"/><stop offset="0.939" stop-color="#cda500"/><stop offset="0.970" stop-color="#cda000"/><stop offset="1.000" stop-color="#cd9c00"/></linearGradient><linearGradient id="r16" gradientUnits="userSpaceOnUse" x1="2069" x2="3663" y1="0" y2="0"><stop offset="0.000" stop-color="#00cda0"/><stop offset="0.030" stop-color="#00cd9e"/><stop offset="0.061" stop-color="#00cd9c"/><stop offset="0.091" stop-color="#00cd99"/><stop offset="0.121" stop-color="#00cd96"/><stop offset="0.152" stop-color="#00cd92"/><stop offset="0.182" stop-color="#00cd8e"/><stop offset="0.212" stop-color="#00cd8a"/><stop offset="0.242" stop-color="#00cd84"/><stop offset="0.273" stop-color="#00cd7e"/><stop offset="0.303" stop-color="#00cd76"/><stop offset="0.333" stop-color="#00cd6c"/><stop offset="0.364" stop-color="#00cd5f"/><stop offset="0.394" stop-color="#00cd4d"/><stop offset="0.424" stop-color="#00cd2b"/><stop offset="0.455" stop-color="#3bcd00"/><stop offset="0.485" stop-color="#5acd00"/><stop offset="0.515" stop-color="#6fcd00"/><stop offset="0.545" stop-color="#81cd00"/><stop offset="0.576" stop-color="#90cd00"/><stop offset="0.606" stop-color="#9dcd00"/><stop offset="0.636" stop-color="#a9cd00"/><stop offset="0.667" stop-color="#b4cd00"/><stop offset="0.697" stop-color="#bfcd00"/><stop offset="0.727" stop-color="#c9cd00"/><stop offset="0.758" stop-color="#cdc700"/><stop offset="0.788" stop-color="#cdbf00"/><stop offset="0.818" stop-color="#cdb800"/><stop offset="0.848" stop-color="#cdb200"/><stop offset="0.879" stop-color="#cdac00"/><stop offset="0.909" stop-color="#cda700"/><stop offset="0.939" stop-color="#cda300"/><stop offset="0.970" stop-color="#cd9e00"/><stop offset="1.000" stop-color="#cd9a00"/></linearGradient><linearGradient id="r17" gradientUnits="userSpaceOnUse" x1="2069" x2="3663" y1="0" y2="0"><stop offset="0.000" stop-color="#00cda1"/><stop offset="0.030" stop-color="#00cd9f"/><stop offset="0.061" stop-color="#00cd9d"/><stop offset="0.091" stop-color="#00cd9a"/><stop offset="0.121" stop-color="#00cd97"/><stop offset="0.152" stop-color="#00cd94"/><stop offset="0.182" stop-color="#00cd90"/><stop offset="0.212" stop-color="#00cd8b"/><stop offset="0.242" stop-color="#00cd86"/><stop offset="0.273" stop-color="#00cd7f"/><stop offset="0.303" stop-color="#00cd78"/><stop offset="0.333" stop-color="#00cd6e"/><stop offset="0.364" stop-color="#00cd61"/><stop offset="0.394" stop-color="#00cd4e"/><stop offset="0.424" stop-color="#00cd2d"/><stop offset="0.455" stop-color="#3bcd00"/><stop offset="0.485" stop-color="#5acd00"/><stop offset="0.515" stop-color="#71cd00"/><stop offset="0.545" stop-color="#82cd00"/><stop offset="0.576" stop-color="#92cd00"/><stop offset="0.606" stop-color="#9fcd00"/><stop offset="0.636" stop-color="#abcd00"/><stop offset="0.667" stop-color="#b7cd00"/><stop offset="0.697" stop-color="#c1cd00"/><stop offset="0.727" stop-color="#cbcd00"/><stop offset="0.758" stop-color="#cdc500"/><stop offset="0.788" stop-color="#cdbd00"/><stop offset="0.818" stop-color="#cdb600"/><stop offset="0.848" stop-color="#cdb000"/><stop offset="0.879" stop-color="#cdaa00"/><stop offset="0.909" stop-color="#cda500"/><stop offset="0.939" stop-color="#cda000"/><stop offset="0.970" stop-color="#cd9c00"/><stop offset="1.000" stop-color="#cd9800"/></linearGradient><linearGradient id="r18" gradientUnits="userSpaceOnUse" x1="2069" x2="3663" y1="0" y2="0"><stop offset="0.000" stop-color="#00cda2"/><stop offset="0.030" stop-color="#00cda0"/><stop offset="0.061" stop-color="#00cd9e"/><stop offset="0.091" stop-color="#00cd9b"/><stop offset="0.121" stop-color="#00cd98"/><stop offset="0.152" stop-color="#00cd95"/><stop offset="0.182" stop-color="#00cd91"/><stop offset="0.212" stop-color="#00cd8c"/><stop offset="0.242" stop-color="#00cd87"/><stop offset="0.273" stop-color="#00cd81"/><stop offset="0.303" stop-color="#00cd79"/><stop offset="0.333" stop-color="#00cd6f"/><stop offset="0.364" stop-color="#00cd62"/><stop offset="0.394" stop-color="#00cd50"/><stop offset="0.424" stop-color="#00cd2e"/><stop offset="0.455" stop-color="#3bcd00"/><stop offset="0.485" stop-color="#5bcd00"/><stop offset="0.515" stop-color="#72cd00"/><stop offset="0.545" stop-color="#84cd00"/><stop offset="0.576" stop-color="#93cd00"/><stop offset="0.606" stop-color="#a1cd00"/><stop offset="0.636" stop-color="#aecd00"/><stop offset="0.667" stop-color="#b9cd00"/><stop offset="0.697" stop-color="#c4cd00"/><stop offset="0.727" stop-color="#cdcb00"/><stop offset="0.758" stop-color="#cdc200"/><stop offset="0.788" stop-color="#cdba00"/><stop offset="0.818" stop-color="#cdb300"/><stop offset="0.848" stop-color="#cdad00"/><stop offset="0.879" stop-color="#cda800"/><stop offset="0.909" stop-color="#cda300"/><stop offset="0.939" stop-color="#cd9e00"/><stop offset="0.970" stop-color="#cd9a00"/><stop offset="1.000" stop-color="#cd9600"/></linearGradient><linearGradient id="r19" gradientUnits="userSpaceOnUse" x1="2069" x2="3663" y1="0" y2="0"><stop offset="0.000" stop-color="#00cda3"/><stop offset="0.030" stop-color="#00cda1"/><stop offset="0.061" stop-color="#00cd9f"/><stop offset="0.091" stop-color="#00cd9c"/><stop offset="0.121" stop-color="#00cd99"/><stop offset="0.152" stop-color="#00cd96"/><stop offset="0.182" stop-color="#00cd92"/><stop offset="0.212" stop-color="#00cd8e"/><stop offset="0.242" stop-color="#00cd88"/><stop offset="0.273" stop-color="#00cd82"/><stop offset="0.303" stop-color="#00cd7a"/><stop offset="0.333" stop-color="#00cd71"/><stop offset="0.364" stop-color="#00cd64"/><stop offset="0.394" stop-color="#00cd52"/><stop offset="0.424" stop-color="#00cd30"/><stop offset="0.455" stop-color="#3bcd00"/><stop offset="0.485" stop-color="#5ccd00"/><stop offset="0.515" stop-color="#73cd00"/><stop offset="0.545" stop-color="#86cd00"/><stop offset="0.576" stop-color="#95cd00"/><stop offset="0.606" stop-color="#a3cd00"/><stop offset="0.636" stop-color="#b0cd00"/><stop offset="0.667" stop-color="#bccd00"/><stop offset="0.697" stop-color="#c7cd00"/><stop offset="0.727" stop-color="#cdc800"/><stop offset="0.758" stop-color="#cdbf00"/><stop offset="0.788" stop-color="#cdb700"/><stop offset="0.818" stop-color="#cdb100"/><stop offset="0.848" stop-color="#cdab00"/><stop offset="0.879" stop-color="#cda500"/><stop offset="0.909" stop-color="#cda000"/><stop offset="0.939" stop-color="#cd9c00"/><stop offset="0.970" stop-color="#cd9800"/><stop offset="1.000" stop-color="#cd9400"/></linearGradient><linearGradient id="r20" gradientUnits="userSpaceOnUse" x1="2069" x2="3663" y1="0" y2="0"><stop offset="0.000" stop-color="#00cda4"/><stop offset="0.030" stop-color="#00cda2"/><stop offset="0.061" stop-color="#00cda0"/><stop offset="0.091" stop-color="#00cd9d"/><stop offset="0.121" stop-color="#00cd9b"/><stop offset="0.152" stop-color="#00cd97"/><stop offset="0.182" stop-color="#00cd93"/><stop offset="0.212" stop-color="#00cd8f"/><stop offset="0.242" stop-color="#00cd8a"/><stop offset="0.273" stop-color="#00cd84"/><stop offset="0.303" stop-color="#00cd7c"/><stop offset="0.333" stop-color="#00cd72"/><stop offset="0.364" stop-color="#00cd66"/><stop offset="0.394" stop-color="#00cd53"/><stop offset="0.424" stop-color="#00cd32"/><stop offset="0.455" stop-color="#3acd00"/><stop offset="0.485" stop-color="#5dcd00"/><stop offset="0.515" stop-color="#74cd00"/><stop offset="0.545" stop-color="#87cd00"/><stop offset="0.576" stop-color="#97cd00"/><stop offset="0.606" stop-color="#a6cd00"/><stop offset="0.636" stop-color="#b3cd00"/><stop offset="0.667" stop-color="#bfcd00"/><stop offset="0.697" stop-color="#cacd00"/><stop offset="0.727" stop-color="#cdc500"/><stop offset="0.758" stop-color="#cdbc00"/><stop offset="0.788" stop-color="#cdb500"/><stop offset="0.818" stop-color="#cdae00"/><stop offset="0.848" stop-color="#cda800"/><stop offset="0.879" stop-color="#cda300"/><stop offset="0.909" stop-color="#cd9e00"/><stop offset="0.939" stop-color="#cd9900"/><stop offset="0.970" stop-color="#cd9500"/><stop offset="1.000" stop-color="#cd9100"/></linearGradient><linearGradient id="r21" gradientUnits="userSpaceOnUse" x1="2069" x2="3663" y1="0" y2="0"><stop offset="0.000" stop-color="#00cda5"/><stop offset="0.030" stop-color="#00cda3"/><stop offset="0.061" stop-color="#00cda1"/><stop offset="0.091" stop-color="#00cd9f"/><stop offset="0.121" stop-color="#00cd9c"/><stop offset="0.152" stop-color="#00cd99"/><stop offset="0.182" stop-color="#00cd95"/><stop offset="0.212" stop-color="#00cd90"/><stop offset="0.242" stop-color="#00cd8b"/><stop offset="0.273" stop-color="#00cd85"/><stop offset="0.303" stop-color="#00cd7e"/><stop offset="0.333" stop-color="#00cd74"/><stop offset="0.364" stop-color="#00cd67"/><stop offset="0.394" stop-color="#00cd55"/><stop offset="0.424" stop-color="#00cd34"/><stop offset="0.455" stop-color="#3acd00"/><stop offset="0.485" stop-color="#5ecd00"/><stop offset="0.515" stop-color="#76cd00"/><stop offset="0.545" stop-color="#89cd00"/><stop offset="0.576" stop-color="#9acd00"/><stop offset="0.606" stop-color="#a8cd00"/><stop offset="0.636" stop-color="#b6cd00"/><stop offset="0.667" stop-color="#c2cd00"/><stop offset="0.697" stop-color="#cdcc00"/><stop offset="0.727" stop-color="#cdc200"/><stop offset="0.758" stop-color="#cdb900"/><stop offset="0.788" stop-color="#cdb200"/><stop offset="0.818" stop-color="#cdab00"/><stop offset="0.848" stop-color="#cda500"/><stop offset="0.879" stop-color="#cda000"/><stop offset="0.909" stop-color="#cd9b00"/><stop offset="0.939" stop-color="#cd9700"/><stop offset="0.970" stop-color="#cd9300"/><stop offset="1.000" stop-color="#cd8f00"/></linearGradient><linearGradient id="r22" gradientUnits="userSpaceOnUse" x1="2069" x2="3663" y1="0" y2="0"><stop offset="0.000" stop-color="#00cda7"/><stop offset="0.030" stop-color="#00cda5"/><stop offset="0.061" stop-color="#00cda2"/><stop offset="0.091" stop-color="#00cda0"/><stop offset="0.121" stop-color="#00cd9d"/><stop offset="0.152" stop-color="#00cd9a"/><stop offset="0.182" stop-color="#00cd96"/><stop offset="0.212" stop-color="#00cd92"/><stop offset="0.242" stop-color="#00cd8d"/><stop offset="0.273" stop-color="#00cd87"/><stop offset="0.303" stop-color="#00cd7f"/><stop offset="0.333" stop-color="#00cd76"/><stop offset="0.364" stop-color="#00cd69"/><stop offset="0.394" stop-color="#00cd57"/><stop offset="0.424" stop-color="#00cd36"/><stop offset="0.455" stop-color="#3acd00"/><stop offset="0.485" stop-color="#5fcd00"/><stop offset="0.515" stop-color="#78cd00"/><stop offset="0.545" stop-color="#8bcd00"/><stop offset="0.576" stop-color="#9ccd00"/><stop offset="0.606" stop-color="#abcd00"/><stop offset="0.636" stop-color="#b8cd00"/><stop offset="0.667" stop-color="#c5cd00"/><stop offset="0.697" stop-color="#cdc900"/><stop offset="0.727" stop-color="#cdbf00"/><stop offset="0.758" stop-color="#cdb600"/><stop offset="0.788" stop-color="#cdaf00"/><stop offset="0.818" stop-color="#cda800"/><stop offset="0.848" stop-color="#cda300"/><stop offset="0.879" stop-color="#cd9d00"/><stop offset="0.909" stop-color="#cd9900"/><stop offset="0.939" stop-color="#cd9400"/><stop offset="0.970" stop-color="#cd9000"/><stop offset="1.000" stop-color="#cd8d00"/></linearGradient><linearGradient id="r23" gradientUnits="userSpaceOnUse" x1="2069" x2="3663" y1="0" y2="0"><stop offset="0.000" stop-color="#00cda8"/><stop offset="0.030" stop-color="#00cda6"/><stop offset="0.061" stop-color="#00cda4"/><stop offset="0.091" stop-color="#00cda1"/><stop offset="0.121" stop-color="#00cd9e"/><stop offset="0.152" stop-color="#00cd9b"/><stop offset="0.182" stop-color="#00cd98"/><stop offset="0.212" stop-color="#00cd93"/><stop offset="0.242" stop-color="#00cd8e"/><stop offset="0.273" stop-color="#00cd88"/><stop offset="0.303" stop-color="#00cd81"/><stop offset="0.333" stop-color="#00cd77"/><stop offset="0.364" stop-color="#00cd6b"/><stop offset="0.394" stop-color="#00cd59"/><stop offset="0.424" stop-color="#00cd38"/><stop offset="0.455" stop-color="#3acd00"/><stop offset="0.485" stop-color="#60cd00"/><stop offset="0.515" stop-color="#79cd00"/><stop offset="0.545" stop-color="#8dcd00"/><stop offset="0.576" stop-color="#9ecd00"/><stop offset="0.606" stop-color="#aecd00"/><stop offset="0.636" stop-color="#bbcd00"/><stop offset="0.667" stop-color="#c8cd00"/><stop offset="0.697" stop-color="#cdc500"/><stop offset="0.727" stop-color="#cdbc00"/><stop offset="0.758" stop-color="#cdb300"/><stop offset="0.788" stop-color="#cdac00"/><stop offset="0.818" stop-color="#cda600"/><stop offset="0.848" stop-color="#cda000"/><stop offset="0.879" stop-color="#cd9b00"/><stop offset="0.909" stop-color="#cd9600"/><stop offset="0.939" stop-color="#cd9200"/><stop offset="0.970" stop-color="#cd8e00"/><stop offset="1.000" stop-color="#cd8a00"/></linearGradient><linearGradient id="r24" gradientUnits="userSpaceOnUse" x1="2069" x2="3663" y1="0" y2="0"><stop offset="0.000" stop-color="#00cda9"/><stop offset="0.030" stop-color="#00cda7"/><stop offset="0.061" stop-color="#00cda5"/><stop offset="0.091" stop-color="#00cda2"/><stop offset="0.121" stop-color="#00cda0"/><stop offset="0.152" stop-color="#00cd9d"/><stop offset="0.182" stop-color="#00cd99"/><stop offset="0.212" stop-color="#00cd95"/><stop offset="0.242" stop-color="#00cd90"/><stop offset="0.273" stop-color="#00cd8a"/><stop offset="0.303" stop-color="#00cd83"/><stop offset="0.333" stop-color="#00cd79"/><stop offset="0.364" stop-color="#00cd6d"/><stop offset="0.394" stop-color="#00cd5a"/><stop offset="0.424" stop-color="#00cd3a"/><stop offset="0.455" stop-color="#3dcd16"/><stop offset="0.485" stop-color="#61cd00"/><stop offset="0.515" stop-color="#7bcd00"/><stop offset="0.545" stop-color="#90cd00"/><stop offset="0.576" stop-color="#a1cd00"/><stop offset="0.606" stop-color="#b1cd00"/><stop offset="0.636" stop-color="#bfcd00"/><stop offset="0.667" stop-color="#cccd00"/><stop offset="0.697" stop-color="#cdc200"/><stop offset="0.727" stop-color="#cdb800"/><stop offset="0.758" stop-color="#cdb000"/><stop offset="0.788" stop-color="#cda900"/><stop offset="0.818" stop-color="#cda300"/><stop offset="0.848" stop-color="#cd9d00"/><stop offset="0.879" stop-color="#cd9800"/><stop offset="0.909" stop-color="#cd9300"/><stop offset="0.939" stop-color="#cd8f00"/><stop offset="0.970" stop-color="#cd8b00"/><stop offset="1.000" stop-color="#cd8800"/></linearGradient><linearGradient id="r25" gradientUnits="userSpaceOnUse" x1="2069" x2="3663" y1="0" y2="0"><stop offset="0.000" stop-color="#00cdaa"/><stop offset="0.030" stop-color="#00cda8"/><stop offset="0.061" stop-color="#00cda6"/><stop offset="0.091" stop-color="#00cda4"/><stop offset="0.121" stop-color="#00cda1"/><stop offset="0.152" stop-color="#00cd9e"/><stop offset="0.182" stop-color="#00cd9a"/><stop offset="0.212" stop-color="#00cd96"/><stop offset="0.242" stop-color="#00cd91"/><stop offset="0.273" stop-color="#00cd8c"/><stop offset="0.303" stop-color="#00cd84"/><stop offset="0.333" stop-color="#00cd7b"/><stop offset="0.364" stop-color="#00cd6f"/><stop offset="0.394" stop-color="#00cd5c"/><stop offset="0.424" stop-color="#00cd3d"/><stop offset="0.455" stop-color="#43cd26"/><stop offset="0.485" stop-color="#62cd00"/><stop offset="0.515" stop-color="#7dcd00"/><stop offset="0.545" stop-color="#92cd00"/><stop offset="0.576" stop-color="#a4cd00"/><stop offset="0.606" stop-color="#b4cd00"/><stop offset="0.636" stop-color="#c2cd00"/><stop offset="0.667" stop-color="#cdca00"/><stop offset="0.697" stop-color="#cdbf00"/><stop offset="0.727" stop-color="#cdb500"/><stop offset="0.758" stop-color="#cdad00"/><stop offset="0.788" stop-color="#cda600"/><stop offset="0.818" stop-color="#cda000"/><stop offset="0.848" stop-color="#cd9a00"/><stop offset="0.879" stop-color="#cd9500"/><stop offset="0.909" stop-color="#cd9100"/><stop offset="0.939" stop-color="#cd8d00"/><stop offset="0.970" stop-color="#cd8900"/><stop offset="1.000" stop-color="#cd8500"/></linearGradient><linearGradient id="r26" gradientUnits="userSpaceOnUse" x1="2069" x2="3663" y1="0" y2="0"><stop offset="0.000" stop-color="#00cdab"/><stop offset="0.030" stop-color="#00cda9"/><stop offset="0.061" stop-color="#00cda7"/><stop offset="0.091" stop-color="#00cda5"/><stop offset="0.121" stop-color="#00cda2"/><stop offset="0.152" stop-color="#00cd9f"/><stop offset="0.182" stop-color="#00cd9c"/><stop offset="0.212" stop-color="#00cd98"/><stop offset="0.242" stop-color="#00cd93"/><stop offset="0.273" stop-color="#00cd8d"/><stop offset="0.303" stop-color="#00cd86"/><stop offset="0.333" stop-color="#00cd7d"/><stop offset="0.364" stop-color="#00cd71"/><stop offset="0.394" stop-color="#00cd5e"/><stop offset="0.424" stop-color="#00cd3f"/><stop offset="0.455" stop-color="#49cd31"/><stop offset="0.485" stop-color="#66cd1e"/><stop offset="0.515" stop-color="#7fcd00"/><stop offset="0.545" stop-color="#94cd00"/><stop offset="0.576" stop-color="#a7cd00"/><stop offset="0.606" stop-color="#b7cd00"/><stop offset="0.636" stop-color="#c6cd00"/><stop offset="0.667" stop-color="#cdc600"/><stop offset="0.697" stop-color="#cdbb00"/><stop offset="0.727" stop-color="#cdb200"/><stop offset="0.758" stop-color="#cdaa00"/><stop offset="0.788" stop-color="#cda300"/><stop offset="0.818" stop-color="#cd9d00"/><stop offset="0.848" stop-color="#cd9700"/><stop offset="0.879" stop-color="#cd9200"/><stop offset="0.909" stop-color="#cd8e00"/><stop offset="0.939" stop-color="#cd8a00"/><stop offset="0.970" stop-color="#cd8600"/><stop offset="1.000" stop-color="#cd8300"/></linearGradient><linearGradient id="r27" gradientUnits="userSpaceOnUse" x1="2069" x2="3663" y1="0" y2="0"><stop offset="0.000" stop-color="#00cdac"/><stop offset="0.030" stop-color="#00cdab"/><stop offset="0.061" stop-color="#00cda9"/><stop offset="0.091" stop-color="#00cda6"/><stop offset="0.121" stop-color="#00cda4"/><stop offset="0.152" stop-color="#00cda1"/><stop offset="0.182" stop-color="#00cd9e"/><stop offset="0.212" stop-color="#00cd9a"/><stop offset="0.242" stop-color="#00cd95"/><stop offset="0.273" stop-color="#00cd8f"/><stop offset="0.303" stop-color="#00cd88"/><stop offset="0.333" stop-color="#00cd7f"/><stop offset="0.364" stop-color="#00cd73"/><stop offset="0.394" stop-color="#00cd61"/><stop offset="0.424" stop-color="#18cd44"/><stop offset="0.455" stop-color="#4ecd3a"/><stop offset="0.485" stop-color="#6bcd2c"/><stop offset="0.515" stop-color="#81cd0f"/><stop offset="0.545" stop-color="#97cd00"/><stop offset="0.576" stop-color="#aacd00"/><stop offset="0.606" stop-color="#bbcd00"/><stop offset="0.636" stop-color="#cacd00"/><stop offset="0.667" stop-color="#cdc200"/><stop offset="0.697" stop-color="#cdb700"/><stop offset="0.727" stop-color="#cdae00"/><stop offset="0.758" stop-color="#cda600"/><stop offset="0.788" stop-color="#cd9f00"/><stop offset="0.818" stop-color="#cd9900"/><stop offset="0.848" stop-color="#cd9400"/><stop offset="0.879" stop-color="#cd8f00"/><stop offset="0.909" stop-color="#cd8b00"/><stop offset="0.939" stop-color="#cd8700"/><stop offset="0.970" stop-color="#cd8300"/><stop offset="1.000" stop-color="#cd8000"/></linearGradient><linearGradient id="r28" gradientUnits="userSpaceOnUse" x1="2069" x2="3663" y1="0" y2="0"><stop offset="0.000" stop-color="#00cdae"/><stop offset="0.030" stop-color="#00cdac"/><stop offset="0.061" stop-color="#00cdaa"/><stop offset="0.091" stop-color="#00cda8"/><stop offset="0.121" stop-color="#00cda5"/><stop offset="0.152" stop-color="#00cda2"/><stop offset="0.182" stop-color="#00cd9f"/><stop offset="0.212" stop-color="#00cd9b"/><stop offset="0.242" stop-color="#00cd97"/><stop offset="0.273" stop-color="#00cd91"/><stop offset="0.303" stop-color="#00cd8a"/><stop offset="0.333" stop-color="#00cd81"/><stop offset="0.364" stop-color="#00cd75"/><stop offset="0.394" stop-color="#00cd63"/><stop offset="0.424" stop-color="#26cd4c"/><stop offset="0.455" stop-color="#55cd43"/><stop offset="0.485" stop-color="#70cd37"/><stop offset="0.515" stop-color="#86cd25"/><stop offset="0.545" stop-color="#9acd00"/><stop offset="0.576" stop-color="#adcd00"/><stop offset="0.606" stop-color="#becd00"/><stop offset="0.636" stop-color="#cdcb00"/><stop offset="0.667" stop-color="#cdbe00"/><stop offset="0.697" stop-color="#cdb300"/><stop offset="0.727" stop-color="#cdaa00"/><stop offset="0.758" stop-color="#cda300"/><stop offset="0.788" stop-color="#cd9c00"/><stop offset="0.818" stop-color="#cd9600"/><stop offset="0.848" stop-color="#cd9100"/><stop offset="0.879" stop-color="#cd8c00"/><stop offset="0.909" stop-color="#cd8800"/><stop offset="0.939" stop-color="#cd8400"/><stop offset="0.970" stop-color="#cd8100"/><stop offset="1.000" stop-color="#cd7d00"/></linearGradient><linearGradient id="r29" gradientUnits="userSpaceOnUse" x1="2069" x2="3663" y1="0" y2="0"><stop offset="0.000" stop-color="#00cdaf"/><stop offset="0.030" stop-color="#00cdad"/><stop offset="0.061" stop-color="#00cdab"/><stop offset="0.091" stop-color="#00cda9"/><stop offset="0.121" stop-color="#00cda7"/><stop offset="0.152" stop-color="#00cda4"/><stop offset="0.182" stop-color="#00cda1"/><stop offset="0.212" stop-color="#00cd9d"/><stop offset="0.242" stop-color="#00cd98"/><stop offset="0.273" stop-color="#00cd93"/><stop offset="0.303" stop-color="#00cd8c"/><stop offset="0.333" stop-color="#00cd83"/><stop offset="0.364" stop-color="#00cd77"/><stop offset="0.394" stop-color="#03cd67"/><stop offset="0.424" stop-color="#34cd55"/><stop offset="0.455" stop-color="#5ccd4e"/><stop offset="0.485" stop-color="#76cd43"/><stop offset="0.515" stop-color="#8bcd34"/><stop offset="0.545" stop-color="#9ecd1a"/><stop offset="0.576" stop-color="#b1cd00"/><stop offset="0.606" stop-color="#c3cd00"/><stop offset="0.636" stop-color="#cdc700"/><stop offset="0.667" stop-color="#cdba00"/><stop offset="0.697" stop-color="#cdaf00"/><stop offset="0.727" stop-color="#cda700"/><stop offset="0.758" stop-color="#cd9f00"/><stop offset="0.788" stop-color="#cd9900"/><stop offset="0.818" stop-color="#cd9300"/><stop offset="0.848" stop-color="#cd8e00"/><stop offset="0.879" stop-color="#cd8900"/><stop offset="0.909" stop-color="#cd8500"/><stop offset="0.939" stop-color="#cd8100"/><stop offset="0.970" stop-color="#cd7e00"/><stop offset="1.000" stop-color="#cd7a00"/></linearGradient><linearGradient id="r30" gradientUnits="userSpaceOnUse" x1="2069" x2="3663" y1="0" y2="0"><stop offset="0.000" stop-color="#00cdb0"/><stop offset="0.030" stop-color="#00cdae"/><stop offset="0.061" stop-color="#00cdad"/><stop offset="0.091" stop-color="#00cdab"/><stop offset="0.121" stop-color="#00cda8"/><stop offset="0.152" stop-color="#00cda6"/><stop offset="0.182" stop-color="#00cda2"/><stop offset="0.212" stop-color="#00cd9f"/><stop offset="0.242" stop-color="#00cd9a"/><stop offset="0.273" stop-color="#00cd95"/><stop offset="0.303" stop-color="#00cd8e"/><stop offset="0.333" stop-color="#00cd85"/><stop offset="0.364" stop-color="#02cd7b"/><stop offset="0.394" stop-color="#07cd6c"/><stop offset="0.424" stop-color="#40cd5e"/><stop offset="0.455" stop-color="#65cd58"/><stop offset="0.485" stop-color="#7dcd4f"/><stop offset="0.515" stop-color="#91cd41"/><stop offset="0.545" stop-color="#a3cd2e"/><stop offset="0.576" stop-color="#b5cd00"/><stop offset="0.606" stop-color="#c7cd00"/><stop offset="0.636" stop-color="#cdc200"/><stop offset="0.667" stop-color="#cdb600"/><stop offset="0.697" stop-color="#cdab00"/><stop offset="0.727" stop-color="#cda300"/><stop offset="0.758" stop-color="#cd9b00"/><stop offset="0.788" stop-color="#cd9500"/><stop offset="0.818" stop-color="#cd8f00"/><stop offset="0.848" stop-color="#cd8a00"/><stop offset="0.879" stop-color="#cd8600"/><stop offset="0.909" stop-color="#cd8200"/><stop offset="0.939" stop-color="#cd7e00"/><stop offset="0.970" stop-color="#cd7b00"/><stop offset="1.000" stop-color="#cd7700"/></linearGradient><linearGradient id="r31" gradientUnits="userSpaceOnUse" x1="2069" x2="3663" y1="0" y2="0"><stop offset="0.000" stop-color="#00cdb1"/><stop offset="0.030" stop-color="#00cdb0"/><stop offset="0.061" stop-color="#00cdae"/><stop offset="0.091" stop-color="#00cdac"/><stop offset="0.121" stop-color="#00cdaa"/><stop offset="0.152" stop-color="#00cda7"/><stop offset="0.182" stop-color="#00cda4"/><stop offset="0.212" stop-color="#00cda1"/><stop offset="0.242" stop-color="#00cd9c"/><stop offset="0.273" stop-color="#00cd97"/><stop offset="0.303" stop-color="#00cd90"/><stop offset="0.333" stop-color="#01cd88"/><stop offset="0.364" stop-color="#07cd7f"/><stop offset="0.394" stop-color="#0dcd71"/><stop offset="0.424" stop-color="#4bcd67"/><stop offset="0.455" stop-color="#6dcc62"/><stop offset="0.485" stop-color="#84cd5a"/><stop offset="0.515" stop-color="#97cd4e"/><stop offset="0.545" stop-color="#a9cd3d"/><stop offset="0.576" stop-color="#bacd24"/><stop offset="0.606" stop-color="#cccd00"/><stop offset="0.636" stop-color="#cdbe00"/><stop offset="0.667" stop-color="#cdb100"/><stop offset="0.697" stop-color="#cda700"/><stop offset="0.727" stop-color="#cd9f00"/><stop offset="0.758" stop-color="#cd9700"/><stop offset="0.788" stop-color="#cd9100"/><stop offset="0.818" stop-color="#cd8c00"/><stop offset="0.848" stop-color="#cd8700"/><stop offset="0.879" stop-color="#cd8200"/><stop offset="0.909" stop-color="#cd7e00"/><stop offset="0.939" stop-color="#cd7b00"/><stop offset="0.970" stop-color="#cd7700"/><stop offset="1.000" stop-color="#cd7400"/></linearGradient><linearGradient id="r32" gradientUnits="userSpaceOnUse" x1="2069" x2="3663" y1="0" y2="0"><stop offset="0.000" stop-color="#00cdb3"/><stop offset="0.030" stop-color="#00cdb1"/><stop offset="0.061" stop-color="#00cdaf"/><stop offset="0.091" stop-color="#00cdae"/><stop offset="0.121" stop-color="#00cdab"/><stop offset="0.152" stop-color="#00cda9"/><stop offset="0.182" stop-color="#00cda6"/><stop offset="0.212" stop-color="#00cda2"/><stop offset="0.242" stop-color="#00cd9e"/><stop offset="0.273" stop-color="#00cd99"/><stop offset="0.303" stop-color="#00cd93"/><stop offset="0.333" stop-color="#04cd8c"/><stop offset="0.364" stop-color="#0ccd83"/><stop offset="0.394" stop-color="#14cd76"/><stop offset="0.424" stop-color="#56cd70"/><stop offset="0.455" stop-color="#75cc6b"/><stop offset="0.485" stop-color="#8bcd64"/><stop offset="0.515" stop-color="#9dcd5a"/><stop offset="0.545" stop-color="#aecd4b"/><stop offset="0.576" stop-color="#bfcd36"/><stop offset="0.606" stop-color="#cdc813"/><stop offset="0.636" stop-color="#cdb900"/><stop offset="0.667" stop-color="#cdad00"/><stop offset="0.697" stop-color="#cda300"/><stop offset="0.727" stop-color="#cd9b00"/><stop offset="0.758" stop-color="#cd9300"/><stop offset="0.788" stop-color="#cd8d00"/><stop offset="0.818" stop-color="#cd8800"/><stop offset="0.848" stop-color="#cd8300"/><stop offset="0.879" stop-color="#cd7f00"/><stop offset="0.909" stop-color="#cd7b00"/><stop offset="0.939" stop-color="#cd7700"/><stop offset="0.970" stop-color="#cd7400"/><stop offset="1.000" stop-color="#cd7100"/></linearGradient><linearGradient id="r33" gradientUnits="userSpaceOnUse" x1="2069" x2="3663" y1="0" y2="0"><stop offset="0.000" stop-color="#00cdb4"/><stop offset="0.030" stop-color="#00cdb3"/><stop offset="0.061" stop-color="#00cdb1"/><stop offset="0.091" stop-color="#00cdaf"/><stop offset="0.121" stop-color="#00cdad"/><stop offset="0.152" stop-color="#00cdab"/><stop offset="0.182" stop-color="#00cda8"/><stop offset="0.212" stop-color="#00cda4"/><stop offset="0.242" stop-color="#00cda0"/><stop offset="0.273" stop-color="#00cd9b"/><stop offset="0.303" stop-color="#00cd95"/><stop offset="0.333" stop-color="#09cd90"/><stop offset="0.364" stop-color="#12cd88"/><stop offset="0.394" stop-color="#1acc7c"/><stop offset="0.424" stop-color="#60cd79"/><stop offset="0.455" stop-color="#7dcd75"/><stop offset="0.485" stop-color="#92cd6e"/><stop offset="0.515" stop-color="#a3cd65"/><stop offset="0.545" stop-color="#b3cd57"/><stop offset="0.576" stop-color="#c4cd45"/><stop offset="0.606" stop-color="#cdc32a"/><stop offset="0.636" stop-color="#cdb400"/><stop offset="0.667" stop-color="#cda800"/><stop offset="0.697" stop-color="#cd9e00"/><stop offset="0.727" stop-color="#cd9600"/><stop offset="0.758" stop-color="#cd8f00"/><stop offset="0.788" stop-color="#cd8900"/><stop offset="0.818" stop-color="#cd8400"/><stop offset="0.848" stop-color="#cd7f00"/><stop offset="0.879" stop-color="#cd7b00"/><stop offset="0.909" stop-color="#cd7800"/><stop offset="0.939" stop-color="#cd7400"/><stop offset="0.970" stop-color="#cd7100"/><stop offset="1.000" stop-color="#cd6e00"/></linearGradient><linearGradient id="r34" gradientUnits="userSpaceOnUse" x1="2069" x2="3663" y1="0" y2="0"><stop offset="0.000" stop-color="#00cdb5"/><stop offset="0.030" stop-color="#00cdb4"/><stop offset="0.061" stop-color="#00cdb2"/><stop offset="0.091" stop-color="#00cdb1"/><stop offset="0.121" stop-color="#00cdaf"/><stop offset="0.152" stop-color="#00cdac"/><stop offset="0.182" stop-color="#00cdaa"/><stop offset="0.212" stop-color="#00cda6"/><stop offset="0.242" stop-color="#00cda2"/><stop offset="0.273" stop-color="#00cd9e"/><stop offset="0.303" stop-color="#03cd98"/><stop offset="0.333" stop-color="#0ecd94"/><stop offset="0.364" stop-color="#18cd8d"/><stop offset="0.394" stop-color="#2ecd82"/><stop offset="0.424" stop-color="#6acd81"/><stop offset="0.455" stop-color="#85cd7e"/><stop offset="0.485" stop-color="#98cd78"/><stop offset="0.515" stop-color="#a9cd6f"/><stop offset="0.545" stop-color="#b9cd62"/><stop offset="0.576" stop-color="#cacd52"/><stop offset="0.606" stop-color="#cdbe39"/><stop offset="0.636" stop-color="#cdaf1b"/><stop offset="0.667" stop-color="#cda300"/><stop offset="0.697" stop-color="#cd9a00"/><stop offset="0.727" stop-color="#cd9200"/><stop offset="0.758" stop-color="#cd8b00"/><stop offset="0.788" stop-color="#cd8500"/><stop offset="0.818" stop-color="#cd8000"/><stop offset="0.848" stop-color="#cd7c00"/><stop offset="0.879" stop-color="#cd7800"/><stop offset="0.909" stop-color="#cd7400"/><stop offset="0.939" stop-color="#cd7100"/><stop offset="0.970" stop-color="#cd6d00"/><stop offset="1.000" stop-color="#cd6b00"/></linearGradient><linearGradient id="r35" gradientUnits="userSpaceOnUse" x1="2069" x2="3663" y1="0" y2="0"><stop offset="0.000" stop-color="#00cdb7"/><stop offset="0.030" stop-color="#00cdb5"/><stop offset="0.061" stop-color="#00cdb4"/><stop offset="0.091" stop-color="#00cdb2"/><stop offset="0.121" stop-color="#00cdb0"/><stop offset="0.152" stop-color="#00cdae"/><stop offset="0.182" stop-color="#00cdac"/><stop offset="0.212" stop-color="#00cda8"/><stop offset="0.242" stop-color="#00cda5"/><stop offset="0.273" stop-color="#00cda0"/><stop offset="0.303" stop-color="#07cd9c"/><stop offset="0.333" stop-color="#13cd98"/><stop offset="0.364" stop-color="#1fcd92"/><stop offset="0.394" stop-color="#45cd8a"/><stop offset="0.424" stop-color="#74cd89"/><stop offset="0.455" stop-color="#8ccd87"/><stop offset="0.485" stop-color="#9fcd81"/><stop offset="0.515" stop-color="#aecd79"/><stop offset="0.545" stop-color="#becd6d"/><stop offset="0.576" stop-color="#cdca5d"/><stop offset="0.606" stop-color="#cdb944"/><stop offset="0.636" stop-color="#cdaa2a"/><stop offset="0.667" stop-color="#cd9e00"/><stop offset="0.697" stop-color="#cd9500"/><stop offset="0.727" stop-color="#cd8d00"/><stop offset="0.758" stop-color="#cd8700"/><stop offset="0.788" stop-color="#cd8100"/><stop offset="0.818" stop-color="#cd7c00"/><stop offset="0.848" stop-color="#cd7800"/><stop offset="0.879" stop-color="#cd7400"/><stop offset="0.909" stop-color="#cd7000"/><stop offset="0.939" stop-color="#cd6d00"/><stop offset="0.970" stop-color="#cd6a00"/><stop offset="1.000" stop-color="#cd6700"/></linearGradient><linearGradient id="r36" gradientUnits="userSpaceOnUse" x1="2069" x2="3663" y1="0" y2="0"><stop offset="0.000" stop-color="#00cdb8"/><stop offset="0.030" stop-color="#00cdb7"/><stop offset="0.061" stop-color="#00cdb6"/><stop offset="0.091" stop-color="#00cdb4"/><stop offset="0.121" stop-color="#00cdb2"/><stop offset="0.152" stop-color="#00cdb0"/><stop offset="0.182" stop-color="#00cdae"/><stop offset="0.212" stop-color="#00cdab"/><stop offset="0.242" stop-color="#00cda7"/><stop offset="0.273" stop-color="#00cda3"/><stop offset="0.303" stop-color="#0bcd9f"/><stop offset="0.333" stop-color="#18cd9c"/><stop offset="0.364" stop-color="#25cd97"/><stop offset="0.394" stop-color="#55cd91"/><stop offset="0.424" stop-color="#7dcd92"/><stop offset="0.455" stop-color="#94cd8f"/><stop offset="0.485" stop-color="#a5cd8a"/><stop offset="0.515" stop-color="#b4cd82"/><stop offset="0.545" stop-color="#c3cd77"/><stop offset="0.576" stop-color="#cdc566"/><stop offset="0.606" stop-color="#cdb54e"/><stop offset="0.636" stop-color="#cda636"/><stop offset="0.667" stop-color="#cd991f"/><stop offset="0.697" stop-color="#cd8f00"/><stop offset="0.727" stop-color="#cd8800"/><stop offset="0.758" stop-color="#cd8200"/><stop offset="0.788" stop-color="#cd7c00"/><stop offset="0.818" stop-color="#cd7800"/><stop offset="0.848" stop-color="#cd7300"/><stop offset="0.879" stop-color="#cd7000"/><stop offset="0.909" stop-color="#cd6c00"/><stop offset="0.939" stop-color="#cd6900"/><stop offset="0.970" stop-color="#cd6600"/><stop offset="1.000" stop-color="#cd6300"/></linearGradient><linearGradient id="r37" gradientUnits="userSpaceOnUse" x1="2069" x2="3663" y1="0" y2="0"><stop offset="0.000" stop-color="#00cdba"/><stop offset="0.030" stop-color="#00cdb9"/><stop offset="0.061" stop-color="#00cdb7"/><stop offset="0.091" stop-color="#00cdb6"/><stop offset="0.121" stop-color="#00cdb4"/><stop offset="0.152" stop-color="#00cdb2"/><stop offset="0.182" stop-color="#00cdb0"/><stop offset="0.212" stop-color="#00cdad"/><stop offset="0.242" stop-color="#00cda9"/><stop offset="0.273" stop-color="#03cda6"/><stop offset="0.303" stop-color="#0fcca3"/><stop offset="0.333" stop-color="#1ecda0"/><stop offset="0.364" stop-color="#2ccc9b"/><stop offset="0.394" stop-color="#68cd9b"/><stop offset="0.424" stop-color="#8acd9c"/><stop offset="0.455" stop-color="#9ccd98"/><stop offset="0.485" stop-color="#abcd93"/><stop offset="0.515" stop-color="#b9cd8b"/><stop offset="0.545" stop-color="#c8cd81"/><stop offset="0.576" stop-color="#cdc16d"/><stop offset="0.606" stop-color="#cdb157"/><stop offset="0.636" stop-color="#cda23f"/><stop offset="0.667" stop-color="#cd952b"/><stop offset="0.697" stop-color="#cd8a12"/><stop offset="0.727" stop-color="#cd8300"/><stop offset="0.758" stop-color="#cd7d00"/><stop offset="0.788" stop-color="#cd7800"/><stop offset="0.818" stop-color="#cd7300"/><stop offset="0.848" stop-color="#cd6f00"/><stop offset="0.879" stop-color="#cd6b00"/><stop offset="0.909" stop-color="#cd6800"/><stop offset="0.939" stop-color="#cd6500"/><stop offset="0.970" stop-color="#cd6200"/><stop offset="1.000" stop-color="#cd6000"/></linearGradient><linearGradient id="r38" gradientUnits="userSpaceOnUse" x1="2069" x2="3663" y1="0" y2="0"><stop offset="0.000" stop-color="#00cdbb"/><stop offset="0.030" stop-color="#00cdba"/><stop offset="0.061" stop-color="#00cdb9"/><stop offset="0.091" stop-color="#00cdb7"/><stop offset="0.121" stop-color="#00cdb6"/><stop offset="0.152" stop-color="#00cdb4"/><stop offset="0.182" stop-color="#00cdb2"/><stop offset="0.212" stop-color="#00cdaf"/><stop offset="0.242" stop-color="#00cdac"/><stop offset="0.273" stop-color="#05cda9"/><stop offset="0.303" stop-color="#13cda7"/><stop offset="0.333" stop-color="#23cda4"/><stop offset="0.364" stop-color="#3dcda3"/><stop offset="0.394" stop-color="#79cda5"/><stop offset="0.424" stop-color="#95cda5"/><stop offset="0.455" stop-color="#a4cda1"/><stop offset="0.485" stop-color="#b0cd9b"/><stop offset="0.515" stop-color="#becd94"/><stop offset="0.545" stop-color="#cdcc89"/><stop offset="0.576" stop-color="#cdbd75"/><stop offset="0.606" stop-color="#cdad5f"/><stop offset="0.636" stop-color="#cd9e48"/><stop offset="0.667" stop-color="#cd9134"/><stop offset="0.697" stop-color="#cd8622"/><stop offset="0.727" stop-color="#cd7d00"/><stop offset="0.758" stop-color="#cd7800"/><stop offset="0.788" stop-color="#cd7300"/><stop offset="0.818" stop-color="#cd6e00"/><stop offset="0.848" stop-color="#cd6a00"/><stop offset="0.879" stop-color="#cd6700"/><stop offset="0.909" stop-color="#cd6400"/><stop offset="0.939" stop-color="#cd6100"/><stop offset="0.970" stop-color="#cd5e00"/><stop offset="1.000" stop-color="#cd5c00"/></linearGradient><linearGradient id="r39" gradientUnits="userSpaceOnUse" x1="2069" x2="3663" y1="0" y2="0"><stop offset="0.000" stop-color="#00cdbd"/><stop offset="0.030" stop-color="#00cdbc"/><stop offset="0.061" stop-color="#00cdbb"/><stop offset="0.091" stop-color="#00cdb9"/><stop offset="0.121" stop-color="#00cdb8"/><stop offset="0.152" stop-color="#00cdb6"/><stop offset="0.182" stop-color="#00cdb4"/><stop offset="0.212" stop-color="#00cdb2"/><stop offset="0.242" stop-color="#00cdaf"/><stop offset="0.273" stop-color="#08cdac"/><stop offset="0.303" stop-color="#17cdaa"/><stop offset="0.333" stop-color="#28cca8"/><stop offset="0.364" stop-color="#50cdab"/><stop offset="0.394" stop-color="#88cdad"/><stop offset="0.424" stop-color="#9ecdad"/><stop offset="0.455" stop-color="#abcda9"/><stop offset="0.485" stop-color="#b6cda2"/><stop offset="0.515" stop-color="#c3cd9b"/><stop offset="0.545" stop-color="#cdc88f"/><stop offset="0.576" stop-color="#cdb97b"/><stop offset="0.606" stop-color="#cda965"/><stop offset="0.636" stop-color="#cc9a4f"/><stop offset="0.667" stop-color="#cd8c3b"/><stop offset="0.697" stop-color="#cd822c"/><stop offset="0.727" stop-color="#cd7918"/><stop offset="0.758" stop-color="#cd7200"/><stop offset="0.788" stop-color="#cd6d00"/><stop offset="0.818" stop-color="#cd6900"/><stop offset="0.848" stop-color="#cd6500"/><stop offset="0.879" stop-color="#cd6200"/><stop offset="0.909" stop-color="#cd5f00"/><stop offset="0.939" stop-color="#cd5c00"/><stop offset="0.970" stop-color="#cd5a00"/><stop offset="1.000" stop-color="#cd5700"/></linearGradient><linearGradient id="r40" gradientUnits="userSpaceOnUse" x1="2069" x2="3663" y1="0" y2="0"><stop offset="0.000" stop-color="#00cdbe"/><stop offset="0.030" stop-color="#00cdbd"/><stop offset="0.061" stop-color="#00cdbc"/><stop offset="0.091" stop-color="#00cdbb"/><stop offset="0.121" stop-color="#00cdba"/><stop offset="0.152" stop-color="#00cdb8"/><stop offset="0.182" stop-color="#00cdb6"/><stop offset="0.212" stop-color="#00cdb4"/><stop offset="0.242" stop-color="#00cdb1"/><stop offset="0.273" stop-color="#0bcdaf"/><stop offset="0.303" stop-color="#1bcdae"/><stop offset="0.333" stop-color="#2fccac"/><stop offset="0.364" stop-color="#62cdb2"/><stop offset="0.394" stop-color="#93cdb3"/><stop offset="0.424" stop-color="#a5cdb2"/><stop offset="0.455" stop-color="#b0cdae"/><stop offset="0.485" stop-color="#bbcda9"/><stop offset="0.515" stop-color="#c7cda3"/><stop offset="0.545" stop-color="#cdc495"/><stop offset="0.576" stop-color="#cdb581"/><stop offset="0.606" stop-color="#cda66c"/><stop offset="0.636" stop-color="#cd9656"/><stop offset="0.667" stop-color="#cd8841"/><stop offset="0.697" stop-color="#cd7e34"/><stop offset="0.727" stop-color="#cd7524"/><stop offset="0.758" stop-color="#cd6c04"/><stop offset="0.788" stop-color="#cd6800"/><stop offset="0.818" stop-color="#cd6400"/><stop offset="0.848" stop-color="#cd6000"/><stop offset="0.879" stop-color="#cd5d00"/><stop offset="0.909" stop-color="#cd5a00"/><stop offset="0.939" stop-color="#cd5700"/><stop offset="0.970" stop-color="#cd5500"/><stop offset="1.000" stop-color="#cd5300"/></linearGradient><linearGradient id="r41" gradientUnits="userSpaceOnUse" x1="2069" x2="3663" y1="0" y2="0"><stop offset="0.000" stop-color="#00cdc0"/><stop offset="0.030" stop-color="#00cdbf"/><stop offset="0.061" stop-color="#00cdbe"/><stop offset="0.091" stop-color="#00cdbd"/><stop offset="0.121" stop-color="#00cdbc"/><stop offset="0.152" stop-color="#00cdba"/><stop offset="0.182" stop-color="#00cdb9"/><stop offset="0.212" stop-color="#00cdb7"/><stop offset="0.242" stop-color="#00cdb4"/><stop offset="0.273" stop-color="#0dcdb3"/><stop offset="0.303" stop-color="#1fcdb1"/><stop offset="0.333" stop-color="#3ccdb2"/><stop offset="0.364" stop-color="#73cdb8"/><stop offset="0.394" stop-color="#9ccdb8"/><stop offset="0.424" stop-color="#aacdb7"/><stop offset="0.455" stop-color="#b4cdb3"/><stop offset="0.485" stop-color="#bfcdb0"/><stop offset="0.515" stop-color="#cbcdaa"/><stop offset="0.545" stop-color="#cdc099"/><stop offset="0.576" stop-color="#cdb286"/><stop offset="0.606" stop-color="#cda271"/><stop offset="0.636" stop-color="#cd935c"/><stop offset="0.667" stop-color="#cd8448"/><stop offset="0.697" stop-color="#cd793a"/><stop offset="0.727" stop-color="#cd702d"/><stop offset="0.758" stop-color="#cd681c"/><stop offset="0.788" stop-color="#cd6200"/><stop offset="0.818" stop-color="#cd5e00"/><stop offset="0.848" stop-color="#cd5a00"/><stop offset="0.879" stop-color="#cd5700"/><stop offset="0.909" stop-color="#cd5500"/><stop offset="0.939" stop-color="#cd5200"/><stop offset="0.970" stop-color="#cd5000"/><stop offset="1.000" stop-color="#cd4e00"/></linearGradient><linearGradient id="r42" gradientUnits="userSpaceOnUse" x1="2069" x2="3663" y1="0" y2="0"><stop offset="0.000" stop-color="#00cdc2"/><stop offset="0.030" stop-color="#00cdc1"/><stop offset="0.061" stop-color="#00cdc0"/><stop offset="0.091" stop-color="#00cdbf"/><stop offset="0.121" stop-color="#00cdbe"/><stop offset="0.152" stop-color="#00cdbd"/><stop offset="0.182" stop-color="#00cdbb"/><stop offset="0.212" stop-color="#00cdb9"/><stop offset="0.242" stop-color="#01cdb7"/><stop offset="0.273" stop-color="#10cdb6"/><stop offset="0.303" stop-color="#22cdb5"/><stop offset="0.333" stop-color="#48cdb7"/><stop offset="0.364" stop-color="#83cdbb"/><stop offset="0.394" stop-color="#a2cdbc"/><stop offset="0.424" stop-color="#adcdba"/><stop offset="0.455" stop-color="#b9cdb8"/><stop offset="0.485" stop-color="#c4cdb6"/><stop offset="0.515" stop-color="#cdcaae"/><stop offset="0.545" stop-color="#cdbd9e"/><stop offset="0.576" stop-color="#cdaf8b"/><stop offset="0.606" stop-color="#cd9f76"/><stop offset="0.636" stop-color="#cd8f61"/><stop offset="0.667" stop-color="#cd7f4d"/><stop offset="0.697" stop-color="#cd7540"/><stop offset="0.727" stop-color="#cd6c34"/><stop offset="0.758" stop-color="#cd6426"/><stop offset="0.788" stop-color="#cd5c11"/><stop offset="0.818" stop-color="#cd5700"/><stop offset="0.848" stop-color="#cd5400"/><stop offset="0.879" stop-color="#cd5100"/><stop offset="0.909" stop-color="#cd4f00"/><stop offset="0.939" stop-color="#cd4c00"/><stop offset="0.970" stop-color="#cd4a00"/><stop offset="1.000" stop-color="#cd4800"/></linearGradient><linearGradient id="r43" gradientUnits="userSpaceOnUse" x1="2069" x2="3663" y1="0" y2="0"><stop offset="0.000" stop-color="#00cdc3"/><stop offset="0.030" stop-color="#00cdc3"/><stop offset="0.061" stop-color="#00cdc2"/><stop offset="0.091" stop-color="#00cdc1"/><stop offset="0.121" stop-color="#00cdc0"/><stop offset="0.152" stop-color="#00cdbf"/><stop offset="0.182" stop-color="#00cdbe"/><stop offset="0.212" stop-color="#00cdbc"/><stop offset="0.242" stop-color="#02cdba"/><stop offset="0.273" stop-color="#12cdb9"/><stop offset="0.303" stop-color="#25cdb9"/><stop offset="0.333" stop-color="#53cdbb"/><stop offset="0.364" stop-color="#8ecdbf"/><stop offset="0.394" stop-color="#a7cdbf"/><stop offset="0.424" stop-color="#b1cdbd"/><stop offset="0.455" stop-color="#becdbd"/><stop offset="0.485" stop-color="#c7cdbb"/><stop offset="0.515" stop-color="#cdc7b2"/><stop offset="0.545" stop-color="#cdbaa1"/><stop offset="0.576" stop-color="#cdac8f"/><stop offset="0.606" stop-color="#cd9c7b"/><stop offset="0.636" stop-color="#cd8b66"/><stop offset="0.667" stop-color="#cd7b52"/><stop offset="0.697" stop-color="#cd7045"/><stop offset="0.727" stop-color="#cd6739"/><stop offset="0.758" stop-color="#cd5f2d"/><stop offset="0.788" stop-color="#cd571f"/><stop offset="0.818" stop-color="#cd5000"/><stop offset="0.848" stop-color="#cd4d00"/><stop offset="0.879" stop-color="#cd4b00"/><stop offset="0.909" stop-color="#cd4800"/><stop offset="0.939" stop-color="#cd4600"/><stop offset="0.970" stop-color="#cd4400"/><stop offset="1.000" stop-color="#cd4300"/></linearGradient><linearGradient id="r44" gradientUnits="userSpaceOnUse" x1="2069" x2="3663" y1="0" y2="0"><stop offset="0.000" stop-color="#00cdc5"/><stop offset="0.030" stop-color="#00cdc4"/><stop offset="0.061" stop-color="#00cdc4"/><stop offset="0.091" stop-color="#00cdc3"/><stop offset="0.121" stop-color="#00cdc2"/><stop offset="0.152" stop-color="#00cdc2"/><stop offset="0.182" stop-color="#00cdc0"/><stop offset="0.212" stop-color="#00cdbf"/><stop offset="0.242" stop-color="#03cdbe"/><stop offset="0.273" stop-color="#13cdbd"/><stop offset="0.303" stop-color="#27cdbc"/><stop offset="0.333" stop-color="#5ccdbf"/><stop offset="0.364" stop-color="#96cdc2"/><stop offset="0.394" stop-color="#a9cdc1"/><stop offset="0.424" stop-color="#b6cdc1"/><stop offset="0.455" stop-color="#c2cdc2"/><stop offset="0.485" stop-color="#cacdc0"/><stop offset="0.515" stop-color="#cdc4b5"/><stop offset="0.545" stop-color="#cdb8a5"/><stop offset="0.576" stop-color="#cda992"/><stop offset="0.606" stop-color="#cd987e"/><stop offset="0.636" stop-color="#cd886a"/><stop offset="0.667" stop-color="#cd7757"/><stop offset="0.697" stop-color="#cd6b49"/><stop offset="0.727" stop-color="#cd633f"/><stop offset="0.758" stop-color="#cd5a34"/><stop offset="0.788" stop-color="#cd5227"/><stop offset="0.818" stop-color="#cd4b16"/><stop offset="0.848" stop-color="#cd4600"/><stop offset="0.879" stop-color="#cd4300"/><stop offset="0.909" stop-color="#cd4100"/><stop offset="0.939" stop-color="#cd3f00"/><stop offset="0.970" stop-color="#cd3e00"/><stop offset="1.000" stop-color="#cd3c00"/></linearGradient><linearGradient id="r45" gradientUnits="userSpaceOnUse" x1="2069" x2="3663" y1="0" y2="0"><stop offset="0.000" stop-color="#00cdc7"/><stop offset="0.030" stop-color="#00cdc6"/><stop offset="0.061" stop-color="#00cdc6"/><stop offset="0.091" stop-color="#00cdc5"/><stop offset="0.121" stop-color="#00cdc5"/><stop offset="0.152" stop-color="#00cdc4"/><stop offset="0.182" stop-color="#00cdc3"/><stop offset="0.212" stop-color="#00cdc2"/><stop offset="0.242" stop-color="#04cdc1"/><stop offset="0.273" stop-color="#15cdc1"/><stop offset="0.303" stop-color="#29ccc0"/><stop offset="0.333" stop-color="#64cdc3"/><stop offset="0.364" stop-color="#9bcdc4"/><stop offset="0.394" stop-color="#abcdc4"/><stop offset="0.424" stop-color="#bbcdc5"/><stop offset="0.455" stop-color="#c6cdc6"/><stop offset="0.485" stop-color="#cdccc3"/><stop offset="0.515" stop-color="#cdc2b7"/><stop offset="0.545" stop-color="#cdb5a7"/><stop offset="0.576" stop-color="#cda695"/><stop offset="0.606" stop-color="#cd9582"/><stop offset="0.636" stop-color="#cd846e"/><stop offset="0.667" stop-color="#cd735b"/><stop offset="0.697" stop-color="#cd674d"/><stop offset="0.727" stop-color="#cd5e43"/><stop offset="0.758" stop-color="#cd5539"/><stop offset="0.788" stop-color="#cd4d2e"/><stop offset="0.818" stop-color="#cd4521"/><stop offset="0.848" stop-color="#cd3d08"/><stop offset="0.879" stop-color="#cd3b00"/><stop offset="0.909" stop-color="#cd3900"/><stop offset="0.939" stop-color="#cd3700"/><stop offset="0.970" stop-color="#cd3600"/><stop offset="1.000" stop-color="#cd3400"/></linearGradient><linearGradient id="r46" gradientUnits="userSpaceOnUse" x1="2069" x2="3663" y1="0" y2="0"><stop offset="0.000" stop-color="#00cdc9"/><stop offset="0.030" stop-color="#00cdc8"/><stop offset="0.061" stop-color="#00cdc8"/><stop offset="0.091" stop-color="#00cdc8"/><stop offset="0.121" stop-color="#00cdc7"/><stop offset="0.152" stop-color="#00cdc7"/><stop offset="0.182" stop-color="#00cdc6"/><stop offset="0.212" stop-color="#00cdc5"/><stop offset="0.242" stop-color="#05cdc5"/><stop offset="0.273" stop-color="#16cdc4"/><stop offset="0.303" stop-color="#2bcdc4"/><stop offset="0.333" stop-color="#69cdc6"/><stop offset="0.364" stop-color="#9ecdc7"/><stop offset="0.394" stop-color="#accdc6"/><stop offset="0.424" stop-color="#bfcdc8"/><stop offset="0.455" stop-color="#c9cdc9"/><stop offset="0.485" stop-color="#cdcac5"/><stop offset="0.515" stop-color="#cdc0b9"/><stop offset="0.545" stop-color="#cdb2a9"/><stop offset="0.576" stop-color="#cda398"/><stop offset="0.606" stop-color="#cd9185"/><stop offset="0.636" stop-color="#cd8071"/><stop offset="0.667" stop-color="#cd6e5e"/><stop offset="0.697" stop-color="#cd6251"/><stop offset="0.727" stop-color="#cd5947"/><stop offset="0.758" stop-color="#cd503d"/><stop offset="0.788" stop-color="#cd4833"/><stop offset="0.818" stop-color="#cd4028"/><stop offset="0.848" stop-color="#cd371a"/><stop offset="0.879" stop-color="#cd3100"/><stop offset="0.909" stop-color="#cd2f00"/><stop offset="0.939" stop-color="#cd2e00"/><stop offset="0.970" stop-color="#cd2c00"/><stop offset="1.000" stop-color="#cd2b00"/></linearGradient><linearGradient id="r47" gradientUnits="userSpaceOnUse" x1="2069" x2="3663" y1="0" y2="0"><stop offset="0.000" stop-color="#00cdca"/><stop offset="0.030" stop-color="#00cdca"/><stop offset="0.061" stop-color="#00cdca"/><stop offset="0.091" stop-color="#00cdca"/><stop offset="0.121" stop-color="#00cdca"/><stop offset="0.152" stop-color="#00cdc9"/><stop offset="0.182" stop-color="#00cdc9"/><stop offset="0.212" stop-color="#00cdc9"/><stop offset="0.242" stop-color="#05cdc8"/><stop offset="0.273" stop-color="#17cdc8"/><stop offset="0.303" stop-color="#2ccdc8"/><stop offset="0.333" stop-color="#6dcdc9"/><stop offset="0.364" stop-color="#a0cdca"/><stop offset="0.394" stop-color="#aecdc9"/><stop offset="0.424" stop-color="#c2cdca"/><stop offset="0.455" stop-color="#cbcdcb"/><stop offset="0.485" stop-color="#cdc8c6"/><stop offset="0.515" stop-color="#cdbeba"/><stop offset="0.545" stop-color="#cdb0ab"/><stop offset="0.576" stop-color="#cd9f9a"/><stop offset="0.606" stop-color="#cd8d87"/><stop offset="0.636" stop-color="#cd7b74"/><stop offset="0.667" stop-color="#cd6962"/><stop offset="0.697" stop-color="#cd5c54"/><stop offset="0.727" stop-color="#cd534b"/><stop offset="0.758" stop-color="#cd4b42"/><stop offset="0.788" stop-color="#cd4238"/><stop offset="0.818" stop-color="#cd392e"/><stop offset="0.848" stop-color="#cd3022"/><stop offset="0.879" stop-color="#cd2610"/><stop offset="0.909" stop-color="#cd2200"/><stop offset="0.939" stop-color="#cd2000"/><stop offset="0.970" stop-color="#cd1f00"/><stop offset="1.000" stop-color="#cd1f00"/></linearGradient><linearGradient id="r48" gradientUnits="userSpaceOnUse" x1="2069" x2="3663" y1="0" y2="0"><stop offset="0.000" stop-color="#00cdcc"/><stop offset="0.030" stop-color="#00cdcc"/><stop offset="0.061" stop-color="#00cdcc"/><stop offset="0.091" stop-color="#00cdcc"/><stop offset="0.121" stop-color="#00cdcc"/><stop offset="0.152" stop-color="#00cdcc"/><stop offset="0.182" stop-color="#00cdcc"/><stop offset="0.212" stop-color="#00cdcc"/><stop offset="0.242" stop-color="#05cdcc"/><stop offset="0.273" stop-color="#17cdcc"/><stop offset="0.303" stop-color="#2ccdcc"/><stop offset="0.333" stop-color="#6ecdcc"/><stop offset="0.364" stop-color="#a2cdcc"/><stop offset="0.394" stop-color="#b2cdcc"/><stop offset="0.424" stop-color="#c4cdcc"/><stop offset="0.455" stop-color="#cccdcc"/><stop offset="0.485" stop-color="#cdc7c7"/><stop offset="0.515" stop-color="#cdbbbb"/><stop offset="0.545" stop-color="#cdacad"/><stop offset="0.576" stop-color="#cd9c9c"/><stop offset="0.606" stop-color="#cd8989"/><stop offset="0.636" stop-color="#cd7677"/><stop offset="0.667" stop-color="#cd6465"/><stop offset="0.697" stop-color="#cd5757"/><stop offset="0.727" stop-color="#cd4e4e"/><stop offset="0.758" stop-color="#cd4545"/><stop offset="0.788" stop-color="#cd3c3d"/><stop offset="0.818" stop-color="#cd3233"/><stop offset="0.848" stop-color="#cd2829"/><stop offset="0.879" stop-color="#cd1a1c"/><stop offset="0.909" stop-color="#cd000b"/><stop offset="0.939" stop-color="#cd000b"/><stop offset="0.970" stop-color="#cd000b"/><stop offset="1.000" stop-color="#cd000b"/></linearGradient><linearGradient id="r49" gradientUnits="userSpaceOnUse" x1="2069" x2="3663" y1="0" y2="0"><stop offset="0.000" stop-color="#00cbcd"/><stop offset="0.030" stop-color="#00cbcd"/><stop offset="0.061" stop-color="#00cacd"/><stop offset="0.091" stop-color="#00cacd"/><stop offset="0.121" stop-color="#00cacd"/><stop offset="0.152" stop-color="#00cacd"/><stop offset="0.182" stop-color="#00c9cd"/><stop offset="0.212" stop-color="#00c9cd"/><stop offset="0.242" stop-color="#05c9cd"/><stop offset="0.273" stop-color="#16c8cd"/><stop offset="0.303" stop-color="#2cc8cd"/><stop offset="0.333" stop-color="#71c9cd"/><stop offset="0.364" stop-color="#a2c9cd"/><stop offset="0.394" stop-color="#b2c9cd"/><stop offset="0.424" stop-color="#c4cacd"/><stop offset="0.455" stop-color="#cccbcd"/><stop offset="0.485" stop-color="#cdc4c7"/><stop offset="0.515" stop-color="#cdb8bc"/><stop offset="0.545" stop-color="#cda9ad"/><stop offset="0.576" stop-color="#cd979d"/><stop offset="0.606" stop-color="#cd858b"/><stop offset="0.636" stop-color="#cd7179"/><stop offset="0.667" stop-color="#cd5f67"/><stop offset="0.697" stop-color="#cd515a"/><stop offset="0.727" stop-color="#cd4852"/><stop offset="0.758" stop-color="#cd3e49"/><stop offset="0.788" stop-color="#cd3541"/><stop offset="0.818" stop-color="#cd2a38"/><stop offset="0.848" stop-color="#cd1d2e"/><stop offset="0.879" stop-color="#cd0025"/><stop offset="0.909" stop-color="#cd0024"/><stop offset="0.939" stop-color="#cd0023"/><stop offset="0.970" stop-color="#cd0022"/><stop offset="1.000" stop-color="#cd0021"/></linearGradient><linearGradient id="r50" gradientUnits="userSpaceOnUse" x1="2069" x2="3663" y1="0" y2="0"><stop offset="0.000" stop-color="#00c9cd"/><stop offset="0.030" stop-color="#00c8cd"/><stop offset="0.061" stop-color="#00c8cd"/><stop offset="0.091" stop-color="#00c8cd"/><stop offset="0.121" stop-color="#00c7cd"/><stop offset="0.152" stop-color="#00c7cd"/><stop offset="0.182" stop-color="#00c6cd"/><stop offset="0.212" stop-color="#00c5cd"/><stop offset="0.242" stop-color="#05c4cd"/><stop offset="0.273" stop-color="#16c4cd"/><stop offset="0.303" stop-color="#2bc3cd"/><stop offset="0.333" stop-color="#74c5cd"/><stop offset="0.364" stop-color="#a2c6cd"/><stop offset="0.394" stop-color="#b2c6cd"/><stop offset="0.424" stop-color="#c3c7cd"/><stop offset="0.455" stop-color="#ccc9cd"/><stop offset="0.485" stop-color="#cdc1c6"/><stop offset="0.515" stop-color="#cdb5bc"/><stop offset="0.545" stop-color="#cda5ae"/><stop offset="0.576" stop-color="#cd939e"/><stop offset="0.606" stop-color="#cd808d"/><stop offset="0.636" stop-color="#cd6c7b"/><stop offset="0.667" stop-color="#cd5969"/><stop offset="0.697" stop-color="#cd4b5d"/><stop offset="0.727" stop-color="#cd4155"/><stop offset="0.758" stop-color="#cd374c"/><stop offset="0.788" stop-color="#cd2c44"/><stop offset="0.818" stop-color="#cd1f3c"/><stop offset="0.848" stop-color="#cd0033"/><stop offset="0.879" stop-color="#cd0032"/><stop offset="0.909" stop-color="#cd0030"/><stop offset="0.939" stop-color="#cd002f"/><stop offset="0.970" stop-color="#cd002e"/><stop offset="1.000" stop-color="#cd002d"/></linearGradient><linearGradient id="r51" gradientUnits="userSpaceOnUse" x1="2069" x2="3663" y1="0" y2="0"><stop offset="0.000" stop-color="#00c7cd"/><stop offset="0.030" stop-color="#00c6cd"/><stop offset="0.061" stop-color="#00c6cd"/><stop offset="0.091" stop-color="#00c5cd"/><stop offset="0.121" stop-color="#00c5cd"/><stop offset="0.152" stop-color="#00c4cd"/><stop offset="0.182" stop-color="#00c3cd"/><stop offset="0.212" stop-color="#00c1cd"/><stop offset="0.242" stop-color="#04c0cd"/><stop offset="0.273" stop-color="#15bfcc"/><stop offset="0.303" stop-color="#29becd"/><stop offset="0.333" stop-color="#75c0cd"/><stop offset="0.364" stop-color="#a1c2cd"/><stop offset="0.394" stop-color="#b2c2cd"/><stop offset="0.424" stop-color="#c2c4cd"/><stop offset="0.455" stop-color="#ccc5cd"/><stop offset="0.485" stop-color="#cdbec6"/><stop offset="0.515" stop-color="#cdb1bc"/><stop offset="0.545" stop-color="#cda0ae"/><stop offset="0.576" stop-color="#cc8e9e"/><stop offset="0.606" stop-color="#cc7a8e"/><stop offset="0.636" stop-color="#cd667c"/><stop offset="0.667" stop-color="#cd526c"/><stop offset="0.697" stop-color="#cd4460"/><stop offset="0.727" stop-color="#cd3a57"/><stop offset="0.758" stop-color="#cd2f4f"/><stop offset="0.788" stop-color="#cd2247"/><stop offset="0.818" stop-color="#cd0c40"/><stop offset="0.848" stop-color="#cd003d"/><stop offset="0.879" stop-color="#cd003b"/><stop offset="0.909" stop-color="#cd0039"/><stop offset="0.939" stop-color="#cd0038"/><stop offset="0.970" stop-color="#cd0036"/><stop offset="1.000" stop-color="#cd0035"/></linearGradient><linearGradient id="r52" gradientUnits="userSpaceOnUse" x1="2069" x2="3663" y1="0" y2="0"><stop offset="0.000" stop-color="#00c5cd"/><stop offset="0.030" stop-color="#00c4cd"/><stop offset="0.061" stop-color="#00c4cd"/><stop offset="0.091" stop-color="#00c3cd"/><stop offset="0.121" stop-color="#00c2cd"/><stop offset="0.152" stop-color="#00c1cd"/><stop offset="0.182" stop-color="#00bfcd"/><stop offset="0.212" stop-color="#00becd"/><stop offset="0.242" stop-color="#03bccd"/><stop offset="0.273" stop-color="#13bacd"/><stop offset="0.303" stop-color="#27b9cd"/><stop offset="0.333" stop-color="#74bbcd"/><stop offset="0.364" stop-color="#9fbecd"/><stop offset="0.394" stop-color="#b1becd"/><stop offset="0.424" stop-color="#c1c0cd"/><stop offset="0.455" stop-color="#cbc1cd"/><stop offset="0.485" stop-color="#cdb9c5"/><stop offset="0.515" stop-color="#cdacbb"/><stop offset="0.545" stop-color="#cd9bae"/><stop offset="0.576" stop-color="#cd889f"/><stop offset="0.606" stop-color="#cd748e"/><stop offset="0.636" stop-color="#cd5f7e"/><stop offset="0.667" stop-color="#cd4b6d"/><stop offset="0.697" stop-color="#cd3d62"/><stop offset="0.727" stop-color="#cd325a"/><stop offset="0.758" stop-color="#cd2552"/><stop offset="0.788" stop-color="#cd114b"/><stop offset="0.818" stop-color="#cd0047"/><stop offset="0.848" stop-color="#cd0044"/><stop offset="0.879" stop-color="#cd0042"/><stop offset="0.909" stop-color="#cd0041"/><stop offset="0.939" stop-color="#cd003f"/><stop offset="0.970" stop-color="#cd003d"/><stop offset="1.000" stop-color="#cd003c"/></linearGradient><linearGradient id="r53" gradientUnits="userSpaceOnUse" x1="2069" x2="3663" y1="0" y2="0"><stop offset="0.000" stop-color="#00c3cd"/><stop offset="0.030" stop-color="#00c2cd"/><stop offset="0.061" stop-color="#00c1cd"/><stop offset="0.091" stop-color="#00c0cd"/><stop offset="0.121" stop-color="#00bfcd"/><stop offset="0.152" stop-color="#00becd"/><stop offset="0.182" stop-color="#00bccd"/><stop offset="0.212" stop-color="#00bacd"/><stop offset="0.242" stop-color="#02b7cd"/><stop offset="0.273" stop-color="#11b5cd"/><stop offset="0.303" stop-color="#25b3cd"/><stop offset="0.333" stop-color="#72b5cd"/><stop offset="0.364" stop-color="#9db9cd"/><stop offset="0.394" stop-color="#b1bacd"/><stop offset="0.424" stop-color="#c0bbcd"/><stop offset="0.455" stop-color="#cbbccd"/><stop offset="0.485" stop-color="#cdb3c5"/><stop offset="0.515" stop-color="#cda6bb"/><stop offset="0.545" stop-color="#cd95ae"/><stop offset="0.576" stop-color="#cd829f"/><stop offset="0.606" stop-color="#cd6d8f"/><stop offset="0.636" stop-color="#cd587f"/><stop offset="0.667" stop-color="#cd436f"/><stop offset="0.697" stop-color="#cd3465"/><stop offset="0.727" stop-color="#cd275d"/><stop offset="0.758" stop-color="#cd1555"/><stop offset="0.788" stop-color="#cd0050"/><stop offset="0.818" stop-color="#cd004d"/><stop offset="0.848" stop-color="#cd004b"/><stop offset="0.879" stop-color="#cd0049"/><stop offset="0.909" stop-color="#cd0047"/><stop offset="0.939" stop-color="#cd0045"/><stop offset="0.970" stop-color="#cd0043"/><stop offset="1.000" stop-color="#cd0042"/></linearGradient><linearGradient id="r54" gradientUnits="userSpaceOnUse" x1="2069" x2="3663" y1="0" y2="0"><stop offset="0.000" stop-color="#00c1cd"/><stop offset="0.030" stop-color="#00c0cd"/><stop offset="0.061" stop-color="#00bfcd"/><stop offset="0.091" stop-color="#00becd"/><stop offset="0.121" stop-color="#00bccd"/><stop offset="0.152" stop-color="#00bacd"/><stop offset="0.182" stop-color="#00b8cd"/><stop offset="0.212" stop-color="#00b6cd"/><stop offset="0.242" stop-color="#01b2cd"/><stop offset="0.273" stop-color="#0fb0cc"/><stop offset="0.303" stop-color="#22adcd"/><stop offset="0.333" stop-color="#70aecd"/><stop offset="0.364" stop-color="#9bb3cd"/><stop offset="0.394" stop-color="#b0b5cd"/><stop offset="0.424" stop-color="#bfb6cd"/><stop offset="0.455" stop-color="#cab6cd"/><stop offset="0.485" stop-color="#cdadc5"/><stop offset="0.515" stop-color="#cd9fba"/><stop offset="0.545" stop-color="#cd8ead"/><stop offset="0.576" stop-color="#cd7a9f"/><stop offset="0.606" stop-color="#cd658f"/><stop offset="0.636" stop-color="#cd4f80"/><stop offset="0.667" stop-color="#cd3971"/><stop offset="0.697" stop-color="#cd2a67"/><stop offset="0.727" stop-color="#cd185f"/><stop offset="0.758" stop-color="#cd0059"/><stop offset="0.788" stop-color="#cd0056"/><stop offset="0.818" stop-color="#cd0053"/><stop offset="0.848" stop-color="#cd0051"/><stop offset="0.879" stop-color="#cd004e"/><stop offset="0.909" stop-color="#cd004c"/><stop offset="0.939" stop-color="#cd004a"/><stop offset="0.970" stop-color="#cd0048"/><stop offset="1.000" stop-color="#cd0047"/></linearGradient><linearGradient id="r55" gradientUnits="userSpaceOnUse" x1="2069" x2="3663" y1="0" y2="0"><stop offset="0.000" stop-color="#00bfcd"/><stop offset="0.030" stop-color="#00becd"/><stop offset="0.061" stop-color="#00bccd"/><stop offset="0.091" stop-color="#00bbcd"/><stop offset="0.121" stop-color="#00b9cd"/><stop offset="0.152" stop-color="#00b7cd"/><stop offset="0.182" stop-color="#00b5cd"/><stop offset="0.212" stop-color="#00b2cd"/><stop offset="0.242" stop-color="#00adcd"/><stop offset="0.273" stop-color="#0daacd"/><stop offset="0.303" stop-color="#1ea6cd"/><stop offset="0.333" stop-color="#70a8cd"/><stop offset="0.364" stop-color="#98accd"/><stop offset="0.394" stop-color="#aeafcd"/><stop offset="0.424" stop-color="#beafcd"/><stop offset="0.455" stop-color="#caafcd"/><stop offset="0.485" stop-color="#cda6c4"/><stop offset="0.515" stop-color="#cd98b9"/><stop offset="0.545" stop-color="#cd86ad"/><stop offset="0.576" stop-color="#cd729f"/><stop offset="0.606" stop-color="#cc5c90"/><stop offset="0.636" stop-color="#cd4580"/><stop offset="0.667" stop-color="#cd2e72"/><stop offset="0.697" stop-color="#cd1c69"/><stop offset="0.727" stop-color="#cd0063"/><stop offset="0.758" stop-color="#cd005f"/><stop offset="0.788" stop-color="#cd005b"/><stop offset="0.818" stop-color="#cd0058"/><stop offset="0.848" stop-color="#cd0056"/><stop offset="0.879" stop-color="#cd0053"/><stop offset="0.909" stop-color="#cd0051"/><stop offset="0.939" stop-color="#cd004f"/><stop offset="0.970" stop-color="#cd004d"/><stop offset="1.000" stop-color="#cd004b"/></linearGradient><linearGradient id="r56" gradientUnits="userSpaceOnUse" x1="2069" x2="3663" y1="0" y2="0"><stop offset="0.000" stop-color="#00bdcd"/><stop offset="0.030" stop-color="#00bbcd"/><stop offset="0.061" stop-color="#00bacd"/><stop offset="0.091" stop-color="#00b8cd"/><stop offset="0.121" stop-color="#00b6cd"/><stop offset="0.152" stop-color="#00b4cd"/><stop offset="0.182" stop-color="#00b1cd"/><stop offset="0.212" stop-color="#00adcd"/><stop offset="0.242" stop-color="#00a8cd"/><stop offset="0.273" stop-color="#0aa4cd"/><stop offset="0.303" stop-color="#1b9fcd"/><stop offset="0.333" stop-color="#71a1cd"/><stop offset="0.364" stop-color="#94a4cd"/><stop offset="0.394" stop-color="#aca7cd"/><stop offset="0.424" stop-color="#bda8cd"/><stop offset="0.455" stop-color="#caa7cd"/><stop offset="0.485" stop-color="#cd9ec4"/><stop offset="0.515" stop-color="#cd8fb9"/><stop offset="0.545" stop-color="#cd7eac"/><stop offset="0.576" stop-color="#cd699f"/><stop offset="0.606" stop-color="#cd5290"/><stop offset="0.636" stop-color="#cd3a81"/><stop offset="0.667" stop-color="#cd1f73"/><stop offset="0.697" stop-color="#cd006c"/><stop offset="0.727" stop-color="#cd0068"/><stop offset="0.758" stop-color="#cd0064"/><stop offset="0.788" stop-color="#cd0060"/><stop offset="0.818" stop-color="#cd005d"/><stop offset="0.848" stop-color="#cd005a"/><stop offset="0.879" stop-color="#cd0058"/><stop offset="0.909" stop-color="#cd0055"/><stop offset="0.939" stop-color="#cd0053"/><stop offset="0.970" stop-color="#cd0051"/><stop offset="1.000" stop-color="#cd004f"/></linearGradient><linearGradient id="r57" gradientUnits="userSpaceOnUse" x1="2069" x2="3663" y1="0" y2="0"><stop offset="0.000" stop-color="#00bacd"/><stop offset="0.030" stop-color="#00b9cd"/><stop offset="0.061" stop-color="#00b7cd"/><stop offset="0.091" stop-color="#00b6cd"/><stop offset="0.121" stop-color="#00b3cd"/><stop offset="0.152" stop-color="#00b1cd"/><stop offset="0.182" stop-color="#00adcd"/><stop offset="0.212" stop-color="#00a9cd"/><stop offset="0.242" stop-color="#00a3cd"/><stop offset="0.273" stop-color="#089ecd"/><stop offset="0.303" stop-color="#3398cd"/><stop offset="0.333" stop-color="#719acd"/><stop offset="0.364" stop-color="#939dcd"/><stop offset="0.394" stop-color="#aa9fcd"/><stop offset="0.424" stop-color="#bba0cd"/><stop offset="0.455" stop-color="#c99fcd"/><stop offset="0.485" stop-color="#cd95c4"/><stop offset="0.515" stop-color="#cd86b8"/><stop offset="0.545" stop-color="#cd74ac"/><stop offset="0.576" stop-color="#cc5e9e"/><stop offset="0.606" stop-color="#cd4690"/><stop offset="0.636" stop-color="#cd2b82"/><stop offset="0.667" stop-color="#cd0076"/><stop offset="0.697" stop-color="#cd0070"/><stop offset="0.727" stop-color="#cd006c"/><stop offset="0.758" stop-color="#cd0068"/><stop offset="0.788" stop-color="#cd0064"/><stop offset="0.818" stop-color="#cd0061"/><stop offset="0.848" stop-color="#cd005e"/><stop offset="0.879" stop-color="#cd005c"/><stop offset="0.909" stop-color="#cd0059"/><stop offset="0.939" stop-color="#cd0057"/><stop offset="0.970" stop-color="#cd0055"/><stop offset="1.000" stop-color="#cd0053"/></linearGradient><linearGradient id="r58" gradientUnits="userSpaceOnUse" x1="2069" x2="3663" y1="0" y2="0"><stop offset="0.000" stop-color="#00b8cd"/><stop offset="0.030" stop-color="#00b7cd"/><stop offset="0.061" stop-color="#00b5cd"/><stop offset="0.091" stop-color="#00b3cd"/><stop offset="0.121" stop-color="#00b0cd"/><stop offset="0.152" stop-color="#00adcd"/><stop offset="0.182" stop-color="#00aacd"/><stop offset="0.212" stop-color="#00a5cd"/><stop offset="0.242" stop-color="#009ecd"/><stop offset="0.273" stop-color="#0597cd"/><stop offset="0.303" stop-color="#3b91cd"/><stop offset="0.333" stop-color="#7293cd"/><stop offset="0.364" stop-color="#9295cd"/><stop offset="0.394" stop-color="#a997cd"/><stop offset="0.424" stop-color="#ba97cd"/><stop offset="0.455" stop-color="#c995cd"/><stop offset="0.485" stop-color="#cd8bc4"/><stop offset="0.515" stop-color="#cd7bb8"/><stop offset="0.545" stop-color="#cd69ab"/><stop offset="0.576" stop-color="#cd529e"/><stop offset="0.606" stop-color="#cd3790"/><stop offset="0.636" stop-color="#cd0682"/><stop offset="0.667" stop-color="#cd007a"/><stop offset="0.697" stop-color="#cd0075"/><stop offset="0.727" stop-color="#cd0070"/><stop offset="0.758" stop-color="#cd006c"/><stop offset="0.788" stop-color="#cd0068"/><stop offset="0.818" stop-color="#cd0065"/><stop offset="0.848" stop-color="#cd0062"/><stop offset="0.879" stop-color="#cd005f"/><stop offset="0.909" stop-color="#cd005d"/><stop offset="0.939" stop-color="#cd005b"/><stop offset="0.970" stop-color="#cd0059"/><stop offset="1.000" stop-color="#cd0057"/></linearGradient><linearGradient id="r59" gradientUnits="userSpaceOnUse" x1="2069" x2="3663" y1="0" y2="0"><stop offset="0.000" stop-color="#00b6cd"/><stop offset="0.030" stop-color="#00b4cd"/><stop offset="0.061" stop-color="#00b2cd"/><stop offset="0.091" stop-color="#00b0cd"/><stop offset="0.121" stop-color="#00adcd"/><stop offset="0.152" stop-color="#00aacd"/><stop offset="0.182" stop-color="#00a6cd"/><stop offset="0.212" stop-color="#00a0cd"/><stop offset="0.242" stop-color="#0099cd"/><stop offset="0.273" stop-color="#028fcd"/><stop offset="0.303" stop-color="#4189cd"/><stop offset="0.333" stop-color="#728bcd"/><stop offset="0.364" stop-color="#918dcd"/><stop offset="0.394" stop-color="#a88ecd"/><stop offset="0.424" stop-color="#b98ecd"/><stop offset="0.455" stop-color="#c88bcd"/><stop offset="0.485" stop-color="#cd80c3"/><stop offset="0.515" stop-color="#cd70b7"/><stop offset="0.545" stop-color="#cd5cab"/><stop offset="0.576" stop-color="#cd439e"/><stop offset="0.606" stop-color="#cd1d90"/><stop offset="0.636" stop-color="#cd0385"/><stop offset="0.667" stop-color="#cd007d"/><stop offset="0.697" stop-color="#cd0078"/><stop offset="0.727" stop-color="#cd0074"/><stop offset="0.758" stop-color="#cd0070"/><stop offset="0.788" stop-color="#cd006c"/><stop offset="0.818" stop-color="#cd0069"/><stop offset="0.848" stop-color="#cd0066"/><stop offset="0.879" stop-color="#cd0063"/><stop offset="0.909" stop-color="#cd0060"/><stop offset="0.939" stop-color="#cd005e"/><stop offset="0.970" stop-color="#cd005c"/><stop offset="1.000" stop-color="#cd005a"/></linearGradient><linearGradient id="r60" gradientUnits="userSpaceOnUse" x1="2069" x2="3663" y1="0" y2="0"><stop offset="0.000" stop-color="#00b4cd"/><stop offset="0.030" stop-color="#00b2cd"/><stop offset="0.061" stop-color="#00b0cd"/><stop offset="0.091" stop-color="#00adcd"/><stop offset="0.121" stop-color="#00aacd"/><stop offset="0.152" stop-color="#00a6cd"/><stop offset="0.182" stop-color="#00a2cd"/><stop offset="0.212" stop-color="#009bcd"/><stop offset="0.242" stop-color="#0093cd"/><stop offset="0.273" stop-color="#0088cd"/><stop offset="0.303" stop-color="#4582cd"/><stop offset="0.333" stop-color="#7283cc"/><stop offset="0.364" stop-color="#9084cd"/><stop offset="0.394" stop-color="#a685cd"/><stop offset="0.424" stop-color="#b883cd"/><stop offset="0.455" stop-color="#c87fcd"/><stop offset="0.485" stop-color="#cd73c3"/><stop offset="0.515" stop-color="#cd62b7"/><stop offset="0.545" stop-color="#cd4caa"/><stop offset="0.576" stop-color="#cd2b9d"/><stop offset="0.606" stop-color="#cd0c92"/><stop offset="0.636" stop-color="#cd0187"/><stop offset="0.667" stop-color="#cd0081"/><stop offset="0.697" stop-color="#cd007c"/><stop offset="0.727" stop-color="#cd0077"/><stop offset="0.758" stop-color="#cd0073"/><stop offset="0.788" stop-color="#cd006f"/><stop offset="0.818" stop-color="#cd006c"/><stop offset="0.848" stop-color="#cd0069"/><stop offset="0.879" stop-color="#cd0066"/><stop offset="0.909" stop-color="#cd0064"/><stop offset="0.939" stop-color="#cd0061"/><stop offset="0.970" stop-color="#cd005f"/><stop offset="1.000" stop-color="#cd005d"/></linearGradient><linearGradient id="r61" gradientUnits="userSpaceOnUse" x1="2069" x2="3663" y1="0" y2="0"><stop offset="0.000" stop-color="#00b2cd"/><stop offset="0.030" stop-color="#00b0cd"/><stop offset="0.061" stop-color="#00adcd"/><stop offset="0.091" stop-color="#00aacd"/><stop offset="0.121" stop-color="#00a7cd"/><stop offset="0.152" stop-color="#00a3cd"/><stop offset="0.182" stop-color="#009dcd"/><stop offset="0.212" stop-color="#0097cd"/><stop offset="0.242" stop-color="#008dcd"/><stop offset="0.273" stop-color="#0080cd"/><stop offset="0.303" stop-color="#487acc"/><stop offset="0.333" stop-color="#727acd"/><stop offset="0.364" stop-color="#8f7bcd"/><stop offset="0.394" stop-color="#a57acd"/><stop offset="0.424" stop-color="#b778cd"/><stop offset="0.455" stop-color="#c773cd"/><stop offset="0.485" stop-color="#cd65c3"/><stop offset="0.515" stop-color="#cd52b7"/><stop offset="0.545" stop-color="#cd35aa"/><stop offset="0.576" stop-color="#cd139e"/><stop offset="0.606" stop-color="#cd0893"/><stop offset="0.636" stop-color="#cd008a"/><stop offset="0.667" stop-color="#cd0084"/><stop offset="0.697" stop-color="#cd007f"/><stop offset="0.727" stop-color="#cd007a"/><stop offset="0.758" stop-color="#cd0076"/><stop offset="0.788" stop-color="#cd0072"/><stop offset="0.818" stop-color="#cd006f"/><stop offset="0.848" stop-color="#cd006c"/><stop offset="0.879" stop-color="#cd0069"/><stop offset="0.909" stop-color="#cd0066"/><stop offset="0.939" stop-color="#cd0064"/><stop offset="0.970" stop-color="#cd0062"/><stop offset="1.000" stop-color="#cd0060"/></linearGradient><linearGradient id="r62" gradientUnits="userSpaceOnUse" x1="2069" x2="3663" y1="0" y2="0"><stop offset="0.000" stop-color="#00afcd"/><stop offset="0.030" stop-color="#00adcd"/><stop offset="0.061" stop-color="#00abcd"/><stop offset="0.091" stop-color="#00a7cd"/><stop offset="0.121" stop-color="#00a4cd"/><stop offset="0.152" stop-color="#009fcd"/><stop offset="0.182" stop-color="#0099cd"/><stop offset="0.212" stop-color="#0092cd"/><stop offset="0.242" stop-color="#0087cd"/><stop offset="0.273" stop-color="#0078cd"/><stop offset="0.303" stop-color="#4b71cc"/><stop offset="0.333" stop-color="#7271cd"/><stop offset="0.364" stop-color="#8e70cd"/><stop offset="0.394" stop-color="#a46fcd"/><stop offset="0.424" stop-color="#b76bcd"/><stop offset="0.455" stop-color="#c764cd"/><stop offset="0.485" stop-color="#cd55c4"/><stop offset="0.515" stop-color="#cd3cb6"/><stop offset="0.545" stop-color="#cd19aa"/><stop offset="0.576" stop-color="#cd0e9f"/><stop offset="0.606" stop-color="#cc0495"/><stop offset="0.636" stop-color="#cd008d"/><stop offset="0.667" stop-color="#cd0087"/><stop offset="0.697" stop-color="#cd0082"/><stop offset="0.727" stop-color="#cd007d"/><stop offset="0.758" stop-color="#cd0079"/><stop offset="0.788" stop-color="#cd0075"/><stop offset="0.818" stop-color="#cd0072"/><stop offset="0.848" stop-color="#cd006f"/><stop offset="0.879" stop-color="#cd006c"/><stop offset="0.909" stop-color="#cd0069"/><stop offset="0.939" stop-color="#cd0067"/><stop offset="0.970" stop-color="#cd0065"/><stop offset="1.000" stop-color="#cd0063"/></linearGradient><linearGradient id="r63" gradientUnits="userSpaceOnUse" x1="2069" x2="3663" y1="0" y2="0"><stop offset="0.000" stop-color="#00adcd"/><stop offset="0.030" stop-color="#00abcd"/><stop offset="0.061" stop-color="#00a8cd"/><stop offset="0.091" stop-color="#00a5cd"/><stop offset="0.121" stop-color="#00a0cd"/><stop offset="0.152" stop-color="#009bcd"/><stop offset="0.182" stop-color="#0095cd"/><stop offset="0.212" stop-color="#008dcd"/><stop offset="0.242" stop-color="#0081cd"/><stop offset="0.273" stop-color="#006fcd"/><stop offset="0.303" stop-color="#4d69cd"/><stop offset="0.333" stop-color="#7267cc"/><stop offset="0.364" stop-color="#8d65cd"/><stop offset="0.394" stop-color="#a363cd"/><stop offset="0.424" stop-color="#b65dcd"/><stop offset="0.455" stop-color="#c653cd"/><stop offset="0.485" stop-color="#cd3fc4"/><stop offset="0.515" stop-color="#cd1ab6"/><stop offset="0.545" stop-color="#cd12ab"/><stop offset="0.576" stop-color="#cd09a0"/><stop offset="0.606" stop-color="#cd0196"/><stop offset="0.636" stop-color="#cd008f"/><stop offset="0.667" stop-color="#cd0089"/><stop offset="0.697" stop-color="#cd0084"/><stop offset="0.727" stop-color="#cd0080"/><stop offset="0.758" stop-color="#cd007c"/><stop offset="0.788" stop-color="#cd0078"/><stop offset="0.818" stop-color="#cd0074"/><stop offset="0.848" stop-color="#cd0071"/><stop offset="0.879" stop-color="#cd006e"/><stop offset="0.909" stop-color="#cd006c"/><stop offset="0.939" stop-color="#cd0069"/><stop offset="0.970" stop-color="#cd0067"/><stop offset="1.000" stop-color="#cd0065"/></linearGradient><linearGradient id="r64" gradientUnits="userSpaceOnUse" x1="2069" x2="3663" y1="0" y2="0"><stop offset="0.000" stop-color="#00abcd"/><stop offset="0.030" stop-color="#00a8cd"/><stop offset="0.061" stop-color="#00a5cd"/><stop offset="0.091" stop-color="#00a2cd"/><stop offset="0.121" stop-color="#009dcd"/><stop offset="0.152" stop-color="#0098cd"/><stop offset="0.182" stop-color="#0090cd"/><stop offset="0.212" stop-color="#0087cd"/><stop offset="0.242" stop-color="#007acd"/><stop offset="0.273" stop-color="#1367cd"/><stop offset="0.303" stop-color="#5161cd"/><stop offset="0.333" stop-color="#725dcd"/><stop offset="0.364" stop-color="#8d5acd"/><stop offset="0.394" stop-color="#a255cd"/><stop offset="0.424" stop-color="#b54dcd"/><stop offset="0.455" stop-color="#c63ecd"/><stop offset="0.485" stop-color="#cc18c4"/><stop offset="0.515" stop-color="#cd13b7"/><stop offset="0.545" stop-color="#cd0cac"/><stop offset="0.576" stop-color="#cd05a1"/><stop offset="0.606" stop-color="#cd0098"/><stop offset="0.636" stop-color="#cd0092"/><stop offset="0.667" stop-color="#cd008c"/><stop offset="0.697" stop-color="#cd0087"/><stop offset="0.727" stop-color="#cd0082"/><stop offset="0.758" stop-color="#cd007e"/><stop offset="0.788" stop-color="#cd007a"/><stop offset="0.818" stop-color="#cd0077"/><stop offset="0.848" stop-color="#cd0074"/><stop offset="0.879" stop-color="#cd0071"/><stop offset="0.909" stop-color="#cd006e"/><stop offset="0.939" stop-color="#cd006c"/><stop offset="0.970" stop-color="#cd006a"/><stop offset="1.000" stop-color="#cd0067"/></linearGradient><linearGradient id="r65" gradientUnits="userSpaceOnUse" x1="2069" x2="3663" y1="0" y2="0"><stop offset="0.000" stop-color="#00a9cd"/><stop offset="0.030" stop-color="#00a6cd"/><stop offset="0.061" stop-color="#00a2cd"/><stop offset="0.091" stop-color="#009ecd"/><stop offset="0.121" stop-color="#009acd"/><stop offset="0.152" stop-color="#0094cd"/><stop offset="0.182" stop-color="#008ccd"/><stop offset="0.212" stop-color="#0082cd"/><stop offset="0.242" stop-color="#0073cd"/><stop offset="0.273" stop-color="#2460cd"/><stop offset="0.303" stop-color="#5559cd"/><stop offset="0.333" stop-color="#7352cd"/><stop offset="0.364" stop-color="#8c4ccd"/><stop offset="0.394" stop-color="#a245cd"/><stop offset="0.424" stop-color="#b438cd"/><stop offset="0.455" stop-color="#c512cd"/><stop offset="0.485" stop-color="#cd11c4"/><stop offset="0.515" stop-color="#cd0db8"/><stop offset="0.545" stop-color="#cd07ad"/><stop offset="0.576" stop-color="#cd01a3"/><stop offset="0.606" stop-color="#cd009b"/><stop offset="0.636" stop-color="#cd0094"/><stop offset="0.667" stop-color="#cd008e"/><stop offset="0.697" stop-color="#cd0089"/><stop offset="0.727" stop-color="#cd0085"/><stop offset="0.758" stop-color="#cd0080"/><stop offset="0.788" stop-color="#cd007d"/><stop offset="0.818" stop-color="#cd0079"/><stop offset="0.848" stop-color="#cd0076"/><stop offset="0.879" stop-color="#cd0073"/><stop offset="0.909" stop-color="#cd0071"/><stop offset="0.939" stop-color="#cd006e"/><stop offset="0.970" stop-color="#cd006c"/><stop offset="1.000" stop-color="#cd006a"/></linearGradient><linearGradient id="r66" gradientUnits="userSpaceOnUse" x1="2069" x2="3663" y1="0" y2="0"><stop offset="0.000" stop-color="#00a6cd"/><stop offset="0.030" stop-color="#00a3cd"/><stop offset="0.061" stop-color="#00a0cd"/><stop offset="0.091" stop-color="#009bcd"/><stop offset="0.121" stop-color="#0096cd"/><stop offset="0.152" stop-color="#0090cd"/><stop offset="0.182" stop-color="#0087cd"/><stop offset="0.212" stop-color="#007ccd"/><stop offset="0.242" stop-color="#006bcd"/><stop offset="0.273" stop-color="#2d58cd"/><stop offset="0.303" stop-color="#5951cd"/><stop offset="0.333" stop-color="#7448cd"/><stop offset="0.364" stop-color="#8c3ecd"/><stop offset="0.394" stop-color="#a132cc"/><stop offset="0.424" stop-color="#b40acd"/><stop offset="0.455" stop-color="#c50ccd"/><stop offset="0.485" stop-color="#cd0bc5"/><stop offset="0.515" stop-color="#cd07b8"/><stop offset="0.545" stop-color="#cd02ad"/><stop offset="0.576" stop-color="#cd00a4"/><stop offset="0.606" stop-color="#cd009d"/><stop offset="0.636" stop-color="#cd0096"/><stop offset="0.667" stop-color="#cd0090"/><stop offset="0.697" stop-color="#cd008b"/><stop offset="0.727" stop-color="#cd0087"/><stop offset="0.758" stop-color="#cd0083"/><stop offset="0.788" stop-color="#cd007f"/><stop offset="0.818" stop-color="#cd007b"/><stop offset="0.848" stop-color="#cd0078"/><stop offset="0.879" stop-color="#cd0075"/><stop offset="0.909" stop-color="#cd0073"/><stop offset="0.939" stop-color="#cd0070"/><stop offset="0.970" stop-color="#cd006e"/><stop offset="1.000" stop-color="#cd006c"/></linearGradient><linearGradient id="r67" gradientUnits="userSpaceOnUse" x1="2069" x2="3663" y1="0" y2="0"><stop offset="0.000" stop-color="#00a4cd"/><stop offset="0.030" stop-color="#00a1cd"/><stop offset="0.061" stop-color="#009dcd"/><stop offset="0.091" stop-color="#0098cd"/><stop offset="0.121" stop-color="#0092cd"/><stop offset="0.152" stop-color="#008bcd"/><stop offset="0.182" stop-color="#0082cd"/><stop offset="0.212" stop-color="#0075cd"/><stop offset="0.242" stop-color="#0063cd"/><stop offset="0.273" stop-color="#3550cd"/><stop offset="0.303" stop-color="#5c47cd"/><stop offset="0.333" stop-color="#763ccd"/><stop offset="0.364" stop-color="#8c2dcd"/><stop offset="0.394" stop-color="#a111cd"/><stop offset="0.424" stop-color="#b405cd"/><stop offset="0.455" stop-color="#c506cd"/><stop offset="0.485" stop-color="#cd05c5"/><stop offset="0.515" stop-color="#cd02b9"/><stop offset="0.545" stop-color="#cd00ae"/><stop offset="0.576" stop-color="#cd00a6"/><stop offset="0.606" stop-color="#cd009e"/><stop offset="0.636" stop-color="#cd0098"/><stop offset="0.667" stop-color="#cd0092"/><stop offset="0.697" stop-color="#cd008d"/><stop offset="0.727" stop-color="#cd0089"/><stop offset="0.758" stop-color="#cd0085"/><stop offset="0.788" stop-color="#cd0081"/><stop offset="0.818" stop-color="#cd007e"/><stop offset="0.848" stop-color="#cd007a"/><stop offset="0.879" stop-color="#cd0078"/><stop offset="0.909" stop-color="#cd0075"/><stop offset="0.939" stop-color="#cd0072"/><stop offset="0.970" stop-color="#cd0070"/><stop offset="1.000" stop-color="#cd006e"/></linearGradient><linearGradient id="r68" gradientUnits="userSpaceOnUse" x1="2069" x2="3663" y1="0" y2="0"><stop offset="0.000" stop-color="#00a1cd"/><stop offset="0.030" stop-color="#009ecd"/><stop offset="0.061" stop-color="#009acd"/><stop offset="0.091" stop-color="#0095cd"/><stop offset="0.121" stop-color="#008fcd"/><stop offset="0.152" stop-color="#0087cd"/><stop offset="0.182" stop-color="#007dcd"/><stop offset="0.212" stop-color="#006fcd"/><stop offset="0.242" stop-color="#0059cd"/><stop offset="0.273" stop-color="#3b47cd"/><stop offset="0.303" stop-color="#5f3dcd"/><stop offset="0.333" stop-color="#782fcd"/><stop offset="0.364" stop-color="#8d15cd"/><stop offset="0.394" stop-color="#a200cd"/><stop offset="0.424" stop-color="#b400cd"/><stop offset="0.455" stop-color="#c501cd"/><stop offset="0.485" stop-color="#cd01c6"/><stop offset="0.515" stop-color="#cd00ba"/><stop offset="0.545" stop-color="#cd00b0"/><stop offset="0.576" stop-color="#cd00a7"/><stop offset="0.606" stop-color="#cd00a0"/><stop offset="0.636" stop-color="#cd009a"/><stop offset="0.667" stop-color="#cd0094"/><stop offset="0.697" stop-color="#cd008f"/><stop offset="0.727" stop-color="#cd008b"/><stop offset="0.758" stop-color="#cd0087"/><stop offset="0.788" stop-color="#cd0083"/><stop offset="0.818" stop-color="#cd0080"/><stop offset="0.848" stop-color="#cd007c"/><stop offset="0.879" stop-color="#cd007a"/><stop offset="0.909" stop-color="#cd0077"/><stop offset="0.939" stop-color="#cd0074"/><stop offset="0.970" stop-color="#cd0072"/><stop offset="1.000" stop-color="#cd0070"/></linearGradient><linearGradient id="r69" gradientUnits="userSpaceOnUse" x1="2069" x2="3663" y1="0" y2="0"><stop offset="0.000" stop-color="#009fcd"/><stop offset="0.030" stop-color="#009bcd"/><stop offset="0.061" stop-color="#0097cd"/><stop offset="0.091" stop-color="#0091cd"/><stop offset="0.121" stop-color="#008bcd"/><stop offset="0.152" stop-color="#0083cd"/><stop offset="0.182" stop-color="#0077cd"/><stop offset="0.212" stop-color="#0068cd"/><stop offset="0.242" stop-color="#004fcd"/><stop offset="0.273" stop-color="#403dcd"/><stop offset="0.303" stop-color="#6130cd"/><stop offset="0.333" stop-color="#7a1acd"/><stop offset="0.364" stop-color="#9000cd"/><stop offset="0.394" stop-color="#a400cd"/><stop offset="0.424" stop-color="#b500cd"/><stop offset="0.455" stop-color="#c500cd"/><stop offset="0.485" stop-color="#cd00c6"/><stop offset="0.515" stop-color="#cd00bb"/><stop offset="0.545" stop-color="#cd00b1"/><stop offset="0.576" stop-color="#cd00a9"/><stop offset="0.606" stop-color="#cd00a2"/><stop offset="0.636" stop-color="#cd009c"/><stop offset="0.667" stop-color="#cd0096"/><stop offset="0.697" stop-color="#cd0091"/><stop offset="0.727" stop-color="#cd008d"/><stop offset="0.758" stop-color="#cd0089"/><stop offset="0.788" stop-color="#cd0085"/><stop offset="0.818" stop-color="#cd0081"/><stop offset="0.848" stop-color="#cd007e"/><stop offset="0.879" stop-color="#cd007b"/><stop offset="0.909" stop-color="#cd0079"/><stop offset="0.939" stop-color="#cd0076"/><stop offset="0.970" stop-color="#cd0074"/><stop offset="1.000" stop-color="#cd0072"/></linearGradient><linearGradient id="r70" gradientUnits="userSpaceOnUse" x1="2069" x2="3663" y1="0" y2="0"><stop offset="0.000" stop-color="#009dcd"/><stop offset="0.030" stop-color="#0099cd"/><stop offset="0.061" stop-color="#0094cd"/><stop offset="0.091" stop-color="#008ecd"/><stop offset="0.121" stop-color="#0087cd"/><stop offset="0.152" stop-color="#007ecd"/><stop offset="0.182" stop-color="#0072cd"/><stop offset="0.212" stop-color="#0060cd"/><stop offset="0.242" stop-color="#0042cd"/><stop offset="0.273" stop-color="#4531cd"/><stop offset="0.303" stop-color="#641dcd"/><stop offset="0.333" stop-color="#7d00cd"/><stop offset="0.364" stop-color="#9300cd"/><stop offset="0.394" stop-color="#a600cd"/><stop offset="0.424" stop-color="#b600cd"/><stop offset="0.455" stop-color="#c500cd"/><stop offset="0.485" stop-color="#cd00c7"/><stop offset="0.515" stop-color="#cd00bc"/><stop offset="0.545" stop-color="#cd00b2"/><stop offset="0.576" stop-color="#cd00aa"/><stop offset="0.606" stop-color="#cd00a3"/><stop offset="0.636" stop-color="#cd009d"/><stop offset="0.667" stop-color="#cd0098"/><stop offset="0.697" stop-color="#cd0093"/><stop offset="0.727" stop-color="#cd008e"/><stop offset="0.758" stop-color="#cd008a"/><stop offset="0.788" stop-color="#cd0087"/><stop offset="0.818" stop-color="#cd0083"/><stop offset="0.848" stop-color="#cd0080"/><stop offset="0.879" stop-color="#cd007d"/><stop offset="0.909" stop-color="#cd007b"/><stop offset="0.939" stop-color="#cd0078"/><stop offset="0.970" stop-color="#cd0076"/><stop offset="1.000" stop-color="#cd0073"/></linearGradient><linearGradient id="r71" gradientUnits="userSpaceOnUse" x1="2069" x2="3663" y1="0" y2="0"><stop offset="0.000" stop-color="#009acd"/><stop offset="0.030" stop-color="#0096cd"/><stop offset="0.061" stop-color="#0091cd"/><stop offset="0.091" stop-color="#008bcd"/><stop offset="0.121" stop-color="#0083cd"/><stop offset="0.152" stop-color="#0079cd"/><stop offset="0.182" stop-color="#006ccd"/><stop offset="0.212" stop-color="#0058cd"/><stop offset="0.242" stop-color="#0032cd"/><stop offset="0.273" stop-color="#491fcd"/><stop offset="0.303" stop-color="#6800cd"/><stop offset="0.333" stop-color="#8100cd"/><stop offset="0.364" stop-color="#9600cd"/><stop offset="0.394" stop-color="#a700cd"/><stop offset="0.424" stop-color="#b700cd"/><stop offset="0.455" stop-color="#c500cd"/><stop offset="0.485" stop-color="#cd00c7"/><stop offset="0.515" stop-color="#cd00bd"/><stop offset="0.545" stop-color="#cd00b3"/><stop offset="0.576" stop-color="#cd00ac"/><stop offset="0.606" stop-color="#cd00a5"/><stop offset="0.636" stop-color="#cd009f"/><stop offset="0.667" stop-color="#cd0099"/><stop offset="0.697" stop-color="#cd0094"/><stop offset="0.727" stop-color="#cd0090"/><stop offset="0.758" stop-color="#cd008c"/><stop offset="0.788" stop-color="#cd0088"/><stop offset="0.818" stop-color="#cd0085"/><stop offset="0.848" stop-color="#cd0082"/><stop offset="0.879" stop-color="#cd007f"/><stop offset="0.909" stop-color="#cd007c"/><stop offset="0.939" stop-color="#cd007a"/><stop offset="0.970" stop-color="#cd0077"/><stop offset="1.000" stop-color="#cd0075"/></linearGradient><linearGradient id="r72" gradientUnits="userSpaceOnUse" x1="2069" x2="3663" y1="0" y2="0"><stop offset="0.000" stop-color="#0097cd"/><stop offset="0.030" stop-color="#0093cd"/><stop offset="0.061" stop-color="#008dcd"/><stop offset="0.091" stop-color="#0087cd"/><stop offset="0.121" stop-color="#007fcd"/><stop offset="0.152" stop-color="#0074cd"/><stop offset="0.182" stop-color="#0065cd"/><stop offset="0.212" stop-color="#004ecd"/><stop offset="0.242" stop-color="#1b22cd"/><stop offset="0.273" stop-color="#4f00cd"/><stop offset="0.303" stop-color="#6e00cd"/><stop offset="0.333" stop-color="#8500cd"/><stop offset="0.364" stop-color="#9800cd"/><stop offset="0.394" stop-color="#a900cd"/><stop offset="0.424" stop-color="#b700cd"/><stop offset="0.455" stop-color="#c500cd"/><stop offset="0.485" stop-color="#cd00c8"/><stop offset="0.515" stop-color="#cd00bd"/><stop offset="0.545" stop-color="#cd00b4"/><stop offset="0.576" stop-color="#cd00ad"/><stop offset="0.606" stop-color="#cd00a6"/><stop offset="0.636" stop-color="#cd00a0"/><stop offset="0.667" stop-color="#cd009b"/><stop offset="0.697" stop-color="#cd0096"/><stop offset="0.727" stop-color="#cd0092"/><stop offset="0.758" stop-color="#cd008e"/><stop offset="0.788" stop-color="#cd008a"/><stop offset="0.818" stop-color="#cd0087"/><stop offset="0.848" stop-color="#cd0084"/><stop offset="0.879" stop-color="#cd0081"/><stop offset="0.909" stop-color="#cd007e"/><stop offset="0.939" stop-color="#cd007b"/><stop offset="0.970" stop-color="#cd0079"/><stop offset="1.000" stop-color="#cd0077"/></linearGradient><linearGradient id="r73" gradientUnits="userSpaceOnUse" x1="2069" x2="3663" y1="0" y2="0"><stop offset="0.000" stop-color="#0095cd"/><stop offset="0.030" stop-color="#0090cd"/><stop offset="0.061" stop-color="#008acd"/><stop offset="0.091" stop-color="#0083cd"/><stop offset="0.121" stop-color="#007acd"/><stop offset="0.152" stop-color="#006fcd"/><stop offset="0.182" stop-color="#005ecd"/><stop offset="0.212" stop-color="#0044cd"/><stop offset="0.242" stop-color="#2900cd"/><stop offset="0.273" stop-color="#5800cd"/><stop offset="0.303" stop-color="#7300cd"/><stop offset="0.333" stop-color="#8800cd"/><stop offset="0.364" stop-color="#9a00cd"/><stop offset="0.394" stop-color="#aa00cd"/><stop offset="0.424" stop-color="#b800cd"/><stop offset="0.455" stop-color="#c500cd"/><stop offset="0.485" stop-color="#cd00c8"/><stop offset="0.515" stop-color="#cd00be"/><stop offset="0.545" stop-color="#cd00b5"/><stop offset="0.576" stop-color="#cd00ae"/><stop offset="0.606" stop-color="#cd00a7"/><stop offset="0.636" stop-color="#cd00a1"/><stop offset="0.667" stop-color="#cd009c"/><stop offset="0.697" stop-color="#cd0097"/><stop offset="0.727" stop-color="#cd0093"/><stop offset="0.758" stop-color="#cd008f"/><stop offset="0.788" stop-color="#cd008c"/><stop offset="0.818" stop-color="#cd0088"/><stop offset="0.848" stop-color="#cd0085"/><stop offset="0.879" stop-color="#cd0082"/><stop offset="0.909" stop-color="#cd0080"/><stop offset="0.939" stop-color="#cd007d"/><stop offset="0.970" stop-color="#cd007b"/><stop offset="1.000" stop-color="#cd0078"/></linearGradient><linearGradient id="r74" gradientUnits="userSpaceOnUse" x1="2069" x2="3663" y1="0" y2="0"><stop offset="0.000" stop-color="#0092cd"/><stop offset="0.030" stop-color="#008dcd"/><stop offset="0.061" stop-color="#0087cd"/><stop offset="0.091" stop-color="#007fcd"/><stop offset="0.121" stop-color="#0076cd"/><stop offset="0.152" stop-color="#0069cd"/><stop offset="0.182" stop-color="#0057cd"/><stop offset="0.212" stop-color="#0036cd"/><stop offset="0.242" stop-color="#3b00cd"/><stop offset="0.273" stop-color="#5f00cd"/><stop offset="0.303" stop-color="#7800cd"/><stop offset="0.333" stop-color="#8b00cd"/><stop offset="0.364" stop-color="#9c00cd"/><stop offset="0.394" stop-color="#ab00cd"/><stop offset="0.424" stop-color="#b900cd"/><stop offset="0.455" stop-color="#c500cd"/><stop offset="0.485" stop-color="#cd00c9"/><stop offset="0.515" stop-color="#cd00bf"/><stop offset="0.545" stop-color="#cd00b6"/><stop offset="0.576" stop-color="#cd00af"/><stop offset="0.606" stop-color="#cd00a9"/><stop offset="0.636" stop-color="#cd00a3"/><stop offset="0.667" stop-color="#cd009e"/><stop offset="0.697" stop-color="#cd0099"/><stop offset="0.727" stop-color="#cd0095"/><stop offset="0.758" stop-color="#cd0091"/><stop offset="0.788" stop-color="#cd008d"/><stop offset="0.818" stop-color="#cd008a"/><stop offset="0.848" stop-color="#cd0087"/><stop offset="0.879" stop-color="#cd0084"/><stop offset="0.909" stop-color="#cd0081"/><stop offset="0.939" stop-color="#cd007f"/><stop offset="0.970" stop-color="#cd007c"/><stop offset="1.000" stop-color="#cd007a"/></linearGradient><linearGradient id="r75" gradientUnits="userSpaceOnUse" x1="2069" x2="3663" y1="0" y2="0"><stop offset="0.000" stop-color="#008fcd"/><stop offset="0.030" stop-color="#008acd"/><stop offset="0.061" stop-color="#0083cd"/><stop offset="0.091" stop-color="#007bcd"/><stop offset="0.121" stop-color="#0071cd"/><stop offset="0.152" stop-color="#0063cd"/><stop offset="0.182" stop-color="#004ecd"/><stop offset="0.212" stop-color="#0022cd"/><stop offset="0.242" stop-color="#4600cd"/><stop offset="0.273" stop-color="#6500cd"/><stop offset="0.303" stop-color="#7c00cd"/><stop offset="0.333" stop-color="#8e00cd"/><stop offset="0.364" stop-color="#9e00cd"/><stop offset="0.394" stop-color="#ac00cd"/><stop offset="0.424" stop-color="#b900cd"/><stop offset="0.455" stop-color="#c500cd"/><stop offset="0.485" stop-color="#cd00c9"/><stop offset="0.515" stop-color="#cd00bf"/><stop offset="0.545" stop-color="#cd00b7"/><stop offset="0.576" stop-color="#cd00b0"/><stop offset="0.606" stop-color="#cd00aa"/><stop offset="0.636" stop-color="#cd00a4"/><stop offset="0.667" stop-color="#cd009f"/><stop offset="0.697" stop-color="#cd009a"/><stop offset="0.727" stop-color="#cd0096"/><stop offset="0.758" stop-color="#cd0092"/><stop offset="0.788" stop-color="#cd008e"/><stop offset="0.818" stop-color="#cd008b"/><stop offset="0.848" stop-color="#cd0088"/><stop offset="0.879" stop-color="#cd0085"/><stop offset="0.909" stop-color="#cd0083"/><stop offset="0.939" stop-color="#cd0080"/><stop offset="0.970" stop-color="#cd007e"/><stop offset="1.000" stop-color="#cd007b"/></linearGradient><linearGradient id="r76" gradientUnits="userSpaceOnUse" x1="2069" x2="3663" y1="0" y2="0"><stop offset="0.000" stop-color="#008dcd"/><stop offset="0.030" stop-color="#0087cd"/><stop offset="0.061" stop-color="#0080cd"/><stop offset="0.091" stop-color="#0077cd"/><stop offset="0.121" stop-color="#006ccd"/><stop offset="0.152" stop-color="#005dcd"/><stop offset="0.182" stop-color="#0045cd"/><stop offset="0.212" stop-color="#1c00cd"/><stop offset="0.242" stop-color="#5000cd"/><stop offset="0.273" stop-color="#6b00cd"/><stop offset="0.303" stop-color="#7f00cd"/><stop offset="0.333" stop-color="#9100cd"/><stop offset="0.364" stop-color="#a000cd"/><stop offset="0.394" stop-color="#ad00cd"/><stop offset="0.424" stop-color="#ba00cd"/><stop offset="0.455" stop-color="#c500cd"/><stop offset="0.485" stop-color="#cd00c9"/><stop offset="0.515" stop-color="#cd00c0"/><stop offset="0.545" stop-color="#cd00b8"/><stop offset="0.576" stop-color="#cd00b1"/><stop offset="0.606" stop-color="#cd00ab"/><stop offset="0.636" stop-color="#cd00a5"/><stop offset="0.667" stop-color="#cd00a0"/><stop offset="0.697" stop-color="#cd009b"/><stop offset="0.727" stop-color="#cd0097"/><stop offset="0.758" stop-color="#cd0093"/><stop offset="0.788" stop-color="#cd0090"/><stop offset="0.818" stop-color="#cd008d"/><stop offset="0.848" stop-color="#cd0089"/><stop offset="0.879" stop-color="#cd0087"/><stop offset="0.909" stop-color="#cd0084"/><stop offset="0.939" stop-color="#cd0081"/><stop offset="0.970" stop-color="#cd007f"/><stop offset="1.000" stop-color="#cd007d"/></linearGradient><linearGradient id="r77" gradientUnits="userSpaceOnUse" x1="2069" x2="3663" y1="0" y2="0"><stop offset="0.000" stop-color="#008acd"/><stop offset="0.030" stop-color="#0084cd"/><stop offset="0.061" stop-color="#007ccd"/><stop offset="0.091" stop-color="#0073cd"/><stop offset="0.121" stop-color="#0067cd"/><stop offset="0.152" stop-color="#0056cd"/><stop offset="0.182" stop-color="#0039cd"/><stop offset="0.212" stop-color="#3100cd"/><stop offset="0.242" stop-color="#5700cd"/><stop offset="0.273" stop-color="#6f00cd"/><stop offset="0.303" stop-color="#8300cd"/><stop offset="0.333" stop-color="#9300cd"/><stop offset="0.364" stop-color="#a100cd"/><stop offset="0.394" stop-color="#ae00cd"/><stop offset="0.424" stop-color="#ba00cd"/><stop offset="0.455" stop-color="#c500cd"/><stop offset="0.485" stop-color="#cd00ca"/><stop offset="0.515" stop-color="#cd00c1"/><stop offset="0.545" stop-color="#cd00b9"/><stop offset="0.576" stop-color="#cd00b2"/><stop offset="0.606" stop-color="#cd00ac"/><stop offset="0.636" stop-color="#cd00a6"/><stop offset="0.667" stop-color="#cd00a1"/><stop offset="0.697" stop-color="#cd009d"/><stop offset="0.727" stop-color="#cd0099"/><stop offset="0.758" stop-color="#cd0095"/><stop offset="0.788" stop-color="#cd0091"/><stop offset="0.818" stop-color="#cd008e"/><stop offset="0.848" stop-color="#cd008b"/><stop offset="0.879" stop-color="#cd0088"/><stop offset="0.909" stop-color="#cd0085"/><stop offset="0.939" stop-color="#cd0083"/><stop offset="0.970" stop-color="#cd0080"/><stop offset="1.000" stop-color="#cd007e"/></linearGradient><linearGradient id="r78" gradientUnits="userSpaceOnUse" x1="2069" x2="3663" y1="0" y2="0"><stop offset="0.000" stop-color="#0087cd"/><stop offset="0.030" stop-color="#0081cd"/><stop offset="0.061" stop-color="#0079cd"/><stop offset="0.091" stop-color="#0070cd"/><stop offset="0.121" stop-color="#0063cd"/><stop offset="0.152" stop-color="#0050cd"/><stop offset="0.182" stop-color="#002ecd"/><stop offset="0.212" stop-color="#3c00cd"/><stop offset="0.242" stop-color="#5c00cd"/><stop offset="0.273" stop-color="#7300cd"/><stop offset="0.303" stop-color="#8500cd"/><stop offset="0.333" stop-color="#9400cd"/><stop offset="0.364" stop-color="#a200cd"/><stop offset="0.394" stop-color="#af00cd"/><stop offset="0.424" stop-color="#ba00cd"/><stop offset="0.455" stop-color="#c500cd"/><stop offset="0.485" stop-color="#cd00ca"/><stop offset="0.515" stop-color="#cd00c1"/><stop offset="0.545" stop-color="#cd00b9"/><stop offset="0.576" stop-color="#cd00b3"/><stop offset="0.606" stop-color="#cd00ac"/><stop offset="0.636" stop-color="#cd00a7"/><stop offset="0.667" stop-color="#cd00a2"/><stop offset="0.697" stop-color="#cd009e"/><stop offset="0.727" stop-color="#cd0099"/><stop offset="0.758" stop-color="#cd0096"/><stop offset="0.788" stop-color="#cd0092"/><stop offset="0.818" stop-color="#cd008f"/><stop offset="0.848" stop-color="#cd008c"/><stop offset="0.879" stop-color="#cd0089"/><stop offset="0.909" stop-color="#cd0086"/><stop offset="0.939" stop-color="#cd0084"/><stop offset="0.970" stop-color="#cd0081"/><stop offset="1.000" stop-color="#cd007f"/></linearGradient><linearGradient id="r79" gradientUnits="userSpaceOnUse" x1="2069" x2="3663" y1="0" y2="0"><stop offset="0.000" stop-color="#0087cd"/><stop offset="0.030" stop-color="#0081cd"/><stop offset="0.061" stop-color="#0079cd"/><stop offset="0.091" stop-color="#0070cd"/><stop offset="0.121" stop-color="#0063cd"/><stop offset="0.152" stop-color="#0050cd"/><stop offset="0.182" stop-color="#002ecd"/><stop offset="0.212" stop-color="#3c00cd"/><stop offset="0.242" stop-color="#5c00cd"/><stop offset="0.273" stop-color="#7300cd"/><stop offset="0.303" stop-color="#8500cd"/><stop offset="0.333" stop-color="#9400cd"/><stop offset="0.364" stop-color="#a200cd"/><stop offset="0.394" stop-color="#af00cd"/><stop offset="0.424" stop-color="#ba00cd"/><stop offset="0.455" stop-color="#c500cd"/><stop offset="0.485" stop-color="#cd00ca"/><stop offset="0.515" stop-color="#cd00c1"/><stop offset="0.545" stop-color="#cd00b9"/><stop offset="0.576" stop-color="#cd00b3"/><stop offset="0.606" stop-color="#cd00ac"/><stop offset="0.636" stop-color="#cd00a7"/><stop offset="0.667" stop-color="#cd00a2"/><stop offset="0.697" stop-color="#cd009e"/><stop offset="0.727" stop-color="#cd0099"/><stop offset="0.758" stop-color="#cd0096"/><stop offset="0.788" stop-color="#cd0092"/><stop offset="0.818" stop-color="#cd008f"/><stop offset="0.848" stop-color="#cd008c"/><stop offset="0.879" stop-color="#cd0089"/><stop offset="0.909" stop-color="#cd0086"/><stop offset="0.939" stop-color="#cd0084"/><stop offset="0.970" stop-color="#cd0081"/><stop offset="1.000" stop-color="#cd007f"/></linearGradient></defs><rect x="2129" y="520" width="1474" height="1161" fill="#03090c"/><g clip-path="url(#lc)"><g filter="url(#bl)"><rect x="2069" y="472" width="1594" height="17" fill="url(#r0)"/><rect x="2069" y="488" width="1594" height="17" fill="url(#r1)"/><rect x="2069" y="504" width="1594" height="17" fill="url(#r2)"/><rect x="2069" y="520" width="1594" height="17" fill="url(#r3)"/><rect x="2069" y="536" width="1594" height="17" fill="url(#r4)"/><rect x="2069" y="552" width="1594" height="17" fill="url(#r5)"/><rect x="2069" y="568" width="1594" height="17" fill="url(#r6)"/><rect x="2069" y="584" width="1594" height="17" fill="url(#r7)"/><rect x="2069" y="600" width="1594" height="17" fill="url(#r8)"/><rect x="2069" y="616" width="1594" height="17" fill="url(#r9)"/><rect x="2069" y="632" width="1594" height="17" fill="url(#r10)"/><rect x="2069" y="648" width="1594" height="17" fill="url(#r11)"/><rect x="2069" y="664" width="1594" height="17" fill="url(#r12)"/><rect x="2069" y="680" width="1594" height="17" fill="url(#r13)"/><rect x="2069" y="696" width="1594" height="17" fill="url(#r14)"/><rect x="2069" y="712" width="1594" height="17" fill="url(#r15)"/><rect x="2069" y="728" width="1594" height="17" fill="url(#r16)"/><rect x="2069" y="744" width="1594" height="17" fill="url(#r17)"/><rect x="2069" y="760" width="1594" height="17" fill="url(#r18)"/><rect x="2069" y="776" width="1594" height="17" fill="url(#r19)"/><rect x="2069" y="792" width="1594" height="17" fill="url(#r20)"/><rect x="2069" y="808" width="1594" height="17" fill="url(#r21)"/><rect x="2069" y="824" width="1594" height="17" fill="url(#r22)"/><rect x="2069" y="840" width="1594" height="17" fill="url(#r23)"/><rect x="2069" y="856" width="1594" height="17" fill="url(#r24)"/><rect x="2069" y="872" width="1594" height="17" fill="url(#r25)"/><rect x="2069" y="888" width="1594" height="17" fill="url(#r26)"/><rect x="2069" y="904" width="1594" height="17" fill="url(#r27)"/><rect x="2069" y="920" width="1594" height="17" fill="url(#r28)"/><rect x="2069" y="936" width="1594" height="17" fill="url(#r29)"/><rect x="2069" y="952" width="1594" height="17" fill="url(#r30)"/><rect x="2069" y="968" width="1594" height="17" fill="url(#r31)"/><rect x="2069" y="984" width="1594" height="17" fill="url(#r32)"/><rect x="2069" y="1000" width="1594" height="17" fill="url(#r33)"/><rect x="2069" y="1016" width="1594" height="17" fill="url(#r34)"/><rect x="2069" y="1032" width="1594" height="17" fill="url(#r35)"/><rect x="2069" y="1048" width="1594" height="17" fill="url(#r36)"/><rect x="2069" y="1064" width="1594" height="17" fill="url(#r37)"/><rect x="2069" y="1080" width="1594" height="17" fill="url(#r38)"/><rect x="2069" y="1096" width="1594" height="17" fill="url(#r39)"/><rect x="2069" y="1112" width="1594" height="17" fill="url(#r40)"/><rect x="2069" y="1128" width="1594" height="17" fill="url(#r41)"/><rect x="2069" y="1144" width="1594" height="17" fill="url(#r42)"/><rect x="2069" y="1160" width="1594" height="17" fill="url(#r43)"/><rect x="2069" y="1176" width="1594" height="17" fill="url(#r44)"/><rect x="2069" y="1192" width="1594" height="17" fill="url(#r45)"/><rect x="2069" y="1208" width="1594" height="17" fill="url(#r46)"/><rect x="2069" y="1224" width="1594" height="17" fill="url(#r47)"/><rect x="2069" y="1240" width="1594" height="17" fill="url(#r48)"/><rect x="2069" y="1256" width="1594" height="17" fill="url(#r49)"/><rect x="2069" y="1272" width="1594" height="17" fill="url(#r50)"/><rect x="2069" y="1288" width="1594" height="17" fill="url(#r51)"/><rect x="2069" y="1304" width="1594" height="17" fill="url(#r52)"/><rect x="2069" y="1320" width="1594" height="17" fill="url(#r53)"/><rect x="2069" y="1336" width="1594" height="17" fill="url(#r54)"/><rect x="2069" y="1352" width="1594" height="17" fill="url(#r55)"/><rect x="2069" y="1368" width="1594" height="17" fill="url(#r56)"/><rect x="2069" y="1384" width="1594" height="17" fill="url(#r57)"/><rect x="2069" y="1400" width="1594" height="17" fill="url(#r58)"/><rect x="2069" y="1416" width="1594" height="17" fill="url(#r59)"/><rect x="2069" y="1432" width="1594" height="17" fill="url(#r60)"/><rect x="2069" y="1448" width="1594" height="17" fill="url(#r61)"/><rect x="2069" y="1464" width="1594" height="17" fill="url(#r62)"/><rect x="2069" y="1480" width="1594" height="17" fill="url(#r63)"/><rect x="2069" y="1496" width="1594" height="17" fill="url(#r64)"/><rect x="2069" y="1512" width="1594" height="17" fill="url(#r65)"/><rect x="2069" y="1528" width="1594" height="17" fill="url(#r66)"/><rect x="2069" y="1544" width="1594" height="17" fill="url(#r67)"/><rect x="2069" y="1560" width="1594" height="17" fill="url(#r68)"/><rect x="2069" y="1576" width="1594" height="17" fill="url(#r69)"/><rect x="2069" y="1592" width="1594" height="17" fill="url(#r70)"/><rect x="2069" y="1608" width="1594" height="17" fill="url(#r71)"/><rect x="2069" y="1624" width="1594" height="17" fill="url(#r72)"/><rect x="2069" y="1640" width="1594" height="17" fill="url(#r73)"/><rect x="2069" y="1656" width="1594" height="17" fill="url(#r74)"/><rect x="2069" y="1672" width="1594" height="17" fill="url(#r75)"/><rect x="2069" y="1688" width="1594" height="17" fill="url(#r76)"/><rect x="2069" y="1704" width="1594" height="17" fill="url(#r77)"/><rect x="2069" y="1720" width="1594" height="17" fill="url(#r78)"/><rect x="2069" y="1736" width="1594" height="17" fill="url(#r79)"/></g></g><path d="M2520.0 1760.0 L2460.0 1730.0 L2444.5 1705.5 L2444.2 1705.3 L2443.8 1705.0 L2443.0 1704.5 L2442.1 1703.9 L2440.9 1703.0 L2439.5 1702.1 L2437.8 1700.9 L2435.9 1699.6 L2433.9 1698.2 L2431.9 1696.8 L2429.9 1695.2 L2427.8 1693.6 L2425.6 1692.0 L2423.4 1690.2 L2421.1 1688.4 L2418.8 1686.5 L2416.4 1684.4 L2413.9 1682.1 L2411.3 1679.7 L2408.6 1677.1 L2405.8 1674.3 L2402.9 1671.3 L2399.9 1668.1 L2396.8 1664.8 L2393.5 1661.2 L2390.2 1657.3 L2386.8 1653.2 L2383.3 1648.8 L2379.7 1644.2 L2375.9 1639.3 L2372.1 1634.1 L2368.1 1628.7 L2364.0 1622.9 L2359.8 1616.7 L2355.5 1610.1 L2351.0 1603.1 L2346.4 1595.7 L2341.7 1587.9 L2336.9 1579.8 L2331.9 1571.2 L2326.8 1562.1 L2321.5 1552.5 L2316.1 1542.4 L2310.5 1531.8 L2304.8 1520.6 L2298.9 1509.0 L2292.9 1496.8 L2286.8 1484.1 L2280.6 1470.8 L2274.4 1456.9 L2268.2 1442.3 L2261.9 1427.2 L2255.6 1411.4 L2249.3 1395.0 L2243.0 1378.0 L2236.7 1360.4 L2230.8 1343.8 L2225.2 1328.1 L2220.1 1313.4 L2215.4 1299.7 L2211.1 1286.9 L2207.2 1275.2 L2203.8 1264.3 L2200.7 1254.5 L2197.7 1244.3 L2194.7 1233.9 L2191.7 1223.2 L2188.7 1212.2 L2185.7 1200.8 L2182.8 1189.2 L2179.9 1177.3 L2176.9 1165.2 L2173.9 1152.7 L2170.8 1139.8 L2167.6 1126.7 L2164.3 1113.3 L2160.9 1099.5 L2157.4 1085.5 L2153.8 1071.1 L2150.0 1056.4 L2146.7 1042.4 L2143.6 1029.2 L2140.9 1016.7 L2138.5 1004.9 L2136.5 993.9 L2134.8 983.5 L2133.5 973.9 L2132.5 965.1 L2131.5 956.0 L2130.6 946.7 L2129.8 937.2 L2129.0 927.5 L2128.2 917.6 L2127.5 907.5 L2126.8 897.2 L2126.2 886.8 L2125.6 876.2 L2125.2 865.5 L2124.8 854.7 L2124.5 843.8 L2124.2 832.8 L2124.1 821.8 L2124.0 810.6 L2124.0 799.4 L2124.1 788.4 L2124.2 777.8 L2124.5 767.5 L2124.8 757.5 L2125.2 747.8 L2125.6 738.4 L2126.2 729.4 L2126.8 720.6 L2127.4 712.3 L2128.0 704.4 L2128.5 696.9 L2129.1 689.8 L2129.6 683.2 L2130.1 677.0 L2130.5 671.2 L2131.0 665.8 L2131.5 660.3 L2132.3 654.5 L2133.1 648.7 L2134.1 642.6 L2135.3 636.4 L2136.5 630.0 L2138.0 623.4 L2139.5 616.6 L2141.3 610.0 L2143.2 603.4 L2145.4 596.9 L2147.7 590.6 L2150.3 584.3 L2153.0 578.1 L2155.9 572.0 L2159.1 566.0 L2162.2 560.4 L2165.5 555.1 L2168.8 550.2 L2172.2 545.6 L2175.6 541.4 L2179.1 537.5 L2182.7 534.1 L2186.3 530.9 L2190.1 527.8 L2194.1 524.8 L2198.3 521.8 L2202.7 518.8 L2207.2 515.8 L2212.0 512.8 L2216.9 509.9 L2222.1 507.1 L2227.5 504.4 L2233.2 501.8 L2239.2 499.5 L2245.5 497.3 L2252.1 495.3 L2259.0 493.4 L2266.2 491.8 L2273.8 490.2 L2281.4 489.0 L2289.2 488.0 L2297.2 487.3 L2305.3 486.9 L2313.6 486.7 L2322.0 486.8 L2330.6 487.2 L2339.4 487.8 L2347.8 488.6 L2355.9 489.5 L2363.8 490.6 L2371.2 491.9 L2378.4 493.3 L2385.3 494.8 L2391.9 496.6 L2398.1 498.4 L2404.1 500.3 L2409.7 502.2 L2415.0 504.1 L2420.0 505.9 L2424.7 507.8 L2429.1 509.7 L2433.1 511.6 L2436.9 513.4 L2441.1 515.5 L2445.9 517.6 L2451.2 519.9 L2457.0 522.3 L2463.4 524.9 L2470.2 527.6 L2477.6 530.5 L2485.4 533.5 L2492.9 536.5 L2500.0 539.5 L2506.7 542.4 L2513.0 545.3 L2519.0 548.3 L2524.5 551.2 L2529.6 554.1 L2534.4 556.9 L2540.0 560.2 L2546.5 564.0 L2553.9 568.2 L2562.1 572.8 L2571.2 577.9 L2581.2 583.4 L2592.1 589.3 L2603.9 595.7 L2615.3 602.0 L2626.5 608.4 L2637.3 614.7 L2647.9 621.0 L2658.2 627.3 L2668.1 633.6 L2677.8 639.9 L2687.2 646.1 L2697.4 653.0 L2708.5 660.4 L2720.5 668.4 L2733.3 677.0 L2747.0 686.1 L2761.6 695.9 L2777.0 706.2 L2793.3 717.1 L2808.7 727.5 L2823.4 737.3 L2837.2 746.5 L2850.2 755.2 L2862.4 763.3 L2873.8 770.8 L2884.4 777.8 L2894.1 784.2 L2903.8 790.7 L2913.6 797.1 L2923.3 803.6 L2933.0 810.0 L2942.7 816.5 L2952.4 823.0 L2962.1 829.5 L2971.8 836.0 L2981.5 842.5 L2991.2 849.1 L3000.9 855.6 L3010.5 862.1 L3020.2 868.6 L3029.8 875.1 L3039.5 881.6 L3049.1 888.2 L3058.7 894.7 L3068.3 901.2 L3077.9 907.6 L3087.4 914.1 L3096.9 920.6 L3106.4 927.0 L3115.9 933.5 L3125.4 939.9 L3134.8 946.4 L3144.2 952.8 L3153.5 959.1 L3162.8 965.5 L3172.1 971.8 L3181.3 978.1 L3190.5 984.4 L3199.7 990.7 L3208.8 996.9 L3217.9 1003.2 L3227.0 1009.3 L3235.9 1015.5 L3244.9 1021.6 L3253.8 1027.7 L3262.6 1033.7 L3271.4 1039.7 L3280.1 1045.7 L3288.8 1051.6 L3297.4 1057.5 L3305.9 1063.3 L3314.4 1069.1 L3322.8 1074.8 L3331.1 1080.5 L3339.4 1086.1 L3347.6 1091.7 L3355.7 1097.2 L3363.7 1102.7 L3371.6 1108.1 L3379.4 1113.4 L3387.1 1118.7 L3394.8 1124.0 L3402.3 1129.1 L3409.7 1134.2 L3417.0 1139.2 L3424.2 1144.1 L3431.3 1148.9 L3438.2 1153.7 L3445.0 1158.3 L3451.7 1162.9 L3458.2 1167.4 L3464.7 1171.8 L3471.1 1176.1 L3477.3 1180.4 L3483.5 1184.6 L3489.6 1188.8 L3495.5 1192.9 L3501.4 1196.9 L3507.2 1200.8 L3512.8 1204.6 L3518.4 1208.4 L3523.8 1212.1 L3529.0 1215.7 L3534.2 1219.2 L3539.2 1222.6 L3544.2 1226.0 L3548.9 1229.2 L3553.6 1232.4 L3558.2 1235.5 L3562.6 1238.5 L3567.0 1241.5 L3571.2 1244.4 L3575.3 1247.2 L3579.3 1249.9 L3583.2 1252.6 L3587.0 1255.2 L3590.7 1257.7 L3594.3 1260.2 L3597.8 1262.6 L3601.2 1264.9 L3604.5 1267.2 L3607.7 1269.4 L3610.8 1271.5 L3613.5 1273.4 L3615.9 1275.0 L3617.8 1276.3 L3619.4 1277.4 L3620.5 1278.2 L3621.3 1278.7 L3621.7 1279.0 L3691.0 1324.0 L2323.8 1760.0Z" fill="none" stroke="#f5a000" stroke-width="2"/><g stroke="#404040" stroke-width="1.7"><line x1="2333.4" y1="520" x2="2333.4" y2="1681"/><line x1="2551.2" y1="520" x2="2551.2" y2="1681"/><line x1="2769.0" y1="520" x2="2769.0" y2="1681"/><line x1="2986.8" y1="520" x2="2986.8" y2="1681"/><line x1="3204.6" y1="520" x2="3204.6" y2="1681"/><line x1="3422.4" y1="520" x2="3422.4" y2="1681"/><line x1="2129" y1="1590.1" x2="3603" y2="1590.1"/><line x1="2129" y1="1440.7" x2="3603" y2="1440.7"/><line x1="2129" y1="1291.4" x2="3603" y2="1291.4"/><line x1="2129" y1="1142.0" x2="3603" y2="1142.0"/><line x1="2129" y1="992.7" x2="3603" y2="992.7"/><line x1="2129" y1="843.3" x2="3603" y2="843.3"/><line x1="2129" y1="694.0" x2="3603" y2="694.0"/><line x1="2129" y1="544.6" x2="3603" y2="544.6"/></g><g stroke="#e8e8e8" stroke-width="1.2" stroke-dasharray="6 5" opacity="0.9"><line x1="2796" y1="520" x2="2796" y2="1681"/><line x1="2129" y1="1247" x2="3603" y2="1247"/></g><linearGradient id="tgr" gradientUnits="userSpaceOnUse" x1="2769.0" y1="843.3" x2="3509.5" y2="1246.5"><stop offset="0" stop-color="#007800"/><stop offset="0.17" stop-color="#007800"/><stop offset="0.175" stop-color="#5a5c00"/><stop offset="0.585" stop-color="#5a5c00"/><stop offset="0.59" stop-color="#8c0000"/><stop offset="1" stop-color="#8c0000"/></linearGradient><line x1="2769.0" y1="843.3" x2="3509.5" y2="1246.5" stroke="url(#tgr)" stroke-width="3.2"/><linearGradient id="trb" gradientUnits="userSpaceOnUse" x1="3509.5" y1="1246.5" x2="2442.3" y2="1649.8"><stop offset="0" stop-color="#8c0000"/><stop offset="0.415" stop-color="#8c0000"/><stop offset="0.42" stop-color="#7a0088"/><stop offset="0.83" stop-color="#7a0088"/><stop offset="0.835" stop-color="#14148c"/><stop offset="1" stop-color="#14148c"/></linearGradient><line x1="3509.5" y1="1246.5" x2="2442.3" y2="1649.8" stroke="url(#trb)" stroke-width="3.2"/><linearGradient id="tbg" gradientUnits="userSpaceOnUse" x1="2442.3" y1="1649.8" x2="2769.0" y2="843.3"><stop offset="0" stop-color="#14148c"/><stop offset="0.268" stop-color="#14148c"/><stop offset="0.273" stop-color="#007a80"/><stop offset="0.74" stop-color="#007a80"/><stop offset="0.745" stop-color="#007800"/><stop offset="1" stop-color="#007800"/></linearGradient><line x1="2442.3" y1="1649.8" x2="2769.0" y2="843.3" stroke="url(#tbg)" stroke-width="3.2"/><path d="M2657 1375.6 L2700 1330 L2738 1298 L2790 1260 L2843 1223 L2948 1168 L3000 1148 L3069 1128 L3119 1118 L3145 1114" fill="none" stroke="#b8b8b8" stroke-width="2.5" opacity="0.85"/><circle cx="2738" cy="1298" r="4" fill="#fff" stroke="#000" stroke-width="1.5"/><circle cx="2842.6" cy="1223" r="4" fill="#fff" stroke="#000" stroke-width="1.5"/><circle cx="2948.6" cy="1167.6" r="4" fill="#fff" stroke="#000" stroke-width="1.5"/><circle cx="3069.7" cy="1127.5" r="4" fill="#fff" stroke="#000" stroke-width="1.5"/><circle cx="3119" cy="1118.2" r="4" fill="#fff" stroke="#000" stroke-width="1.5"/><circle cx="2789" cy="1267" r="4" fill="#00e000" stroke="#000" stroke-width="1"/><circle cx="2873" cy="1214" r="4" fill="#00e000" stroke="#000" stroke-width="1"/><circle cx="3089" cy="1130.4" r="4" fill="#00e000" stroke="#000" stroke-width="1"/><text x="2713" y="1290" font-family="Liberation Serif, serif" font-size="19" fill="#222" text-anchor="middle">9300</text><text x="2819" y="1215" font-family="Liberation Serif, serif" font-size="19" fill="#222" text-anchor="middle">5500</text><text x="2924" y="1159" font-family="Liberation Serif, serif" font-size="19" fill="#222" text-anchor="middle">4000</text><text x="3052" y="1119" font-family="Liberation Serif, serif" font-size="19" fill="#222" text-anchor="middle">3000</text><text x="3137" y="1109" font-family="Liberation Serif, serif" font-size="19" fill="#222" text-anchor="middle">2700</text><text x="3093" y="1155" font-family="Liberation Serif, serif" font-size="19" fill="#222" text-anchor="middle">A</text><text x="2885" y="1238" font-family="Liberation Serif, serif" font-size="19" fill="#222" text-anchor="middle">B</text><text x="2801" y="1292" font-family="Liberation Serif, serif" font-size="19" fill="#222" text-anchor="middle">C</text><text x="2752" y="1256" font-family="Liberation Serif, serif" font-size="19" fill="#222" text-anchor="start">D65</text><line x1="2646" y1="618" x2="2687" y2="554" stroke="#d0d0d0" stroke-width="1.5"/><text x="2687" y="571" font-family="Liberation Serif, serif" font-size="28" fill="#e6e6e6" text-anchor="start">540 nm</text><line x1="2943.6" y1="814.5" x2="2987" y2="750.6" stroke="#d0d0d0" stroke-width="1.5"/><text x="2987" y="768" font-family="Liberation Serif, serif" font-size="28" fill="#e6e6e6" text-anchor="start">560 nm</text><line x1="3154" y1="959" x2="3196" y2="893" stroke="#d0d0d0" stroke-width="1.5"/><text x="3198" y="911" font-family="Liberation Serif, serif" font-size="28" fill="#e6e6e6" text-anchor="start">580 nm</text><line x1="3299" y1="1060" x2="3341.6" y2="991.4" stroke="#d0d0d0" stroke-width="1.5"/><text x="3342" y="1011" font-family="Liberation Serif, serif" font-size="28" fill="#e6e6e6" text-anchor="start">600 nm</text><line x1="3437" y1="1153.5" x2="3481" y2="1084.8" stroke="#d0d0d0" stroke-width="1.5"/><text x="3481" y="1104" font-family="Liberation Serif, serif" font-size="28" fill="#e6e6e6" text-anchor="start">620 nm</text><line x1="2247.8" y1="1490.7" x2="2289" y2="1478" stroke="#d0d0d0" stroke-width="1.5"/><text x="2176" y="1517" font-family="Liberation Serif, serif" font-size="28" fill="#e6e6e6" text-anchor="start">480 nm</text><line x1="2344" y1="1657.7" x2="2383.4" y2="1643" stroke="#d0d0d0" stroke-width="1.5"/><text x="2272" y="1690" font-family="Liberation Serif, serif" font-size="28" fill="#e6e6e6" text-anchor="start">460 nm</text><line x1="3584" y1="1266" x2="3603" y2="1237" stroke="#d0d0d0" stroke-width="1.5"/><defs><radialGradient id="shd"><stop offset="0.5" stop-color="#000" stop-opacity="0.7"/><stop offset="1" stop-color="#000" stop-opacity="0"/></radialGradient></defs><defs><radialGradient id="sp7fe8e8" cx="0.5" cy="0.5" r="0.5" fx="0.55" fy="0.5"><stop offset="0" stop-color="#c8ffff"/><stop offset="0.5" stop-color="#7fe8e8"/><stop offset="0.85" stop-color="#7fe8e8"/><stop offset="1" stop-color="#202020"/></radialGradient><radialGradient id="sp10c010" cx="0.5" cy="0.5" r="0.5" fx="0.55" fy="0.5"><stop offset="0" stop-color="#40ff40"/><stop offset="0.5" stop-color="#10c010"/><stop offset="0.85" stop-color="#10c010"/><stop offset="1" stop-color="#202020"/></radialGradient><radialGradient id="spe8e090" cx="0.5" cy="0.5" r="0.5" fx="0.55" fy="0.5"><stop offset="0" stop-color="#fffcc0"/><stop offset="0.5" stop-color="#e8e090"/><stop offset="0.85" stop-color="#e8e090"/><stop offset="1" stop-color="#202020"/></radialGradient><radialGradient id="spe02010" cx="0.5" cy="0.5" r="0.5" fx="0.55" fy="0.5"><stop offset="0" stop-color="#ff5030"/><stop offset="0.5" stop-color="#e02010"/><stop offset="0.85" stop-color="#e02010"/><stop offset="1" stop-color="#202020"/></radialGradient><radialGradient id="spe000e0" cx="0.5" cy="0.5" r="0.5" fx="0.55" fy="0.5"><stop offset="0" stop-color="#ff50ff"/><stop offset="0.5" stop-color="#e000e0"/><stop offset="0.85" stop-color="#e000e0"/><stop offset="1" stop-color="#202020"/></radialGradient><radialGradient id="sp2030e0" cx="0.5" cy="0.5" r="0.5" fx="0.55" fy="0.5"><stop offset="0" stop-color="#6070ff"/><stop offset="0.5" stop-color="#2030e0"/><stop offset="0.85" stop-color="#2030e0"/><stop offset="1" stop-color="#202020"/></radialGradient><radialGradient id="spf0f000" cx="0.5" cy="0.5" r="0.5" fx="0.55" fy="0.5"><stop offset="0" stop-color="#ffff60"/><stop offset="0.5" stop-color="#f0f000"/><stop offset="0.85" stop-color="#f0f000"/><stop offset="1" stop-color="#202020"/></radialGradient></defs><rect x="2594.5" y="1239.1" width="19" height="19" fill="#40ffff" fill-opacity="0.55" stroke="#40ffff" stroke-width="3.5"/><path d="M2592.5 1260.1V1237.1H2615.5" fill="none" stroke="#101a70" stroke-width="1.3"/><path d="M2592.5 1260.1H2615.5V1237.1" fill="none" stroke="#d01040" stroke-width="1.3"/><circle cx="2614.5" cy="1250" r="10.5" fill="url(#shd)"/><circle cx="2612" cy="1247" r="8.5" fill="url(#sp7fe8e8)" stroke="#000" stroke-opacity="0.35" stroke-width="1"/><circle cx="2612.5" cy="1248" r="1.4" fill="#600"/><rect x="2642.5" y="1239.1" width="19" height="19" fill="#40ffff" fill-opacity="0.55" stroke="#40ffff" stroke-width="3.5"/><path d="M2640.5 1260.1V1237.1H2663.5" fill="none" stroke="#101a70" stroke-width="1.3"/><path d="M2640.5 1260.1H2663.5V1237.1" fill="none" stroke="#d01040" stroke-width="1.3"/><circle cx="2659.0" cy="1253" r="10.5" fill="url(#shd)"/><circle cx="2656.5" cy="1250" r="8.5" fill="url(#sp7fe8e8)" stroke="#000" stroke-opacity="0.35" stroke-width="1"/><circle cx="2657.0" cy="1251" r="1.4" fill="#600"/><rect x="2692.0" y="1239.1" width="19" height="19" fill="#40ffff" fill-opacity="0.55" stroke="#40ffff" stroke-width="3.5"/><path d="M2690.0 1260.1V1237.1H2713.0" fill="none" stroke="#101a70" stroke-width="1.3"/><path d="M2690.0 1260.1H2713.0V1237.1" fill="none" stroke="#d01040" stroke-width="1.3"/><circle cx="2705.5" cy="1253" r="10.5" fill="url(#shd)"/><circle cx="2703" cy="1250" r="8.5" fill="url(#sp7fe8e8)" stroke="#000" stroke-opacity="0.35" stroke-width="1"/><circle cx="2703.5" cy="1251" r="1.4" fill="#600"/><rect x="2738.5" y="1239.1" width="19" height="19" fill="#40ffff" fill-opacity="0.55" stroke="#40ffff" stroke-width="3.5"/><path d="M2736.5 1260.1V1237.1H2759.5" fill="none" stroke="#101a70" stroke-width="1.3"/><path d="M2736.5 1260.1H2759.5V1237.1" fill="none" stroke="#d01040" stroke-width="1.3"/><circle cx="2748.5" cy="1255" r="10.5" fill="url(#shd)"/><circle cx="2746" cy="1252" r="8.5" fill="url(#sp7fe8e8)" stroke="#000" stroke-opacity="0.35" stroke-width="1"/><circle cx="2746.5" cy="1253" r="1.4" fill="#600"/><rect x="2759.5" y="833.9" width="19" height="19" fill="#40ff00" fill-opacity="0.55" stroke="#40ff00" stroke-width="3.5"/><path d="M2757.5 854.9V831.9H2780.5" fill="none" stroke="#101a70" stroke-width="1.3"/><path d="M2757.5 854.9H2780.5V831.9" fill="none" stroke="#d01040" stroke-width="1.3"/><circle cx="2777.5" cy="840" r="10.5" fill="url(#shd)"/><circle cx="2775" cy="837" r="8.5" fill="url(#sp10c010)" stroke="#000" stroke-opacity="0.35" stroke-width="1"/><circle cx="2775.5" cy="838" r="1.4" fill="#000"/><rect x="2765.0" y="935.2" width="19" height="19" fill="#40ff00" fill-opacity="0.55" stroke="#40ff00" stroke-width="3.5"/><path d="M2763.0 956.2V933.2H2786.0" fill="none" stroke="#101a70" stroke-width="1.3"/><path d="M2763.0 956.2H2786.0V933.2" fill="none" stroke="#d01040" stroke-width="1.3"/><circle cx="2781.1" cy="944.8" r="10.5" fill="url(#shd)"/><circle cx="2778.6" cy="941.8" r="8.5" fill="url(#sp10c010)" stroke="#000" stroke-opacity="0.35" stroke-width="1"/><circle cx="2779.1" cy="942.8" r="1.4" fill="#000"/><rect x="2773.2" y="1037.5" width="19" height="19" fill="#40ff00" fill-opacity="0.55" stroke="#40ff00" stroke-width="3.5"/><path d="M2771.2 1058.5V1035.5H2794.2" fill="none" stroke="#101a70" stroke-width="1.3"/><path d="M2771.2 1058.5H2794.2V1035.5" fill="none" stroke="#d01040" stroke-width="1.3"/><circle cx="2785.8" cy="1048.4" r="10.5" fill="url(#shd)"/><circle cx="2783.3" cy="1045.4" r="8.5" fill="url(#sp10c010)" stroke="#000" stroke-opacity="0.35" stroke-width="1"/><circle cx="2783.8" cy="1046.4" r="1.4" fill="#000"/><rect x="2779.5" y="1137.8" width="19" height="19" fill="#40ff00" fill-opacity="0.55" stroke="#40ff00" stroke-width="3.5"/><path d="M2777.5 1158.8V1135.8H2800.5" fill="none" stroke="#101a70" stroke-width="1.3"/><path d="M2777.5 1158.8H2800.5V1135.8" fill="none" stroke="#d01040" stroke-width="1.3"/><circle cx="2789.8" cy="1153.2" r="10.5" fill="url(#shd)"/><circle cx="2787.3" cy="1150.2" r="8.5" fill="url(#sp10c010)" stroke="#000" stroke-opacity="0.35" stroke-width="1"/><circle cx="2787.8" cy="1151.2" r="1.4" fill="#000"/><rect x="3018.3" y="974.8" width="19" height="19" fill="#ffe000" fill-opacity="0.55" stroke="#ffe000" stroke-width="3.5"/><path d="M3016.3 995.8V972.8H3039.3" fill="none" stroke="#101a70" stroke-width="1.3"/><path d="M3016.3 995.8H3039.3V972.8" fill="none" stroke="#d01040" stroke-width="1.3"/><circle cx="3041.9" cy="987.3" r="10.5" fill="url(#shd)"/><circle cx="3039.4" cy="984.3" r="8.5" fill="url(#spe8e090)" stroke="#000" stroke-opacity="0.35" stroke-width="1"/><circle cx="3039.9" cy="985.3" r="1.4" fill="#000"/><rect x="2960.1" y="1042.3" width="19" height="19" fill="#ffe000" fill-opacity="0.55" stroke="#ffe000" stroke-width="3.5"/><path d="M2958.1 1063.3V1040.3H2981.1" fill="none" stroke="#101a70" stroke-width="1.3"/><path d="M2958.1 1063.3H2981.1V1040.3" fill="none" stroke="#d01040" stroke-width="1.3"/><circle cx="2973.2" cy="1054.8" r="10.5" fill="url(#shd)"/><circle cx="2970.7" cy="1051.8" r="8.5" fill="url(#spe8e090)" stroke="#000" stroke-opacity="0.35" stroke-width="1"/><circle cx="2971.2" cy="1052.8" r="1.4" fill="#000"/><rect x="2901.8" y="1107.5" width="19" height="19" fill="#ffe000" fill-opacity="0.55" stroke="#ffe000" stroke-width="3.5"/><path d="M2899.8 1128.5V1105.5H2922.8" fill="none" stroke="#101a70" stroke-width="1.3"/><path d="M2899.8 1128.5H2922.8V1105.5" fill="none" stroke="#d01040" stroke-width="1.3"/><circle cx="2915.0" cy="1123" r="10.5" fill="url(#shd)"/><circle cx="2912.5" cy="1120" r="8.5" fill="url(#spe8e090)" stroke="#000" stroke-opacity="0.35" stroke-width="1"/><circle cx="2913.0" cy="1121" r="1.4" fill="#000"/><rect x="2843.0" y="1173.9" width="19" height="19" fill="#ffe000" fill-opacity="0.55" stroke="#ffe000" stroke-width="3.5"/><path d="M2841.0 1194.9V1171.9H2864.0" fill="none" stroke="#101a70" stroke-width="1.3"/><path d="M2841.0 1194.9H2864.0V1171.9" fill="none" stroke="#d01040" stroke-width="1.3"/><circle cx="2853.9" cy="1189.9" r="10.5" fill="url(#shd)"/><circle cx="2851.4" cy="1186.9" r="8.5" fill="url(#spe8e090)" stroke="#000" stroke-opacity="0.35" stroke-width="1"/><circle cx="2851.9" cy="1187.9" r="1.4" fill="#000"/><rect x="3499.8" y="1237.9" width="19" height="19" fill="#ff0000" fill-opacity="0.55" stroke="#ff0000" stroke-width="3.5"/><path d="M3497.8 1258.9V1235.9H3520.8" fill="none" stroke="#101a70" stroke-width="1.3"/><path d="M3497.8 1258.9H3520.8V1235.9" fill="none" stroke="#d01040" stroke-width="1.3"/><circle cx="3514.5" cy="1250.4" r="10.5" fill="url(#shd)"/><circle cx="3512" cy="1247.4" r="8.5" fill="url(#spe02010)" stroke="#000" stroke-opacity="0.35" stroke-width="1"/><circle cx="3512.5" cy="1248.4" r="1.4" fill="#600"/><rect x="3319.25" y="1237.5" width="19" height="19" fill="#ff0000" fill-opacity="0.55" stroke="#ff0000" stroke-width="3.5"/><path d="M3317.25 1258.5V1235.5H3340.25" fill="none" stroke="#101a70" stroke-width="1.3"/><path d="M3317.25 1258.5H3340.25V1235.5" fill="none" stroke="#d01040" stroke-width="1.3"/><circle cx="3333.5" cy="1244.5" r="10.5" fill="url(#shd)"/><circle cx="3331" cy="1241.5" r="8.5" fill="url(#spe02010)" stroke="#000" stroke-opacity="0.35" stroke-width="1"/><circle cx="3331.5" cy="1242.5" r="1.4" fill="#600"/><rect x="3137.5" y="1237.9" width="19" height="19" fill="#ff0000" fill-opacity="0.55" stroke="#ff0000" stroke-width="3.5"/><path d="M3135.5 1258.9V1235.9H3158.5" fill="none" stroke="#101a70" stroke-width="1.3"/><path d="M3135.5 1258.9H3158.5V1235.9" fill="none" stroke="#d01040" stroke-width="1.3"/><circle cx="3149.5" cy="1242.3" r="10.5" fill="url(#shd)"/><circle cx="3147" cy="1239.3" r="8.5" fill="url(#spe02010)" stroke="#000" stroke-opacity="0.35" stroke-width="1"/><circle cx="3147.5" cy="1240.3" r="1.4" fill="#600"/><rect x="2963.0" y="1237.9" width="19" height="19" fill="#ff0000" fill-opacity="0.55" stroke="#ff0000" stroke-width="3.5"/><path d="M2961.0 1258.9V1235.9H2984.0" fill="none" stroke="#101a70" stroke-width="1.3"/><path d="M2961.0 1258.9H2984.0V1235.9" fill="none" stroke="#d01040" stroke-width="1.3"/><circle cx="2970.3" cy="1244.6" r="10.5" fill="url(#shd)"/><circle cx="2967.8" cy="1241.6" r="8.5" fill="url(#spe02010)" stroke="#000" stroke-opacity="0.35" stroke-width="1"/><circle cx="2968.3" cy="1242.6" r="1.4" fill="#600"/><rect x="2789.9" y="1302.5" width="19" height="19" fill="#ff00ff" fill-opacity="0.55" stroke="#ff00ff" stroke-width="3.5"/><path d="M2787.9 1323.5V1300.5H2810.9" fill="none" stroke="#101a70" stroke-width="1.3"/><path d="M2787.9 1323.5H2810.9V1300.5" fill="none" stroke="#d01040" stroke-width="1.3"/><circle cx="2801.9" cy="1314" r="10.5" fill="url(#shd)"/><circle cx="2799.4" cy="1311" r="8.5" fill="url(#spe000e0)" stroke="#000" stroke-opacity="0.35" stroke-width="1"/><circle cx="2799.9" cy="1312" r="1.4" fill="#000"/><rect x="2794.5" y="1368.0" width="19" height="19" fill="#ff00ff" fill-opacity="0.55" stroke="#ff00ff" stroke-width="3.5"/><path d="M2792.5 1389.0V1366.0H2815.5" fill="none" stroke="#101a70" stroke-width="1.3"/><path d="M2792.5 1389.0H2815.5V1366.0" fill="none" stroke="#d01040" stroke-width="1.3"/><circle cx="2806.5" cy="1380.5" r="10.5" fill="url(#shd)"/><circle cx="2804" cy="1377.5" r="8.5" fill="url(#spe000e0)" stroke="#000" stroke-opacity="0.35" stroke-width="1"/><circle cx="2804.5" cy="1378.5" r="1.4" fill="#000"/><rect x="2799.3" y="1432.5" width="19" height="19" fill="#ff00ff" fill-opacity="0.55" stroke="#ff00ff" stroke-width="3.5"/><path d="M2797.3 1453.5V1430.5H2820.3" fill="none" stroke="#101a70" stroke-width="1.3"/><path d="M2797.3 1453.5H2820.3V1430.5" fill="none" stroke="#d01040" stroke-width="1.3"/><circle cx="2815.0" cy="1444" r="10.5" fill="url(#shd)"/><circle cx="2812.5" cy="1441" r="8.5" fill="url(#spe000e0)" stroke="#000" stroke-opacity="0.35" stroke-width="1"/><circle cx="2813.0" cy="1442" r="1.4" fill="#000"/><rect x="2801.5" y="1497.9" width="19" height="19" fill="#ff00ff" fill-opacity="0.55" stroke="#ff00ff" stroke-width="3.5"/><path d="M2799.5 1518.9V1495.9H2822.5" fill="none" stroke="#101a70" stroke-width="1.3"/><path d="M2799.5 1518.9H2822.5V1495.9" fill="none" stroke="#d01040" stroke-width="1.3"/><circle cx="2822.3" cy="1512.3" r="10.5" fill="url(#shd)"/><circle cx="2819.8" cy="1509.3" r="8.5" fill="url(#spf0f000)" stroke="#000" stroke-opacity="0.35" stroke-width="1"/><circle cx="2820.3" cy="1510.3" r="1.4" fill="#660"/><rect x="2697.5" y="1339.9" width="19" height="19" fill="#3c28ff" fill-opacity="0.55" stroke="#3c28ff" stroke-width="3.5"/><path d="M2695.5 1360.9V1337.9H2718.5" fill="none" stroke="#101a70" stroke-width="1.3"/><path d="M2695.5 1360.9H2718.5V1337.9" fill="none" stroke="#d01040" stroke-width="1.3"/><circle cx="2714.0" cy="1348" r="10.5" fill="url(#shd)"/><circle cx="2711.5" cy="1345" r="8.5" fill="url(#sp2030e0)" stroke="#000" stroke-opacity="0.35" stroke-width="1"/><circle cx="2712.0" cy="1346" r="1.4" fill="#000"/><rect x="2608.8" y="1439.9" width="19" height="19" fill="#3c28ff" fill-opacity="0.55" stroke="#3c28ff" stroke-width="3.5"/><path d="M2606.8 1460.9V1437.9H2629.8" fill="none" stroke="#101a70" stroke-width="1.3"/><path d="M2606.8 1460.9H2629.8V1437.9" fill="none" stroke="#d01040" stroke-width="1.3"/><circle cx="2620.8" cy="1452.4" r="10.5" fill="url(#shd)"/><circle cx="2618.3" cy="1449.4" r="8.5" fill="url(#sp2030e0)" stroke="#000" stroke-opacity="0.35" stroke-width="1"/><circle cx="2618.8" cy="1450.4" r="1.4" fill="#000"/><rect x="2522.1" y="1538.7" width="19" height="19" fill="#3c28ff" fill-opacity="0.55" stroke="#3c28ff" stroke-width="3.5"/><path d="M2520.1 1559.7V1536.7H2543.1" fill="none" stroke="#101a70" stroke-width="1.3"/><path d="M2520.1 1559.7H2543.1V1536.7" fill="none" stroke="#d01040" stroke-width="1.3"/><circle cx="2530.2" cy="1558.4" r="10.5" fill="url(#shd)"/><circle cx="2527.7" cy="1555.4" r="8.5" fill="url(#sp2030e0)" stroke="#000" stroke-opacity="0.35" stroke-width="1"/><circle cx="2528.2" cy="1556.4" r="1.4" fill="#000"/><rect x="2431.7" y="1639.5" width="19" height="19" fill="#3c28ff" fill-opacity="0.55" stroke="#3c28ff" stroke-width="3.5"/><path d="M2429.7 1660.5V1637.5H2452.7" fill="none" stroke="#101a70" stroke-width="1.3"/><path d="M2429.7 1660.5H2452.7V1637.5" fill="none" stroke="#d01040" stroke-width="1.3"/><circle cx="2456.7" cy="1650.7" r="10.5" fill="url(#shd)"/><circle cx="2454.2" cy="1647.7" r="8.5" fill="url(#sp2030e0)" stroke="#000" stroke-opacity="0.35" stroke-width="1"/><circle cx="2454.7" cy="1648.7" r="1.4" fill="#000"/><circle cx="2796" cy="1252" r="14" fill="url(#shd)"/><circle cx="2799" cy="1239" r="9" fill="#2020e0"/><circle cx="2792" cy="1254" r="9" fill="#70c0c0"/><circle cx="2795.7" cy="1244.6" r="9" fill="#e010e0" stroke="#333" stroke-width="1"/></svg><div style="position:absolute;left:2125px;top:515px;width:1478px;height:5px;background:#8c8c8c;border-bottom:2px solid #5a5a5a;box-sizing:border-box"></div><div style="position:absolute;left:2125px;top:515px;width:4px;height:1166px;background:#8c8c8c;border-right:2px solid #5a5a5a;box-sizing:border-box"></div></body></html>
